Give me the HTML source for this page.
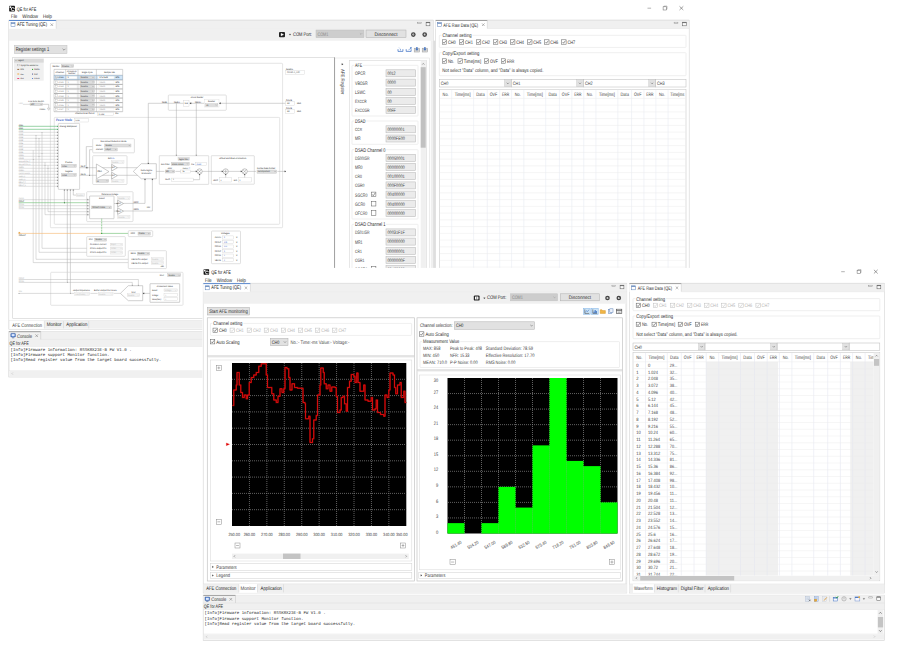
<!DOCTYPE html>
<html lang="en"><head><meta charset="utf-8"><title>QE for AFE</title>
<style>
html,body{margin:0;padding:0;background:#fff;}
body{width:900px;height:648px;overflow:hidden;font-family:"Liberation Sans",sans-serif;}
svg{display:block;}
text{white-space:pre;text-rendering:geometricPrecision;}
</style></head><body>
<svg width="900" height="648" viewBox="0 0 900 648">
<rect x="9.2" y="5.7" width="5.7" height="5.7" fill="#111" rx="0.6"/>
<circle cx="12.73" cy="9.12" r="1.54" fill="none" stroke="#fff" stroke-width="0.9"/>
<rect x="12.73" y="8.84" width="2.17" height="1.14" fill="#111"/>
<rect x="9.66" y="6.27" width="1.54" height="1.71" fill="#fff"/>
<text x="16.8" y="11" font-size="5.08" fill="#1c1c1c" font-family="&quot;Liberation Sans&quot;,sans-serif" textLength="19.5" lengthAdjust="spacingAndGlyphs">QE for AFE</text>
<text x="11" y="18" font-size="5.18" fill="#1c1c1c" font-family="&quot;Liberation Sans&quot;,sans-serif" textLength="6.3" lengthAdjust="spacingAndGlyphs">File</text>
<text x="22.3" y="18" font-size="5.18" fill="#1c1c1c" font-family="&quot;Liberation Sans&quot;,sans-serif" textLength="15.7" lengthAdjust="spacingAndGlyphs">Window</text>
<text x="43" y="18" font-size="5.18" fill="#1c1c1c" font-family="&quot;Liberation Sans&quot;,sans-serif" textLength="9" lengthAdjust="spacingAndGlyphs">Help</text>
<line x1="647.5" y1="8.2" x2="651.1" y2="8.2" stroke="#666" stroke-width="0.5"/>
<rect x="663.1" y="6.8" width="3.2" height="3.2" fill="none" stroke="#666" stroke-width="0.5"/>
<path d="M663.9 6.8 L663.9 6.1 L667 6.1 L667 9.2 L666.3 9.2" fill="none" stroke="#777" stroke-width="0.45"/>
<line x1="679.5" y1="6.3" x2="683.3" y2="10" stroke="#444" stroke-width="0.5"/>
<line x1="679.5" y1="10" x2="683.3" y2="6.3" stroke="#444" stroke-width="0.5"/>
<rect x="8.8" y="20.2" width="424.6" height="309" fill="#fff" stroke="#d4d4d4" stroke-width="0.6"/>
<rect x="9" y="20.3" width="424.2" height="8.1" fill="#f0f0f0"/>
<line x1="9" y1="20.2" x2="433.2" y2="20.2" stroke="#d9d9d9" stroke-width="0.6"/>
<rect x="9" y="28.7" width="424.2" height="12" fill="#f0f0f0"/>
<line x1="9" y1="28.5" x2="433.2" y2="28.5" stroke="#e6e6e6" stroke-width="0.5"/>
<rect x="9" y="20.4" width="47.2" height="8.4" fill="#fff"/>
<line x1="9" y1="20.5" x2="56.2" y2="20.5" stroke="#4a7dc8" stroke-width="0.9"/>
<line x1="56.2" y1="20.4" x2="56.2" y2="28.5" stroke="#c8c8c8" stroke-width="0.5"/>
<rect x="11" y="22.7" width="4" height="4" fill="#fff" stroke="#5a7fb5" stroke-width="0.5"/>
<line x1="11" y1="23.3" x2="15" y2="23.3" stroke="#5a7fb5" stroke-width="0.9"/>
<text x="17" y="26" font-size="5.29" fill="#1c1c1c" font-family="&quot;Liberation Sans&quot;,sans-serif" textLength="30" lengthAdjust="spacingAndGlyphs">AFE Tuning (QE)</text>
<line x1="50.5" y1="23.4" x2="53.1" y2="26" stroke="#777" stroke-width="0.5"/>
<line x1="50.5" y1="26" x2="53.1" y2="23.4" stroke="#777" stroke-width="0.5"/>
<rect x="417.7" y="22.2" width="3.8" height="1.2" fill="#fafafa" stroke="#8a8a8a" stroke-width="0.45"/>
<rect x="426.1" y="22.2" width="3.8" height="3.6" fill="#fafafa" stroke="#5a5a5a" stroke-width="0.5"/>
<line x1="426.1" y1="22.6" x2="429.9" y2="22.6" stroke="#5a5a5a" stroke-width="0.8"/>
<rect x="279" y="32" width="6" height="5.2" fill="#222" rx="1"/>
<path d="M281 33.3 L283.6 34.6 L281 35.9 Z" fill="#fff" stroke="#fff" stroke-width="0.3"/>
<path d="M289.2 34.2 L290.8 34.2 L290 35.2 Z" fill="#333" stroke="#333" stroke-width="0.3"/>
<text x="293" y="36" font-size="5.18" fill="#1c1c1c" font-family="&quot;Liberation Sans&quot;,sans-serif" textLength="19" lengthAdjust="spacingAndGlyphs">COM Port:</text>
<rect x="316" y="30" width="48" height="7.7" fill="#cdcdcd" stroke="#c0c0c0" stroke-width="0.5"/>
<text x="317.4" y="36" font-size="4.97" fill="#8a8a8a" font-family="&quot;Liberation Sans&quot;,sans-serif" textLength="11" lengthAdjust="spacingAndGlyphs">COM1</text>
<path d="M359.9 33.3 L361 34.4 L362.1 33.3" fill="none" stroke="#999" stroke-width="0.5"/>
<rect x="366" y="30" width="40" height="7.7" fill="#e1e1e1" stroke="#adadad" stroke-width="0.5"/>
<text x="386" y="36" font-size="4.97" fill="#303030" font-family="&quot;Liberation Sans&quot;,sans-serif" text-anchor="middle" textLength="23" lengthAdjust="spacingAndGlyphs">Disconnect</text>
<circle cx="413.3" cy="34.6" r="2.3" fill="#444"/>
<circle cx="413.3" cy="34.6" r="1" fill="#ddd"/>
<line x1="413.3" y1="34.6" x2="414.9" y2="33.6" stroke="#444" stroke-width="0.5"/>
<circle cx="424.7" cy="34.6" r="2.3" fill="#444"/>
<circle cx="424.7" cy="34.6" r="1" fill="#ddd"/>
<line x1="424.7" y1="34.6" x2="426.3" y2="33.6" stroke="#444" stroke-width="0.5"/>
<rect x="14.3" y="45.3" width="52.7" height="8.4" fill="#e1e1e1" stroke="#c2c2c2" stroke-width="0.5"/>
<text x="15.7" y="51" font-size="5.4" fill="#303030" font-family="&quot;Liberation Sans&quot;,sans-serif" textLength="33.5" lengthAdjust="spacingAndGlyphs">Register settings 1</text>
<path d="M62.6 48.8 L64 50.2 L65.4 48.8" fill="none" stroke="#555" stroke-width="0.5"/>
<path d="M398 49.2 L398 51.4 L402.9 51.4 L402.9 49.2" fill="none" stroke="#3f72c4" stroke-width="0.75"/>
<line x1="400.45" y1="49" x2="400.45" y2="50.5" stroke="#3f72c4" stroke-width="0.6"/>
<line x1="398.9" y1="47.4" x2="400.2" y2="48.8" stroke="#7fa3dc" stroke-width="0.45"/>
<path d="M406.2 49.2 L406.2 51.4 L411.1 51.4 L411.1 49.2" fill="none" stroke="#3f72c4" stroke-width="0.75"/>
<path d="M408.4 50.3 L410 48.6 L411.2 47.6" fill="none" stroke="#3f72c4" stroke-width="0.6"/>
<rect x="410.3" y="47.2" width="1.3" height="1.4" fill="#3f72c4"/>
<rect x="414.2" y="48.2" width="5.4" height="3.8" fill="#f2f2f2" stroke="#8e8e8e" stroke-width="0.5"/>
<line x1="414.2" y1="50.1" x2="419.6" y2="50.1" stroke="#8e8e8e" stroke-width="0.4"/>
<line x1="416" y1="48.2" x2="416" y2="52" stroke="#8e8e8e" stroke-width="0.35"/>
<line x1="417.8" y1="48.2" x2="417.8" y2="52" stroke="#8e8e8e" stroke-width="0.35"/>
<path d="M416.9 46.9 L416.9 50" fill="none" stroke="#3f72c4" stroke-width="1.3"/>
<path d="M415.7 49.2 L416.9 50.6 L418.1 49.2 Z" fill="#3f72c4" stroke="#3f72c4" stroke-width="0.2"/>
<rect x="422.2" y="48.2" width="5.4" height="3.8" fill="#f2f2f2" stroke="#8e8e8e" stroke-width="0.5"/>
<line x1="422.2" y1="50.1" x2="427.6" y2="50.1" stroke="#8e8e8e" stroke-width="0.4"/>
<line x1="424" y1="48.2" x2="424" y2="52" stroke="#8e8e8e" stroke-width="0.35"/>
<line x1="425.8" y1="48.2" x2="425.8" y2="52" stroke="#8e8e8e" stroke-width="0.35"/>
<path d="M424.9 46.9 L424.9 50" fill="none" stroke="#3f72c4" stroke-width="1.3"/>
<path d="M423.7 49.2 L424.9 50.6 L426.1 49.2 Z" fill="#3f72c4" stroke="#3f72c4" stroke-width="0.2"/>
<rect x="433.2" y="40.7" width="2.5" height="288.3" fill="#dedede"/>
<rect x="431.2" y="40.7" width="1.9" height="288.3" fill="#f0f0f0"/>
<line x1="431.2" y1="40.7" x2="431.2" y2="320.5" stroke="#e2e2e2" stroke-width="0.4"/>
<rect x="9" y="320.7" width="424" height="7.9" fill="#f0f0f0"/>
<line x1="9" y1="320.5" x2="433" y2="320.5" stroke="#dcdcdc" stroke-width="0.5"/>
<rect x="9.6" y="320.7" width="34.7" height="8.1" fill="#fff"/>
<line x1="44.3" y1="321" x2="44.3" y2="328.4" stroke="#d0d0d0" stroke-width="0.5"/>
<line x1="63.5" y1="321" x2="63.5" y2="328.4" stroke="#d0d0d0" stroke-width="0.5"/>
<line x1="88.7" y1="321" x2="88.7" y2="328.4" stroke="#d0d0d0" stroke-width="0.5"/>
<text x="12.3" y="327" font-size="5.18" fill="#404040" font-family="&quot;Liberation Sans&quot;,sans-serif" textLength="29.7" lengthAdjust="spacingAndGlyphs">AFE Connection</text>
<text x="46.7" y="326" font-size="5.18" fill="#1c1c1c" font-family="&quot;Liberation Sans&quot;,sans-serif" textLength="14.9" lengthAdjust="spacingAndGlyphs">Monitor</text>
<text x="66.3" y="326" font-size="5.18" fill="#1c1c1c" font-family="&quot;Liberation Sans&quot;,sans-serif" textLength="21" lengthAdjust="spacingAndGlyphs">Application</text>
<rect x="8.8" y="331.4" width="424.6" height="45.6" fill="#fff" stroke="#cfcfcf" stroke-width="0.6"/>
<rect x="9" y="331.6" width="424" height="7.8" fill="#f0f0f0"/>
<rect x="9" y="339.4" width="424" height="7.2" fill="#f0f0f0"/>
<line x1="9" y1="339.4" x2="433" y2="339.4" stroke="#dcdcdc" stroke-width="0.5"/>
<rect x="9" y="331.6" width="31.7" height="8" fill="#f0f0f0"/>
<line x1="9" y1="331.7" x2="40.7" y2="331.7" stroke="#8a8a8a" stroke-width="0.8"/>
<line x1="40.7" y1="331.6" x2="40.7" y2="339.4" stroke="#c4c4c4" stroke-width="0.5"/>
<rect x="10.8" y="333.4" width="4.6" height="3.6" fill="#3b6fc4" stroke="#2b4f94" stroke-width="0.4" rx="0.5"/>
<rect x="11.6" y="334.1" width="3" height="2.2" fill="#dfeaff"/>
<line x1="12" y1="337.8" x2="14.2" y2="337.8" stroke="#2b4f94" stroke-width="0.6"/>
<text x="17" y="338" font-size="5.18" fill="#303030" font-family="&quot;Liberation Sans&quot;,sans-serif" textLength="15" lengthAdjust="spacingAndGlyphs">Console</text>
<line x1="35.4" y1="334.4" x2="38" y2="337" stroke="#777" stroke-width="0.5"/>
<line x1="35.4" y1="337" x2="38" y2="334.4" stroke="#777" stroke-width="0.5"/>
<text x="9.6" y="345" font-size="4.97" fill="#1c1c1c" font-family="&quot;Liberation Sans&quot;,sans-serif" textLength="19.1" lengthAdjust="spacingAndGlyphs">QE for AFE</text>
<rect x="9.3" y="346.6" width="423.7" height="24.2" fill="#fff" stroke="#e0e0e0" stroke-width="0.4"/>
<text x="10.6" y="351" font-size="4.12" fill="#1c1c1c" font-family="&quot;Liberation Mono&quot;,monospace" textLength="121.03" lengthAdjust="spacingAndGlyphs">[Info]Firmware information: RSSKRX23E-B FW V1.0 .</text>
<text x="10.6" y="356" font-size="4.12" fill="#1c1c1c" font-family="&quot;Liberation Mono&quot;,monospace" textLength="98.8" lengthAdjust="spacingAndGlyphs">[Info]Firmware support Monitor function.</text>
<text x="10.6" y="361" font-size="4.12" fill="#1c1c1c" font-family="&quot;Liberation Mono&quot;,monospace" textLength="150.67" lengthAdjust="spacingAndGlyphs">[Info]Read register value from the target board successfully.</text>
<rect x="9.3" y="371" width="423.7" height="5.2" fill="#f0f0f0"/>
<path d="M12.9 372.6 L11.9 373.6 L12.9 374.6" fill="none" stroke="#aaa" stroke-width="0.45"/>
<rect x="12.7" y="57.5" width="321.7" height="260.8" fill="#fff" stroke="#cfcfcf" stroke-width="0.6"/>
<line x1="334.5" y1="57.6" x2="334.5" y2="268.5" stroke="#6e6e6e" stroke-width="0.9"/>
<rect x="14" y="58.7" width="29.7" height="22" fill="#f0f0f0"/>
<rect x="14" y="58.7" width="29.7" height="3.9" fill="#dadada"/>
<path d="M15.45 60.43 L16 60.98 L16.55 60.43" fill="none" stroke="#555" stroke-width="0.35"/>
<text x="18" y="61" font-size="2.25" fill="#111" font-family="&quot;Liberation Sans&quot;,sans-serif" textLength="5.6" lengthAdjust="spacingAndGlyphs">Legend</text>
<rect x="17.6" y="64.2" width="1.6" height="1.7" fill="#fff" stroke="#999" stroke-width="0.3"/>
<text x="20.4" y="66" font-size="2.16" fill="#111" font-family="&quot;Liberation Sans&quot;,sans-serif" textLength="17.6" lengthAdjust="spacingAndGlyphs">Highlight the selected line</text>
<line x1="17.3" y1="69.4" x2="19.2" y2="69.4" stroke="#8a5a2a" stroke-width="0.9"/>
<text x="20.2" y="70" font-size="2.25" fill="#141414" font-family="&quot;Liberation Sans&quot;,sans-serif" textLength="3.6" lengthAdjust="spacingAndGlyphs">AIN</text>
<circle cx="32.6" cy="69.4" r="0.55" fill="#17a317"/>
<text x="34.3" y="70" font-size="2.23" fill="#141414" font-family="&quot;Liberation Sans&quot;,sans-serif" textLength="5.3" lengthAdjust="spacingAndGlyphs">DSAD0</text>
<line x1="17.3" y1="74" x2="19.2" y2="74" stroke="#f0a030" stroke-width="0.9"/>
<text x="20.2" y="75" font-size="1.89" fill="#141414" font-family="&quot;Liberation Sans&quot;,sans-serif" textLength="3.6" lengthAdjust="spacingAndGlyphs">VREF</text>
<circle cx="32.6" cy="74" r="0.55" fill="#1a237e"/>
<text x="34.3" y="75" font-size="2.19" fill="#141414" font-family="&quot;Liberation Sans&quot;,sans-serif" textLength="3.3" lengthAdjust="spacingAndGlyphs">DAC</text>
<line x1="17.3" y1="78.5" x2="19.2" y2="78.5" stroke="#e8306a" stroke-width="0.9"/>
<text x="20.2" y="79" font-size="1.71" fill="#141414" font-family="&quot;Liberation Sans&quot;,sans-serif" textLength="3.6" lengthAdjust="spacingAndGlyphs">VBIAS</text>
<circle cx="32.6" cy="78.5" r="0.55" fill="#2a62d0"/>
<text x="34.3" y="79" font-size="1.94" fill="#141414" font-family="&quot;Liberation Sans&quot;,sans-serif" textLength="5.3" lengthAdjust="spacingAndGlyphs">D-DSAD</text>
<line x1="33.2" y1="150" x2="33.2" y2="262.6" stroke="#b4b4b4" stroke-width="0.45"/>
<line x1="36" y1="135.4" x2="36" y2="259.3" stroke="#b4b4b4" stroke-width="0.45"/>
<line x1="39" y1="138.3" x2="39" y2="252.3" stroke="#b4b4b4" stroke-width="0.45"/>
<line x1="42" y1="132.3" x2="42" y2="248.3" stroke="#b4b4b4" stroke-width="0.45"/>
<line x1="45" y1="162" x2="45" y2="214.7" stroke="#b4b4b4" stroke-width="0.45"/>
<line x1="48" y1="165" x2="48" y2="211.7" stroke="#b4b4b4" stroke-width="0.45"/>
<rect x="50.4" y="63.3" width="232.2" height="164.4" fill="#fff" stroke="#d0d0d0" stroke-width="0.55" rx="0.8"/>
<text x="52.4" y="67" font-size="2.25" fill="#141414" font-family="&quot;Liberation Sans&quot;,sans-serif" textLength="7.2" lengthAdjust="spacingAndGlyphs">DSAD0:</text>
<rect x="61.3" y="64.6" width="12.4" height="2.8" fill="#dedede" stroke="#c4c4c4" stroke-width="0.4"/>
<text x="62" y="67" font-size="2.25" fill="#303030" font-family="&quot;Liberation Sans&quot;,sans-serif">Enable</text>
<path d="M71.5 65.7 L72.1 66.3 L72.7 65.7" fill="none" stroke="#666" stroke-width="0.35"/>
<rect x="54" y="69.4" width="68.7" height="42.3" fill="#fff"/>
<rect x="54" y="75.3" width="68.7" height="4.55" fill="#cfe4f7"/>
<rect x="55.6" y="76.48" width="2" height="2.2" fill="#fff" stroke="#aaa" stroke-width="0.3"/>
<path d="M56 77.58 L56.5 78.17 L57.3 76.98" fill="none" stroke="#333" stroke-width="0.35"/>
<text x="58.6" y="78" font-size="2.25" fill="#1c1c1c" font-family="&quot;Liberation Sans&quot;,sans-serif" textLength="5" lengthAdjust="spacingAndGlyphs">CH0</text>
<rect x="66.6" y="76.28" width="10.4" height="2.6" fill="#fff" stroke="#e0e0e0" stroke-width="0.3"/>
<text x="67.6" y="78" font-size="2.25" fill="#1c1c1c" font-family="&quot;Liberation Sans&quot;,sans-serif">1</text>
<rect x="80" y="76.28" width="14.6" height="2.6" fill="#dedede" stroke="#c4c4c4" stroke-width="0.4"/>
<text x="80.7" y="78" font-size="2.25" fill="#303030" font-family="&quot;Liberation Sans&quot;,sans-serif" textLength="7.2" lengthAdjust="spacingAndGlyphs">Disable</text>
<path d="M92.4 77.28 L93 77.88 L93.6 77.28" fill="none" stroke="#666" stroke-width="0.35"/>
<rect x="98" y="76.28" width="16" height="2.6" fill="#fff" stroke="#e4e4e4" stroke-width="0.3"/>
<text x="99.6" y="78" font-size="2.25" fill="#1c1c1c" font-family="&quot;Liberation Sans&quot;,sans-serif" textLength="8.4" lengthAdjust="spacingAndGlyphs">976.5625</text>
<text x="115.6" y="78" font-size="2.25" fill="#111" font-family="&quot;Liberation Sans&quot;,sans-serif" textLength="3.8" lengthAdjust="spacingAndGlyphs">SPS</text>
<rect x="55.6" y="81.03" width="2" height="2.2" fill="#fff" stroke="#aaa" stroke-width="0.3"/>
<text x="58.6" y="83" font-size="2.25" fill="#888" font-family="&quot;Liberation Sans&quot;,sans-serif" textLength="5" lengthAdjust="spacingAndGlyphs">CH1</text>
<rect x="66.6" y="80.83" width="10.4" height="2.6" fill="#fff" stroke="#e0e0e0" stroke-width="0.3"/>
<text x="67.6" y="83" font-size="2.25" fill="#888" font-family="&quot;Liberation Sans&quot;,sans-serif">1</text>
<rect x="80" y="80.83" width="14.6" height="2.6" fill="#dedede" stroke="#c4c4c4" stroke-width="0.4"/>
<text x="80.7" y="83" font-size="2.25" fill="#303030" font-family="&quot;Liberation Sans&quot;,sans-serif" textLength="7.2" lengthAdjust="spacingAndGlyphs">Disable</text>
<path d="M92.4 81.83 L93 82.42 L93.6 81.83" fill="none" stroke="#666" stroke-width="0.35"/>
<rect x="98" y="80.83" width="16" height="2.6" fill="#fff" stroke="#e4e4e4" stroke-width="0.3"/>
<text x="99.6" y="83" font-size="2.25" fill="#999" font-family="&quot;Liberation Sans&quot;,sans-serif" textLength="5.4" lengthAdjust="spacingAndGlyphs">15625</text>
<text x="115.6" y="83" font-size="2.25" fill="#111" font-family="&quot;Liberation Sans&quot;,sans-serif" textLength="3.8" lengthAdjust="spacingAndGlyphs">SPS</text>
<rect x="55.6" y="85.58" width="2" height="2.2" fill="#fff" stroke="#aaa" stroke-width="0.3"/>
<text x="58.6" y="87" font-size="2.25" fill="#888" font-family="&quot;Liberation Sans&quot;,sans-serif" textLength="5" lengthAdjust="spacingAndGlyphs">CH2</text>
<rect x="66.6" y="85.38" width="10.4" height="2.6" fill="#fff" stroke="#e0e0e0" stroke-width="0.3"/>
<text x="67.6" y="87" font-size="2.25" fill="#888" font-family="&quot;Liberation Sans&quot;,sans-serif">1</text>
<rect x="80" y="85.38" width="14.6" height="2.6" fill="#dedede" stroke="#c4c4c4" stroke-width="0.4"/>
<text x="80.7" y="87" font-size="2.25" fill="#303030" font-family="&quot;Liberation Sans&quot;,sans-serif" textLength="7.2" lengthAdjust="spacingAndGlyphs">Disable</text>
<path d="M92.4 86.38 L93 86.98 L93.6 86.38" fill="none" stroke="#666" stroke-width="0.35"/>
<rect x="98" y="85.38" width="16" height="2.6" fill="#fff" stroke="#e4e4e4" stroke-width="0.3"/>
<text x="99.6" y="87" font-size="2.25" fill="#999" font-family="&quot;Liberation Sans&quot;,sans-serif" textLength="5.4" lengthAdjust="spacingAndGlyphs">15625</text>
<text x="115.6" y="87" font-size="2.25" fill="#111" font-family="&quot;Liberation Sans&quot;,sans-serif" textLength="3.8" lengthAdjust="spacingAndGlyphs">SPS</text>
<rect x="55.6" y="90.13" width="2" height="2.2" fill="#fff" stroke="#aaa" stroke-width="0.3"/>
<text x="58.6" y="92" font-size="2.25" fill="#888" font-family="&quot;Liberation Sans&quot;,sans-serif" textLength="5" lengthAdjust="spacingAndGlyphs">CH3</text>
<rect x="66.6" y="89.93" width="10.4" height="2.6" fill="#fff" stroke="#e0e0e0" stroke-width="0.3"/>
<text x="67.6" y="92" font-size="2.25" fill="#888" font-family="&quot;Liberation Sans&quot;,sans-serif">1</text>
<rect x="80" y="89.93" width="14.6" height="2.6" fill="#dedede" stroke="#c4c4c4" stroke-width="0.4"/>
<text x="80.7" y="92" font-size="2.25" fill="#303030" font-family="&quot;Liberation Sans&quot;,sans-serif" textLength="7.2" lengthAdjust="spacingAndGlyphs">Disable</text>
<path d="M92.4 90.93 L93 91.53 L93.6 90.93" fill="none" stroke="#666" stroke-width="0.35"/>
<rect x="98" y="89.93" width="16" height="2.6" fill="#fff" stroke="#e4e4e4" stroke-width="0.3"/>
<text x="99.6" y="92" font-size="2.25" fill="#999" font-family="&quot;Liberation Sans&quot;,sans-serif" textLength="5.4" lengthAdjust="spacingAndGlyphs">15625</text>
<text x="115.6" y="92" font-size="2.25" fill="#111" font-family="&quot;Liberation Sans&quot;,sans-serif" textLength="3.8" lengthAdjust="spacingAndGlyphs">SPS</text>
<rect x="55.6" y="94.68" width="2" height="2.2" fill="#fff" stroke="#aaa" stroke-width="0.3"/>
<text x="58.6" y="97" font-size="2.25" fill="#888" font-family="&quot;Liberation Sans&quot;,sans-serif" textLength="5" lengthAdjust="spacingAndGlyphs">CH4</text>
<rect x="66.6" y="94.48" width="10.4" height="2.6" fill="#fff" stroke="#e0e0e0" stroke-width="0.3"/>
<text x="67.6" y="97" font-size="2.25" fill="#888" font-family="&quot;Liberation Sans&quot;,sans-serif">1</text>
<rect x="80" y="94.48" width="14.6" height="2.6" fill="#dedede" stroke="#c4c4c4" stroke-width="0.4"/>
<text x="80.7" y="97" font-size="2.25" fill="#303030" font-family="&quot;Liberation Sans&quot;,sans-serif" textLength="7.2" lengthAdjust="spacingAndGlyphs">Disable</text>
<path d="M92.4 95.48 L93 96.08 L93.6 95.48" fill="none" stroke="#666" stroke-width="0.35"/>
<rect x="98" y="94.48" width="16" height="2.6" fill="#fff" stroke="#e4e4e4" stroke-width="0.3"/>
<text x="99.6" y="97" font-size="2.25" fill="#999" font-family="&quot;Liberation Sans&quot;,sans-serif" textLength="5.4" lengthAdjust="spacingAndGlyphs">15625</text>
<text x="115.6" y="97" font-size="2.25" fill="#111" font-family="&quot;Liberation Sans&quot;,sans-serif" textLength="3.8" lengthAdjust="spacingAndGlyphs">SPS</text>
<rect x="55.6" y="99.23" width="2" height="2.2" fill="#fff" stroke="#aaa" stroke-width="0.3"/>
<text x="58.6" y="101" font-size="2.25" fill="#888" font-family="&quot;Liberation Sans&quot;,sans-serif" textLength="5" lengthAdjust="spacingAndGlyphs">CH5</text>
<rect x="66.6" y="99.03" width="10.4" height="2.6" fill="#fff" stroke="#e0e0e0" stroke-width="0.3"/>
<text x="67.6" y="101" font-size="2.25" fill="#888" font-family="&quot;Liberation Sans&quot;,sans-serif">1</text>
<rect x="80" y="99.03" width="14.6" height="2.6" fill="#dedede" stroke="#c4c4c4" stroke-width="0.4"/>
<text x="80.7" y="101" font-size="2.25" fill="#303030" font-family="&quot;Liberation Sans&quot;,sans-serif" textLength="7.2" lengthAdjust="spacingAndGlyphs">Disable</text>
<path d="M92.4 100.03 L93 100.62 L93.6 100.03" fill="none" stroke="#666" stroke-width="0.35"/>
<rect x="98" y="99.03" width="16" height="2.6" fill="#fff" stroke="#e4e4e4" stroke-width="0.3"/>
<text x="99.6" y="101" font-size="2.25" fill="#999" font-family="&quot;Liberation Sans&quot;,sans-serif" textLength="5.4" lengthAdjust="spacingAndGlyphs">15625</text>
<text x="115.6" y="101" font-size="2.25" fill="#111" font-family="&quot;Liberation Sans&quot;,sans-serif" textLength="3.8" lengthAdjust="spacingAndGlyphs">SPS</text>
<rect x="55.6" y="103.78" width="2" height="2.2" fill="#fff" stroke="#aaa" stroke-width="0.3"/>
<text x="58.6" y="106" font-size="2.25" fill="#888" font-family="&quot;Liberation Sans&quot;,sans-serif" textLength="5" lengthAdjust="spacingAndGlyphs">CH6</text>
<rect x="66.6" y="103.58" width="10.4" height="2.6" fill="#fff" stroke="#e0e0e0" stroke-width="0.3"/>
<text x="67.6" y="106" font-size="2.25" fill="#888" font-family="&quot;Liberation Sans&quot;,sans-serif">1</text>
<rect x="80" y="103.58" width="14.6" height="2.6" fill="#dedede" stroke="#c4c4c4" stroke-width="0.4"/>
<text x="80.7" y="106" font-size="2.25" fill="#303030" font-family="&quot;Liberation Sans&quot;,sans-serif" textLength="7.2" lengthAdjust="spacingAndGlyphs">Disable</text>
<path d="M92.4 104.58 L93 105.17 L93.6 104.58" fill="none" stroke="#666" stroke-width="0.35"/>
<rect x="98" y="103.58" width="16" height="2.6" fill="#fff" stroke="#e4e4e4" stroke-width="0.3"/>
<text x="99.6" y="106" font-size="2.25" fill="#999" font-family="&quot;Liberation Sans&quot;,sans-serif" textLength="5.4" lengthAdjust="spacingAndGlyphs">15625</text>
<text x="115.6" y="106" font-size="2.25" fill="#111" font-family="&quot;Liberation Sans&quot;,sans-serif" textLength="3.8" lengthAdjust="spacingAndGlyphs">SPS</text>
<rect x="55.6" y="108.33" width="2" height="2.2" fill="#fff" stroke="#aaa" stroke-width="0.3"/>
<text x="58.6" y="110" font-size="2.25" fill="#888" font-family="&quot;Liberation Sans&quot;,sans-serif" textLength="5" lengthAdjust="spacingAndGlyphs">CH7</text>
<rect x="66.6" y="108.13" width="10.4" height="2.6" fill="#fff" stroke="#e0e0e0" stroke-width="0.3"/>
<text x="67.6" y="110" font-size="2.25" fill="#888" font-family="&quot;Liberation Sans&quot;,sans-serif">1</text>
<rect x="80" y="108.13" width="14.6" height="2.6" fill="#dedede" stroke="#c4c4c4" stroke-width="0.4"/>
<text x="80.7" y="110" font-size="2.25" fill="#303030" font-family="&quot;Liberation Sans&quot;,sans-serif" textLength="7.2" lengthAdjust="spacingAndGlyphs">Disable</text>
<path d="M92.4 109.13 L93 109.73 L93.6 109.13" fill="none" stroke="#666" stroke-width="0.35"/>
<rect x="98" y="108.13" width="16" height="2.6" fill="#fff" stroke="#e4e4e4" stroke-width="0.3"/>
<text x="99.6" y="110" font-size="2.25" fill="#999" font-family="&quot;Liberation Sans&quot;,sans-serif" textLength="5.4" lengthAdjust="spacingAndGlyphs">15625</text>
<text x="115.6" y="110" font-size="2.25" fill="#111" font-family="&quot;Liberation Sans&quot;,sans-serif" textLength="3.8" lengthAdjust="spacingAndGlyphs">SPS</text>
<line x1="54" y1="69.4" x2="122.7" y2="69.4" stroke="#a0a0a0" stroke-width="0.45"/>
<line x1="54" y1="75.3" x2="122.7" y2="75.3" stroke="#888" stroke-width="0.45"/>
<line x1="54" y1="79.85" x2="122.7" y2="79.85" stroke="#555" stroke-width="0.45"/>
<line x1="54" y1="84.4" x2="122.7" y2="84.4" stroke="#555" stroke-width="0.45"/>
<line x1="54" y1="88.95" x2="122.7" y2="88.95" stroke="#555" stroke-width="0.45"/>
<line x1="54" y1="93.5" x2="122.7" y2="93.5" stroke="#555" stroke-width="0.45"/>
<line x1="54" y1="98.05" x2="122.7" y2="98.05" stroke="#555" stroke-width="0.45"/>
<line x1="54" y1="102.6" x2="122.7" y2="102.6" stroke="#555" stroke-width="0.45"/>
<line x1="54" y1="107.15" x2="122.7" y2="107.15" stroke="#555" stroke-width="0.45"/>
<line x1="54" y1="111.7" x2="122.7" y2="111.7" stroke="#888" stroke-width="0.45"/>
<rect x="54" y="75.3" width="68.7" height="4.55" fill="none" stroke="#a8cdf0" stroke-width="0.35"/>
<line x1="54" y1="69.4" x2="54" y2="111.7" stroke="#a8a8a8" stroke-width="0.45"/>
<line x1="65.7" y1="69.4" x2="65.7" y2="111.7" stroke="#a8a8a8" stroke-width="0.45"/>
<line x1="78" y1="69.4" x2="78" y2="111.7" stroke="#a8a8a8" stroke-width="0.45"/>
<line x1="96.4" y1="69.4" x2="96.4" y2="111.7" stroke="#a8a8a8" stroke-width="0.45"/>
<line x1="122.7" y1="69.4" x2="122.7" y2="111.7" stroke="#a8a8a8" stroke-width="0.45"/>
<text x="59.8" y="73" font-size="2.25" fill="#141414" font-family="&quot;Liberation Sans&quot;,sans-serif" text-anchor="middle">Channel</text>
<text x="71.8" y="72" font-size="2.25" fill="#141414" font-family="&quot;Liberation Sans&quot;,sans-serif" text-anchor="middle" textLength="9.6" lengthAdjust="spacingAndGlyphs">Conversion</text>
<text x="71.8" y="74" font-size="2.25" fill="#141414" font-family="&quot;Liberation Sans&quot;,sans-serif" text-anchor="middle" textLength="7" lengthAdjust="spacingAndGlyphs">Number</text>
<text x="87.2" y="73" font-size="2.25" fill="#141414" font-family="&quot;Liberation Sans&quot;,sans-serif" text-anchor="middle" textLength="11" lengthAdjust="spacingAndGlyphs">Single Cycle</text>
<text x="109.5" y="73" font-size="2.25" fill="#141414" font-family="&quot;Liberation Sans&quot;,sans-serif" text-anchor="middle" textLength="11" lengthAdjust="spacingAndGlyphs">Sample rate</text>
<text x="75.3" y="114" font-size="2.25" fill="#141414" font-family="&quot;Liberation Sans&quot;,sans-serif" textLength="19" lengthAdjust="spacingAndGlyphs">Channel Scan Period</text>
<rect x="97.3" y="112.2" width="16.4" height="3.1" fill="#fff" stroke="#d2d2d2" stroke-width="0.4"/>
<text x="98.5" y="115" font-size="2.25" fill="#303030" font-family="&quot;Liberation Sans&quot;,sans-serif">1.024</text>
<text x="115.3" y="114" font-size="2.25" fill="#141414" font-family="&quot;Liberation Sans&quot;,sans-serif">ms</text>
<rect x="54.3" y="117.4" width="225.4" height="106.9" fill="#fff" stroke="#d0d0d0" stroke-width="0.55" rx="0.8"/>
<text x="56" y="121" font-size="3.56" fill="#3a62c8" font-family="&quot;Liberation Serif&quot;,serif" font-weight="bold" textLength="16" lengthAdjust="spacingAndGlyphs">Power Mode</text>
<rect x="74.3" y="118.6" width="14.1" height="3.4" fill="#fff" stroke="#d2d2d2" stroke-width="0.4"/>
<text x="75.5" y="121" font-size="2.25" fill="#303030" font-family="&quot;Liberation Sans&quot;,sans-serif" textLength="4" lengthAdjust="spacingAndGlyphs">Low</text>
<line x1="18.7" y1="126.3" x2="57.8" y2="126.3" stroke="#45b060" stroke-width="0.55"/>
<circle cx="57.6" cy="126.3" r="0.55" fill="#1e8e3e"/>
<text x="18.7" y="126" font-size="2.25" fill="#1c1c1c" font-family="&quot;Liberation Sans&quot;,sans-serif" textLength="4.5" lengthAdjust="spacingAndGlyphs">AIN0</text>
<line x1="18.7" y1="129.3" x2="57.8" y2="129.3" stroke="#45b060" stroke-width="0.55"/>
<circle cx="57.6" cy="129.3" r="0.55" fill="#1e8e3e"/>
<text x="18.7" y="129" font-size="2.25" fill="#1c1c1c" font-family="&quot;Liberation Sans&quot;,sans-serif" textLength="4.5" lengthAdjust="spacingAndGlyphs">AIN1</text>
<line x1="18.7" y1="132.3" x2="58.3" y2="132.3" stroke="#c0c0c0" stroke-width="0.45"/>
<path d="M57.32 131.75 L58.2 132.3 L57.32 132.85 Z" fill="#555" stroke="#555" stroke-width="0.2"/>
<text x="18.7" y="132" font-size="2.25" fill="#999" font-family="&quot;Liberation Sans&quot;,sans-serif" textLength="4.58" lengthAdjust="spacingAndGlyphs">AIN2</text>
<line x1="18.7" y1="135.3" x2="58.3" y2="135.3" stroke="#c0c0c0" stroke-width="0.45"/>
<path d="M57.32 134.75 L58.2 135.3 L57.32 135.85 Z" fill="#555" stroke="#555" stroke-width="0.2"/>
<text x="18.7" y="135" font-size="2.25" fill="#999" font-family="&quot;Liberation Sans&quot;,sans-serif" textLength="4.58" lengthAdjust="spacingAndGlyphs">AIN3</text>
<line x1="18.7" y1="138.3" x2="58.3" y2="138.3" stroke="#c0c0c0" stroke-width="0.45"/>
<path d="M57.32 137.75 L58.2 138.3 L57.32 138.85 Z" fill="#555" stroke="#555" stroke-width="0.2"/>
<text x="18.7" y="138" font-size="2.25" fill="#999" font-family="&quot;Liberation Sans&quot;,sans-serif" textLength="4.58" lengthAdjust="spacingAndGlyphs">AIN4</text>
<line x1="18.7" y1="141.3" x2="58.3" y2="141.3" stroke="#c0c0c0" stroke-width="0.45"/>
<path d="M57.32 140.75 L58.2 141.3 L57.32 141.85 Z" fill="#555" stroke="#555" stroke-width="0.2"/>
<text x="18.7" y="141" font-size="2.25" fill="#999" font-family="&quot;Liberation Sans&quot;,sans-serif" textLength="4.58" lengthAdjust="spacingAndGlyphs">AIN5</text>
<line x1="18.7" y1="144.3" x2="58.3" y2="144.3" stroke="#c0c0c0" stroke-width="0.45"/>
<path d="M57.32 143.75 L58.2 144.3 L57.32 144.85 Z" fill="#555" stroke="#555" stroke-width="0.2"/>
<text x="18.7" y="144" font-size="2.25" fill="#999" font-family="&quot;Liberation Sans&quot;,sans-serif" textLength="4.58" lengthAdjust="spacingAndGlyphs">AIN6</text>
<line x1="18.7" y1="147.3" x2="58.3" y2="147.3" stroke="#c0c0c0" stroke-width="0.45"/>
<path d="M57.32 146.75 L58.2 147.3 L57.32 147.85 Z" fill="#555" stroke="#555" stroke-width="0.2"/>
<text x="18.7" y="147" font-size="2.25" fill="#999" font-family="&quot;Liberation Sans&quot;,sans-serif" textLength="4.58" lengthAdjust="spacingAndGlyphs">AIN7</text>
<line x1="18.7" y1="150.3" x2="58.3" y2="150.3" stroke="#c0c0c0" stroke-width="0.45"/>
<path d="M57.32 149.75 L58.2 150.3 L57.32 150.85 Z" fill="#555" stroke="#555" stroke-width="0.2"/>
<text x="18.7" y="150" font-size="2.25" fill="#999" font-family="&quot;Liberation Sans&quot;,sans-serif" textLength="4.58" lengthAdjust="spacingAndGlyphs">AIN8</text>
<line x1="18.7" y1="153.3" x2="58.3" y2="153.3" stroke="#c0c0c0" stroke-width="0.45"/>
<path d="M57.32 152.75 L58.2 153.3 L57.32 153.85 Z" fill="#555" stroke="#555" stroke-width="0.2"/>
<text x="18.7" y="153" font-size="2.25" fill="#999" font-family="&quot;Liberation Sans&quot;,sans-serif" textLength="4.58" lengthAdjust="spacingAndGlyphs">AIN9</text>
<line x1="18.7" y1="156.3" x2="58.3" y2="156.3" stroke="#c0c0c0" stroke-width="0.45"/>
<path d="M57.32 155.75 L58.2 156.3 L57.32 156.85 Z" fill="#555" stroke="#555" stroke-width="0.2"/>
<text x="18.7" y="156" font-size="2.25" fill="#999" font-family="&quot;Liberation Sans&quot;,sans-serif" textLength="5.2" lengthAdjust="spacingAndGlyphs">AIN10</text>
<line x1="18.7" y1="159.3" x2="58.3" y2="159.3" stroke="#c0c0c0" stroke-width="0.45"/>
<path d="M57.32 158.75 L58.2 159.3 L57.32 159.85 Z" fill="#555" stroke="#555" stroke-width="0.2"/>
<text x="18.7" y="159" font-size="2.25" fill="#999" font-family="&quot;Liberation Sans&quot;,sans-serif" textLength="5.2" lengthAdjust="spacingAndGlyphs">AIN11</text>
<line x1="18.7" y1="162.3" x2="58.3" y2="162.3" stroke="#c0c0c0" stroke-width="0.45"/>
<path d="M57.32 161.75 L58.2 162.3 L57.32 162.85 Z" fill="#555" stroke="#555" stroke-width="0.2"/>
<text x="18.7" y="162" font-size="1.85" fill="#999" font-family="&quot;Liberation Sans&quot;,sans-serif" textLength="11.4" lengthAdjust="spacingAndGlyphs">AIN4_AIN5/PGA_P</text>
<line x1="18.7" y1="165.3" x2="58.3" y2="165.3" stroke="#c0c0c0" stroke-width="0.45"/>
<path d="M57.32 164.75 L58.2 165.3 L57.32 165.85 Z" fill="#555" stroke="#555" stroke-width="0.2"/>
<text x="18.7" y="165" font-size="1.84" fill="#999" font-family="&quot;Liberation Sans&quot;,sans-serif" textLength="11.4" lengthAdjust="spacingAndGlyphs">AIN6_AIN7/PGA_N</text>
<line x1="18.7" y1="168.3" x2="58.3" y2="168.3" stroke="#c0c0c0" stroke-width="0.45"/>
<path d="M57.32 167.75 L58.2 168.3 L57.32 168.85 Z" fill="#555" stroke="#555" stroke-width="0.2"/>
<text x="18.7" y="168" font-size="2.23" fill="#999" font-family="&quot;Liberation Sans&quot;,sans-serif" textLength="5.2" lengthAdjust="spacingAndGlyphs">AVCC0</text>
<line x1="18.7" y1="171.3" x2="58.3" y2="171.3" stroke="#c0c0c0" stroke-width="0.45"/>
<path d="M57.32 170.75 L58.2 171.3 L57.32 171.85 Z" fill="#555" stroke="#555" stroke-width="0.2"/>
<text x="18.7" y="171" font-size="2.25" fill="#999" font-family="&quot;Liberation Sans&quot;,sans-serif" textLength="5.2" lengthAdjust="spacingAndGlyphs">AVSS0</text>
<line x1="18.7" y1="174.3" x2="58.3" y2="174.3" stroke="#c0c0c0" stroke-width="0.45"/>
<path d="M57.32 173.75 L58.2 174.3 L57.32 174.85 Z" fill="#555" stroke="#555" stroke-width="0.2"/>
<text x="18.7" y="174" font-size="1.94" fill="#999" font-family="&quot;Liberation Sans&quot;,sans-serif" textLength="11.4" lengthAdjust="spacingAndGlyphs">(AVCC0-AVSS0)/2</text>
<line x1="18.7" y1="177.3" x2="58.3" y2="177.3" stroke="#c0c0c0" stroke-width="0.45"/>
<path d="M57.32 176.75 L58.2 177.3 L57.32 177.85 Z" fill="#555" stroke="#555" stroke-width="0.2"/>
<text x="18.7" y="177" font-size="1.93" fill="#999" font-family="&quot;Liberation Sans&quot;,sans-serif" textLength="6.44" lengthAdjust="spacingAndGlyphs">TEMPS_P</text>
<line x1="18.7" y1="180.3" x2="58.3" y2="180.3" stroke="#c0c0c0" stroke-width="0.45"/>
<path d="M57.32 179.75 L58.2 180.3 L57.32 180.85 Z" fill="#555" stroke="#555" stroke-width="0.2"/>
<text x="18.7" y="180" font-size="1.91" fill="#999" font-family="&quot;Liberation Sans&quot;,sans-serif" textLength="6.44" lengthAdjust="spacingAndGlyphs">TEMPS_N</text>
<line x1="18.7" y1="183.3" x2="58.3" y2="183.3" stroke="#c0c0c0" stroke-width="0.45"/>
<path d="M57.32 182.75 L58.2 183.3 L57.32 183.85 Z" fill="#555" stroke="#555" stroke-width="0.2"/>
<text x="18.7" y="183" font-size="1.85" fill="#999" font-family="&quot;Liberation Sans&quot;,sans-serif" textLength="7.06" lengthAdjust="spacingAndGlyphs">REFOUT_P</text>
<line x1="18.7" y1="186.3" x2="58.3" y2="186.3" stroke="#c0c0c0" stroke-width="0.45"/>
<path d="M57.32 185.75 L58.2 186.3 L57.32 186.85 Z" fill="#555" stroke="#555" stroke-width="0.2"/>
<text x="18.7" y="186" font-size="1.83" fill="#999" font-family="&quot;Liberation Sans&quot;,sans-serif" textLength="7.06" lengthAdjust="spacingAndGlyphs">REFOUT_N</text>
<circle cx="36" cy="135.3" r="0.4" fill="#888"/>
<circle cx="42" cy="132.3" r="0.4" fill="#888"/>
<circle cx="39" cy="138.3" r="0.4" fill="#888"/>
<circle cx="39" cy="156.3" r="0.4" fill="#888"/>
<circle cx="42" cy="153.3" r="0.4" fill="#888"/>
<circle cx="33.2" cy="159.3" r="0.4" fill="#888"/>
<circle cx="45" cy="165.3" r="0.4" fill="#888"/>
<circle cx="48" cy="168.3" r="0.4" fill="#888"/>
<circle cx="36" cy="138.3" r="0.4" fill="#888"/>
<rect x="58.3" y="123.4" width="21.3" height="66" fill="#fff" stroke="#bcbcbc" stroke-width="0.55" rx="0.4"/>
<text x="59.4" y="127" font-size="2.25" fill="#141414" font-family="&quot;Liberation Sans&quot;,sans-serif" textLength="17.6" lengthAdjust="spacingAndGlyphs">Analog Multiplexer</text>
<text x="65.3" y="163" font-size="2.25" fill="#141414" font-family="&quot;Liberation Sans&quot;,sans-serif" textLength="7.1" lengthAdjust="spacingAndGlyphs">Positive</text>
<rect x="61.3" y="164.3" width="15" height="3" fill="#dedede" stroke="#c4c4c4" stroke-width="0.4"/>
<text x="62" y="167" font-size="2.25" fill="#303030" font-family="&quot;Liberation Sans&quot;,sans-serif">AIN0</text>
<path d="M74.1 165.5 L74.7 166.1 L75.3 165.5" fill="none" stroke="#666" stroke-width="0.35"/>
<text x="65.3" y="172" font-size="2.25" fill="#141414" font-family="&quot;Liberation Sans&quot;,sans-serif" textLength="7.3" lengthAdjust="spacingAndGlyphs">Negative</text>
<rect x="61.3" y="173.4" width="15" height="2.9" fill="#dedede" stroke="#c4c4c4" stroke-width="0.4"/>
<text x="62" y="176" font-size="2.25" fill="#303030" font-family="&quot;Liberation Sans&quot;,sans-serif">AIN1</text>
<path d="M74.1 174.55 L74.7 175.15 L75.3 174.55" fill="none" stroke="#666" stroke-width="0.35"/>
<path d="M63.9 190.4 L64.4 189.6 L64.9 190.4 Z" fill="#555" stroke="#555" stroke-width="0.2"/>
<path d="M66.8 190.4 L67.3 189.6 L67.8 190.4 Z" fill="#555" stroke="#555" stroke-width="0.2"/>
<path d="M69.9 190.4 L70.4 189.6 L70.9 190.4 Z" fill="#555" stroke="#555" stroke-width="0.2"/>
<path d="M72.8 190.4 L73.3 189.6 L73.8 190.4 Z" fill="#555" stroke="#555" stroke-width="0.2"/>
<line x1="64.4" y1="189.4" x2="64.4" y2="202.7" stroke="#a0a0a0" stroke-width="0.45"/>
<circle cx="64.4" cy="202.7" r="0.45" fill="#666"/>
<line x1="67.3" y1="189.4" x2="67.3" y2="282.3" stroke="#a0a0a0" stroke-width="0.45"/>
<circle cx="67.5" cy="282.3" r="0.45" fill="#666"/>
<line x1="70.4" y1="189.4" x2="70.4" y2="293.4" stroke="#a0a0a0" stroke-width="0.45"/>
<circle cx="70.6" cy="293.4" r="0.45" fill="#666"/>
<path d="M73.3 189.4 L73.3 195.1 L76.4 195.1" fill="none" stroke="#a0a0a0" stroke-width="0.45"/>
<rect x="76.4" y="193.7" width="8.3" height="2.9" fill="#f4f4f4" stroke="#dcdcdc" stroke-width="0.4"/>
<text x="77.1" y="196" font-size="2.25" fill="#bbb" font-family="&quot;Liberation Sans&quot;,sans-serif" textLength="5.5" lengthAdjust="spacingAndGlyphs">Disable</text>
<path d="M82.5 194.85 L83.1 195.45 L83.7 194.85" fill="none" stroke="#c4c4c4" stroke-width="0.35"/>
<text x="80.7" y="167" font-size="2.25" fill="#111" font-family="&quot;Liberation Sans&quot;,sans-serif" textLength="4.6" lengthAdjust="spacingAndGlyphs">DS-IP</text>
<text x="80.7" y="175" font-size="2.25" fill="#111" font-family="&quot;Liberation Sans&quot;,sans-serif" textLength="4.9" lengthAdjust="spacingAndGlyphs">DS-IN</text>
<path d="M92.7 146.6 L86.3 146.6 L86.3 167.7" fill="none" stroke="#a0a0a0" stroke-width="0.45"/>
<path d="M87.36 167.1 L86.4 167.7 L87.36 168.3 Z" fill="#333" stroke="#333" stroke-width="0.2"/>
<circle cx="86.3" cy="167.7" r="0.5" fill="#444"/>
<path d="M92.7 149.7 L89.6 149.7 L89.6 175.3" fill="none" stroke="#a0a0a0" stroke-width="0.45"/>
<circle cx="89.6" cy="175.3" r="0.5" fill="#444"/>
<rect x="92.7" y="138.7" width="41.7" height="14.1" fill="#fff" stroke="#c8c8c8" stroke-width="0.55" rx="0.8"/>
<text x="113.5" y="142" font-size="2.25" fill="#141414" font-family="&quot;Liberation Sans&quot;,sans-serif" text-anchor="middle" textLength="26" lengthAdjust="spacingAndGlyphs">Disconnect Detection Mode</text>
<text x="96" y="146" font-size="2.25" fill="#141414" font-family="&quot;Liberation Sans&quot;,sans-serif" textLength="5.6" lengthAdjust="spacingAndGlyphs">Mode:</text>
<rect x="104.7" y="144" width="26.3" height="3" fill="#dedede" stroke="#c4c4c4" stroke-width="0.4"/>
<text x="105.4" y="146" font-size="2.25" fill="#303030" font-family="&quot;Liberation Sans&quot;,sans-serif" textLength="6.5" lengthAdjust="spacingAndGlyphs">Disable</text>
<path d="M128.8 145.2 L129.4 145.8 L130 145.2" fill="none" stroke="#666" stroke-width="0.35"/>
<text x="96" y="150" font-size="2.25" fill="#141414" font-family="&quot;Liberation Sans&quot;,sans-serif" textLength="7.4" lengthAdjust="spacingAndGlyphs">Current:</text>
<rect x="104.7" y="148" width="12.6" height="3" fill="#dedede" stroke="#c4c4c4" stroke-width="0.4"/>
<text x="105.4" y="150" font-size="2.25" fill="#303030" font-family="&quot;Liberation Sans&quot;,sans-serif" textLength="5.4" lengthAdjust="spacingAndGlyphs">0.5µA</text>
<path d="M115.1 149.2 L115.7 149.8 L116.3 149.2" fill="none" stroke="#666" stroke-width="0.35"/>
<rect x="92.7" y="155.7" width="34.3" height="28.8" fill="#fff" stroke="#c8c8c8" stroke-width="0.55" rx="0.8"/>
<line x1="79.6" y1="167.7" x2="141" y2="167.7" stroke="#a0a0a0" stroke-width="0.45"/>
<line x1="79.6" y1="175.3" x2="141" y2="175.3" stroke="#a0a0a0" stroke-width="0.45"/>
<text x="108" y="159" font-size="2.21" fill="#141414" font-family="&quot;Liberation Sans&quot;,sans-serif" textLength="3.6" lengthAdjust="spacingAndGlyphs">BUF/</text>
<text x="111.6" y="159" font-size="1.86" fill="#3a62c8" font-family="&quot;Liberation Sans&quot;,sans-serif" textLength="2.8" lengthAdjust="spacingAndGlyphs">PGA</text>
<path d="M96.4 164 L109 171.6 L96.4 178.8 Z" fill="#fff" stroke="#9a9a9a" stroke-width="0.5"/>
<text x="97.4" y="172" font-size="2.25" fill="#111" font-family="&quot;Liberation Sans&quot;,sans-serif" textLength="4.4" lengthAdjust="spacingAndGlyphs">PGA</text>
<rect x="96" y="179.4" width="12.7" height="2.9" fill="#dedede" stroke="#c4c4c4" stroke-width="0.4"/>
<text x="96.7" y="182" font-size="2.25" fill="#303030" font-family="&quot;Liberation Sans&quot;,sans-serif" textLength="2" lengthAdjust="spacingAndGlyphs">x1</text>
<path d="M106.5 180.55 L107.1 181.15 L107.7 180.55" fill="none" stroke="#666" stroke-width="0.35"/>
<rect x="111.3" y="160.7" width="12.7" height="2.7" fill="#f4f4f4" stroke="#dcdcdc" stroke-width="0.4"/>
<text x="112" y="163" font-size="2.25" fill="#bbb" font-family="&quot;Liberation Sans&quot;,sans-serif" textLength="6.4" lengthAdjust="spacingAndGlyphs">Disable</text>
<path d="M121.8 161.75 L122.4 162.35 L123 161.75" fill="none" stroke="#c4c4c4" stroke-width="0.35"/>
<rect x="111.3" y="179.4" width="12.7" height="2.8" fill="#f4f4f4" stroke="#dcdcdc" stroke-width="0.4"/>
<text x="112" y="182" font-size="2.25" fill="#bbb" font-family="&quot;Liberation Sans&quot;,sans-serif" textLength="6.4" lengthAdjust="spacingAndGlyphs">Disable</text>
<path d="M121.8 180.5 L122.4 181.1 L123 180.5" fill="none" stroke="#c4c4c4" stroke-width="0.35"/>
<path d="M111.6 164.3 L117.3 167.7 L111.6 171.1 Z" fill="#fff" stroke="#8a8a8a" stroke-width="0.5"/>
<text x="111.9" y="168" font-size="2.03" fill="#1c1c1c" font-family="&quot;Liberation Sans&quot;,sans-serif" textLength="2.9" lengthAdjust="spacingAndGlyphs">BUF</text>
<path d="M111.6 172.2 L117.3 175.6 L111.6 179 Z" fill="#fff" stroke="#8a8a8a" stroke-width="0.5"/>
<text x="111.9" y="176" font-size="2.03" fill="#1c1c1c" font-family="&quot;Liberation Sans&quot;,sans-serif" textLength="2.9" lengthAdjust="spacingAndGlyphs">BUF</text>
<path d="M133.3 171.4 L141.3 163.7 L156.3 163.7 L156.3 178.8 L141.3 178.8 Z" fill="#fff" stroke="#a8a8a8" stroke-width="0.55"/>
<text x="146.4" y="171" font-size="2.25" fill="#303030" font-family="&quot;Liberation Sans&quot;,sans-serif" text-anchor="middle" textLength="11.4" lengthAdjust="spacingAndGlyphs">Delta Sigma</text>
<text x="146.4" y="174" font-size="2.25" fill="#303030" font-family="&quot;Liberation Sans&quot;,sans-serif" text-anchor="middle" textLength="9.6" lengthAdjust="spacingAndGlyphs">Modulator</text>
<line x1="148.3" y1="103.3" x2="148.3" y2="163.7" stroke="#a0a0a0" stroke-width="0.45"/>
<path d="M147.7 162.94 L148.3 163.9 L148.9 162.94 Z" fill="#333" stroke="#333" stroke-width="0.2"/>
<rect x="168.3" y="95" width="58" height="15.3" fill="#fff" stroke="#c8c8c8" stroke-width="0.55" rx="0.8"/>
<line x1="148.3" y1="103.3" x2="285.7" y2="103.3" stroke="#a0a0a0" stroke-width="0.45"/>
<text x="197" y="98" font-size="2.25" fill="#141414" font-family="&quot;Liberation Sans&quot;,sans-serif" text-anchor="middle" textLength="12.5" lengthAdjust="spacingAndGlyphs">Clock Divider</text>
<text x="162" y="103" font-size="2.25" fill="#111" font-family="&quot;Liberation Sans&quot;,sans-serif" textLength="5" lengthAdjust="spacingAndGlyphs">fMOD</text>
<text x="174" y="103" font-size="2.25" fill="#111" font-family="&quot;Liberation Sans&quot;,sans-serif" textLength="6" lengthAdjust="spacingAndGlyphs">fMOD x</text>
<rect x="183.7" y="100.3" width="5.3" height="6" fill="#fff" stroke="#d0d0d0" stroke-width="0.4"/>
<text x="184.6" y="104" font-size="2.25" fill="#141414" font-family="&quot;Liberation Sans&quot;,sans-serif" textLength="3.4" lengthAdjust="spacingAndGlyphs">1/4</text>
<path d="M191.12 102.6 L190 103.3 L191.12 104 Z" fill="#222" stroke="#222" stroke-width="0.2"/>
<text x="195" y="103" font-size="2.19" fill="#111" font-family="&quot;Liberation Sans&quot;,sans-serif" textLength="6" lengthAdjust="spacingAndGlyphs">fDSAD x</text>
<rect x="204.3" y="99.7" width="14.7" height="7.3" fill="#fff" stroke="#dcdcdc" stroke-width="0.4"/>
<text x="211.6" y="102" font-size="2.25" fill="#141414" font-family="&quot;Liberation Sans&quot;,sans-serif" text-anchor="middle">Divider</text>
<rect x="205.6" y="103.6" width="12.2" height="2.7" fill="#dedede" stroke="#c4c4c4" stroke-width="0.4"/>
<text x="206.3" y="106" font-size="2.25" fill="#303030" font-family="&quot;Liberation Sans&quot;,sans-serif" textLength="2" lengthAdjust="spacingAndGlyphs">x5</text>
<path d="M215.6 104.65 L216.2 105.25 L216.8 104.65" fill="none" stroke="#666" stroke-width="0.35"/>
<path d="M220.52 102.6 L219.4 103.3 L220.52 104 Z" fill="#222" stroke="#222" stroke-width="0.2"/>
<line x1="176.4" y1="103.3" x2="176.4" y2="155.7" stroke="#a0a0a0" stroke-width="0.45"/>
<path d="M175.8 154.94 L176.4 155.9 L177 154.94 Z" fill="#333" stroke="#333" stroke-width="0.2"/>
<line x1="196.3" y1="103.3" x2="196.3" y2="155.7" stroke="#a0a0a0" stroke-width="0.45"/>
<path d="M195.7 154.94 L196.3 155.9 L196.9 154.94 Z" fill="#333" stroke="#333" stroke-width="0.2"/>
<text x="286" y="70" font-size="2.25" fill="#141414" font-family="&quot;Liberation Sans&quot;,sans-serif" textLength="7" lengthAdjust="spacingAndGlyphs">DataFile</text>
<rect x="285.7" y="70.7" width="18.9" height="4" fill="#fff" stroke="#d2d2d2" stroke-width="0.4"/>
<text x="286.9" y="73" font-size="2.25" fill="#4c4c4c" font-family="&quot;Liberation Sans&quot;,sans-serif" textLength="13" lengthAdjust="spacingAndGlyphs">RX23E-A_AFE</text>
<text x="286" y="101" font-size="2.25" fill="#141414" font-family="&quot;Liberation Sans&quot;,sans-serif" textLength="6" lengthAdjust="spacingAndGlyphs">PCLKB</text>
<rect x="285.7" y="101.7" width="8.6" height="4" fill="#fff" stroke="#d2d2d2" stroke-width="0.4"/>
<text x="286.9" y="104" font-size="2.25" fill="#303030" font-family="&quot;Liberation Sans&quot;,sans-serif" textLength="2.6" lengthAdjust="spacingAndGlyphs">32</text>
<text x="297" y="104" font-size="2.25" fill="#111" font-family="&quot;Liberation Sans&quot;,sans-serif" textLength="4" lengthAdjust="spacingAndGlyphs">MHz</text>
<text x="286" y="109" font-size="2.25" fill="#141414" font-family="&quot;Liberation Sans&quot;,sans-serif" textLength="6" lengthAdjust="spacingAndGlyphs">PCLKB</text>
<rect x="285.7" y="109.7" width="8.6" height="4" fill="#fff" stroke="#d2d2d2" stroke-width="0.4"/>
<text x="286.9" y="112" font-size="2.25" fill="#303030" font-family="&quot;Liberation Sans&quot;,sans-serif" textLength="2.6" lengthAdjust="spacingAndGlyphs">32</text>
<text x="297" y="112" font-size="2.25" fill="#111" font-family="&quot;Liberation Sans&quot;,sans-serif" textLength="4" lengthAdjust="spacingAndGlyphs">MHz</text>
<rect x="159.3" y="155.7" width="49.4" height="28.7" fill="#fff" stroke="#c8c8c8" stroke-width="0.55" rx="0.4"/>
<rect x="178" y="157.4" width="11.3" height="2.9" fill="#e4e4e4" stroke="#c4c4c4" stroke-width="0.35"/>
<text x="183.7" y="160" font-size="2.25" fill="#111" font-family="&quot;Liberation Sans&quot;,sans-serif" text-anchor="middle" textLength="9.6" lengthAdjust="spacingAndGlyphs">Digital Filter</text>
<rect x="211.3" y="155.7" width="43" height="28.5" fill="#fff" stroke="#c8c8c8" stroke-width="0.55" rx="0.4"/>
<line x1="156.3" y1="171.4" x2="285.7" y2="171.4" stroke="#a0a0a0" stroke-width="0.45"/>
<text x="161" y="165" font-size="2.25" fill="#111" font-family="&quot;Liberation Sans&quot;,sans-serif" textLength="8.6" lengthAdjust="spacingAndGlyphs">Sinc Filter</text>
<rect x="171.3" y="162.3" width="18" height="3" fill="#dedede" stroke="#c4c4c4" stroke-width="0.4"/>
<text x="172" y="165" font-size="2.25" fill="#303030" font-family="&quot;Liberation Sans&quot;,sans-serif" textLength="11.5" lengthAdjust="spacingAndGlyphs">SINC4+SINC4</text>
<path d="M187.1 163.5 L187.7 164.1 L188.3 163.5" fill="none" stroke="#666" stroke-width="0.35"/>
<text x="191.3" y="165" font-size="2" fill="#111" font-family="&quot;Liberation Sans&quot;,sans-serif" textLength="3.1" lengthAdjust="spacingAndGlyphs">OSR</text>
<rect x="195.3" y="162.2" width="11.4" height="3.2" fill="#fff" stroke="#d2d2d2" stroke-width="0.4"/>
<text x="196.5" y="165" font-size="2.25" fill="#3a62c8" font-family="&quot;Liberation Sans&quot;,sans-serif" textLength="4.6" lengthAdjust="spacingAndGlyphs">2048</text>
<text x="167.7" y="169" font-size="2.25" fill="#141414" font-family="&quot;Liberation Sans&quot;,sans-serif" textLength="4.3" lengthAdjust="spacingAndGlyphs">Order</text>
<rect x="164.4" y="170" width="11" height="3" fill="#fff"/>
<rect x="165.3" y="170" width="9.4" height="3" fill="#dedede" stroke="#c4c4c4" stroke-width="0.4"/>
<text x="166" y="172" font-size="2.25" fill="#303030" font-family="&quot;Liberation Sans&quot;,sans-serif" textLength="3" lengthAdjust="spacingAndGlyphs">8th</text>
<path d="M172.5 171.2 L173.1 171.8 L173.7 171.2" fill="none" stroke="#666" stroke-width="0.35"/>
<text x="182.7" y="169" font-size="1.93" fill="#141414" font-family="&quot;Liberation Sans&quot;,sans-serif" textLength="5.5" lengthAdjust="spacingAndGlyphs">OSR(LF)</text>
<text x="188.8" y="169" font-size="2.25" fill="#3a62c8" font-family="&quot;Liberation Sans&quot;,sans-serif">?</text>
<rect x="180.7" y="170" width="9.7" height="3" fill="#fff" stroke="#d2d2d2" stroke-width="0.4"/>
<text x="182.6" y="172" font-size="2.25" fill="#111" font-family="&quot;Liberation Sans&quot;,sans-serif" textLength="2" lengthAdjust="spacingAndGlyphs">16</text>
<path d="M195.88 170.7 L197 171.4 L195.88 172.1 Z" fill="#222" stroke="#222" stroke-width="0.2"/>
<circle cx="199.6" cy="171.4" r="2.6" fill="#fff" stroke="#8c8c8c" stroke-width="0.5"/>
<line x1="197.8" y1="169.6" x2="201.4" y2="173.2" stroke="#8c8c8c" stroke-width="0.45"/>
<line x1="197.8" y1="173.2" x2="201.4" y2="169.6" stroke="#8c8c8c" stroke-width="0.45"/>
<text x="165.3" y="180" font-size="2.25" fill="#111" font-family="&quot;Liberation Sans&quot;,sans-serif" textLength="4.7" lengthAdjust="spacingAndGlyphs">NLCR</text>
<rect x="171.7" y="178.1" width="21.6" height="3.2" fill="#fff" stroke="#d2d2d2" stroke-width="0.4"/>
<text x="172.9" y="180" font-size="2.25" fill="#303030" font-family="&quot;Liberation Sans&quot;,sans-serif" textLength="0.9" lengthAdjust="spacingAndGlyphs">1</text>
<path d="M193.3 179.7 L199.6 179.7 L199.6 174" fill="none" stroke="#a0a0a0" stroke-width="0.45"/>
<path d="M199 174.96 L199.6 174 L200.2 174.96 Z" fill="#333" stroke="#333" stroke-width="0.2"/>
<text x="232.8" y="159" font-size="2.25" fill="#111" font-family="&quot;Liberation Sans&quot;,sans-serif" text-anchor="middle" textLength="27" lengthAdjust="spacingAndGlyphs">Offset and Gain Correction</text>
<path d="M221.88 170.7 L223 171.4 L221.88 172.1 Z" fill="#222" stroke="#222" stroke-width="0.2"/>
<circle cx="225.7" cy="171.4" r="2.6" fill="#fff" stroke="#8c8c8c" stroke-width="0.5"/>
<line x1="223.9" y1="171.4" x2="227.5" y2="171.4" stroke="#8c8c8c" stroke-width="0.45"/>
<line x1="225.7" y1="169.6" x2="225.7" y2="173.2" stroke="#8c8c8c" stroke-width="0.45"/>
<path d="M240.88 170.7 L242 171.4 L240.88 172.1 Z" fill="#222" stroke="#222" stroke-width="0.2"/>
<circle cx="244.7" cy="171.4" r="2.6" fill="#fff" stroke="#8c8c8c" stroke-width="0.5"/>
<line x1="242.9" y1="169.6" x2="246.5" y2="173.2" stroke="#8c8c8c" stroke-width="0.45"/>
<line x1="242.9" y1="173.2" x2="246.5" y2="169.6" stroke="#8c8c8c" stroke-width="0.45"/>
<text x="213.3" y="181" font-size="2.25" fill="#111" font-family="&quot;Liberation Sans&quot;,sans-serif" textLength="4.7" lengthAdjust="spacingAndGlyphs">OFCR</text>
<rect x="219.3" y="177.6" width="12" height="4.4" fill="#fff" stroke="#d2d2d2" stroke-width="0.4"/>
<text x="220.5" y="181" font-size="2.25" fill="#303030" font-family="&quot;Liberation Sans&quot;,sans-serif" textLength="1" lengthAdjust="spacingAndGlyphs">0</text>
<line x1="225.7" y1="177.6" x2="225.7" y2="174" stroke="#a0a0a0" stroke-width="0.45"/>
<path d="M225.1 174.96 L225.7 174 L226.3 174.96 Z" fill="#333" stroke="#333" stroke-width="0.2"/>
<text x="233.7" y="181" font-size="2.08" fill="#111" font-family="&quot;Liberation Sans&quot;,sans-serif" textLength="3.3" lengthAdjust="spacingAndGlyphs">GCR</text>
<rect x="238.3" y="177.6" width="13.1" height="4.4" fill="#fff" stroke="#d2d2d2" stroke-width="0.4"/>
<text x="239.5" y="181" font-size="2.25" fill="#303030" font-family="&quot;Liberation Sans&quot;,sans-serif" textLength="0.9" lengthAdjust="spacingAndGlyphs">1</text>
<line x1="244.7" y1="177.6" x2="244.7" y2="174" stroke="#a0a0a0" stroke-width="0.45"/>
<path d="M244.1 174.96 L244.7 174 L245.3 174.96 Z" fill="#333" stroke="#333" stroke-width="0.2"/>
<text x="257" y="169" font-size="2.25" fill="#111" font-family="&quot;Liberation Sans&quot;,sans-serif" textLength="18" lengthAdjust="spacingAndGlyphs">Normal Data Format</text>
<rect x="256" y="169.6" width="21.4" height="4" fill="#fff"/>
<rect x="257" y="170" width="19.7" height="3.3" fill="#dedede" stroke="#c4c4c4" stroke-width="0.4"/>
<text x="257.7" y="172" font-size="2.25" fill="#303030" font-family="&quot;Liberation Sans&quot;,sans-serif" textLength="12" lengthAdjust="spacingAndGlyphs">2sComplement</text>
<path d="M274.5 171.35 L275.1 171.95 L275.7 171.35" fill="none" stroke="#666" stroke-width="0.35"/>
<path d="M284.78 170.7 L285.9 171.4 L284.78 172.1 Z" fill="#222" stroke="#222" stroke-width="0.2"/>
<path d="M285.9 103.3 L285.9 103.3 L285.9 103.3 Z" fill="#222" stroke="#222" stroke-width="0.2"/>
<rect x="86.7" y="191.7" width="46.3" height="29.9" fill="#fff" stroke="#c8c8c8" stroke-width="0.55" rx="0.8"/>
<text x="109.8" y="195" font-size="2.25" fill="#111" font-family="&quot;Liberation Sans&quot;,sans-serif" text-anchor="middle" textLength="16.6" lengthAdjust="spacingAndGlyphs">Reference Voltage</text>
<line x1="18.7" y1="199.7" x2="89.6" y2="199.7" stroke="#b4b4b4" stroke-width="0.45"/>
<rect x="87.4" y="199" width="1.4" height="1.4" fill="#ddd" stroke="#999" stroke-width="0.25"/>
<text x="18.7" y="199" font-size="2.25" fill="#aaa" font-family="&quot;Liberation Sans&quot;,sans-serif" textLength="5.3" lengthAdjust="spacingAndGlyphs">AVCC0</text>
<line x1="18.7" y1="202.7" x2="89.6" y2="202.7" stroke="#6fbf73" stroke-width="0.6"/>
<circle cx="64.4" cy="202.7" r="0.5" fill="#2e7d32"/>
<rect x="87.4" y="202" width="1.4" height="1.4" fill="#ddd" stroke="#999" stroke-width="0.25"/>
<text x="18.7" y="202" font-size="2.25" fill="#1c1c1c" font-family="&quot;Liberation Sans&quot;,sans-serif" textLength="5.3" lengthAdjust="spacingAndGlyphs">REF0P</text>
<line x1="18.7" y1="205.7" x2="89.6" y2="205.7" stroke="#b4b4b4" stroke-width="0.45"/>
<rect x="87.4" y="205" width="1.4" height="1.4" fill="#ddd" stroke="#999" stroke-width="0.25"/>
<text x="18.7" y="205" font-size="2.25" fill="#aaa" font-family="&quot;Liberation Sans&quot;,sans-serif" textLength="5.3" lengthAdjust="spacingAndGlyphs">REF0N</text>
<line x1="18.7" y1="208.7" x2="89.6" y2="208.7" stroke="#b4b4b4" stroke-width="0.45"/>
<rect x="87.4" y="208" width="1.4" height="1.4" fill="#ddd" stroke="#999" stroke-width="0.25"/>
<text x="18.7" y="208" font-size="2.25" fill="#aaa" font-family="&quot;Liberation Sans&quot;,sans-serif" textLength="5.3" lengthAdjust="spacingAndGlyphs">REF1N</text>
<line x1="48" y1="211.7" x2="89.6" y2="211.7" stroke="#b4b4b4" stroke-width="0.45"/>
<rect x="87.4" y="211" width="1.4" height="1.4" fill="#ddd" stroke="#999" stroke-width="0.25"/>
<line x1="45" y1="214.7" x2="89.6" y2="214.7" stroke="#b4b4b4" stroke-width="0.45"/>
<rect x="87.4" y="214" width="1.4" height="1.4" fill="#ddd" stroke="#999" stroke-width="0.25"/>
<rect x="89.6" y="196" width="24.4" height="22.7" fill="#fff" stroke="#b0b0b0" stroke-width="0.55" rx="0.3"/>
<text x="101.8" y="199" font-size="2.25" fill="#141414" font-family="&quot;Liberation Sans&quot;,sans-serif" text-anchor="middle" textLength="5.4" lengthAdjust="spacingAndGlyphs">Select</text>
<rect x="91.6" y="206" width="19.7" height="2.8" fill="#dedede" stroke="#c4c4c4" stroke-width="0.4"/>
<text x="92.3" y="208" font-size="2.25" fill="#303030" font-family="&quot;Liberation Sans&quot;,sans-serif" textLength="13" lengthAdjust="spacingAndGlyphs">REFOUT-AVSS0</text>
<path d="M109.1 207.1 L109.7 207.7 L110.3 207.1" fill="none" stroke="#666" stroke-width="0.35"/>
<rect x="117.6" y="196.6" width="12.4" height="3" fill="#f4f4f4" stroke="#dcdcdc" stroke-width="0.4"/>
<text x="118.3" y="199" font-size="2.25" fill="#bbb" font-family="&quot;Liberation Sans&quot;,sans-serif" textLength="6.4" lengthAdjust="spacingAndGlyphs">Disable</text>
<path d="M127.8 197.8 L128.4 198.4 L129 197.8" fill="none" stroke="#c4c4c4" stroke-width="0.35"/>
<rect x="117.6" y="215.4" width="12.4" height="2.9" fill="#f4f4f4" stroke="#dcdcdc" stroke-width="0.4"/>
<text x="118.3" y="218" font-size="2.25" fill="#bbb" font-family="&quot;Liberation Sans&quot;,sans-serif" textLength="6.4" lengthAdjust="spacingAndGlyphs">Disable</text>
<path d="M127.8 216.55 L128.4 217.15 L129 216.55" fill="none" stroke="#c4c4c4" stroke-width="0.35"/>
<path d="M117.6 200.2 L123.6 203.5 L117.6 206.8 Z" fill="#fff" stroke="#8a8a8a" stroke-width="0.5"/>
<text x="117.9" y="204" font-size="2.03" fill="#1c1c1c" font-family="&quot;Liberation Sans&quot;,sans-serif" textLength="2.9" lengthAdjust="spacingAndGlyphs">BUF</text>
<line x1="114" y1="203.5" x2="117.6" y2="203.5" stroke="#a0a0a0" stroke-width="0.45"/>
<path d="M116.8 203 L117.6 203.5 L116.8 204 Z" fill="#333" stroke="#333" stroke-width="0.2"/>
<path d="M117.6 207.8 L123.6 211.1 L117.6 214.4 Z" fill="#fff" stroke="#8a8a8a" stroke-width="0.5"/>
<text x="117.9" y="212" font-size="2.03" fill="#1c1c1c" font-family="&quot;Liberation Sans&quot;,sans-serif" textLength="2.9" lengthAdjust="spacingAndGlyphs">BUF</text>
<line x1="114" y1="211.1" x2="117.6" y2="211.1" stroke="#a0a0a0" stroke-width="0.45"/>
<path d="M116.8 210.6 L117.6 211.1 L116.8 211.6 Z" fill="#333" stroke="#333" stroke-width="0.2"/>
<path d="M123.6 203.4 L145 203.4 L145 178.8" fill="none" stroke="#a0a0a0" stroke-width="0.45"/>
<path d="M144.4 179.76 L145 178.8 L145.6 179.76 Z" fill="#333" stroke="#333" stroke-width="0.2"/>
<path d="M123.6 211 L152.4 211 L152.4 178.8" fill="none" stroke="#a0a0a0" stroke-width="0.45"/>
<path d="M151.8 179.76 L152.4 178.8 L153 179.76 Z" fill="#333" stroke="#333" stroke-width="0.2"/>
<text x="133.4" y="203" font-size="2.1" fill="#111" font-family="&quot;Liberation Sans&quot;,sans-serif" textLength="5" lengthAdjust="spacingAndGlyphs">VREFP</text>
<text x="133.4" y="210" font-size="2.15" fill="#111" font-family="&quot;Liberation Sans&quot;,sans-serif" textLength="5.2" lengthAdjust="spacingAndGlyphs">VREFN</text>
<text x="146.7" y="208" font-size="2.25" fill="#111" font-family="&quot;Liberation Sans&quot;,sans-serif" textLength="3.5" lengthAdjust="spacingAndGlyphs">2.5V</text>
<line x1="18.7" y1="233.4" x2="101.7" y2="233.4" stroke="#f5b56b" stroke-width="0.6"/>
<line x1="101.7" y1="233.4" x2="128.3" y2="233.4" stroke="#5cb860" stroke-width="0.55"/>
<line x1="101.7" y1="218.7" x2="101.7" y2="233.4" stroke="#5cb860" stroke-width="0.7" stroke-dasharray="1 0.6"/>
<circle cx="101.7" cy="233.4" r="0.6" fill="#2e9d41"/>
<path d="M18.4 233.2 L19.3 231.9 L20.2 233.2 Z" fill="#e8a030" stroke="#d98a20" stroke-width="0.3"/>
<text x="18.7" y="236" font-size="2.25" fill="#111" font-family="&quot;Liberation Sans&quot;,sans-serif" textLength="7" lengthAdjust="spacingAndGlyphs">REFOUT</text>
<rect x="128.3" y="230.7" width="24.4" height="5.9" fill="#fff" stroke="#c8c8c8" stroke-width="0.55" rx="0.8"/>
<text x="130.4" y="234" font-size="2.25" fill="#141414" font-family="&quot;Liberation Sans&quot;,sans-serif" textLength="4.6" lengthAdjust="spacingAndGlyphs">VREF</text>
<rect x="138" y="232.1" width="12.4" height="3" fill="#dedede" stroke="#c4c4c4" stroke-width="0.4"/>
<text x="138.7" y="234" font-size="2.25" fill="#303030" font-family="&quot;Liberation Sans&quot;,sans-serif" textLength="6" lengthAdjust="spacingAndGlyphs">Enable</text>
<path d="M148.2 233.3 L148.8 233.9 L149.4 233.3" fill="none" stroke="#666" stroke-width="0.35"/>
<rect x="86.7" y="236.6" width="38.6" height="19.7" fill="#fff" stroke="#c8c8c8" stroke-width="0.55" rx="0.8"/>
<text x="88.7" y="240" font-size="2.25" fill="#141414" font-family="&quot;Liberation Sans&quot;,sans-serif" textLength="3.9" lengthAdjust="spacingAndGlyphs">IEXC</text>
<rect x="94.7" y="238.3" width="12" height="2.8" fill="#dedede" stroke="#c4c4c4" stroke-width="0.4"/>
<text x="95.4" y="240" font-size="2.25" fill="#303030" font-family="&quot;Liberation Sans&quot;,sans-serif" textLength="6.4" lengthAdjust="spacingAndGlyphs">Disable</text>
<path d="M104.5 239.4 L105.1 240 L105.7 239.4" fill="none" stroke="#666" stroke-width="0.35"/>
<text x="90" y="245" font-size="2.25" fill="#303030" font-family="&quot;Liberation Sans&quot;,sans-serif" textLength="16.3" lengthAdjust="spacingAndGlyphs">Excitation Current</text>
<rect x="110.3" y="243.2" width="12.4" height="2.8" fill="#f4f4f4" stroke="#dcdcdc" stroke-width="0.4"/>
<text x="111" y="245" font-size="2.25" fill="#bbb" font-family="&quot;Liberation Sans&quot;,sans-serif" textLength="5" lengthAdjust="spacingAndGlyphs">50µA</text>
<path d="M120.5 244.3 L121.1 244.9 L121.7 244.3" fill="none" stroke="#c4c4c4" stroke-width="0.35"/>
<text x="90" y="249" font-size="2.25" fill="#303030" font-family="&quot;Liberation Sans&quot;,sans-serif" textLength="16.3" lengthAdjust="spacingAndGlyphs">IEXC0 Output Pin</text>
<rect x="110.3" y="247.3" width="12.4" height="2.8" fill="#f4f4f4" stroke="#dcdcdc" stroke-width="0.4"/>
<text x="111" y="249" font-size="2.25" fill="#bbb" font-family="&quot;Liberation Sans&quot;,sans-serif">AIN0</text>
<path d="M120.5 248.4 L121.1 249 L121.7 248.4" fill="none" stroke="#c4c4c4" stroke-width="0.35"/>
<text x="90" y="253" font-size="2.25" fill="#303030" font-family="&quot;Liberation Sans&quot;,sans-serif" textLength="16.3" lengthAdjust="spacingAndGlyphs">IEXC1 Output Pin</text>
<rect x="110.3" y="251.3" width="12.4" height="2.8" fill="#f4f4f4" stroke="#dcdcdc" stroke-width="0.4"/>
<text x="111" y="253" font-size="2.25" fill="#bbb" font-family="&quot;Liberation Sans&quot;,sans-serif">AIN0</text>
<path d="M120.5 252.4 L121.1 253 L121.7 252.4" fill="none" stroke="#c4c4c4" stroke-width="0.35"/>
<path d="M42 248.3 L86.7 248.3" fill="none" stroke="#b0b0b0" stroke-width="0.45"/>
<path d="M39 252.3 L86.7 252.3" fill="none" stroke="#b0b0b0" stroke-width="0.45"/>
<path d="M36 259.3 L128.3 259.3" fill="none" stroke="#b0b0b0" stroke-width="0.45"/>
<path d="M33.2 262.6 L128.3 262.6" fill="none" stroke="#b0b0b0" stroke-width="0.45"/>
<rect x="128.3" y="250.7" width="38.1" height="17.9" fill="#fff" stroke="#c8c8c8" stroke-width="0.55" rx="0.8"/>
<text x="130.4" y="254" font-size="2.25" fill="#141414" font-family="&quot;Liberation Sans&quot;,sans-serif" textLength="5.2" lengthAdjust="spacingAndGlyphs">VBIAS</text>
<rect x="137.3" y="252.3" width="12.3" height="2.8" fill="#dedede" stroke="#c4c4c4" stroke-width="0.4"/>
<text x="138" y="254" font-size="2.25" fill="#303030" font-family="&quot;Liberation Sans&quot;,sans-serif" textLength="6.4" lengthAdjust="spacingAndGlyphs">Disable</text>
<path d="M147.4 253.4 L148 254 L148.6 253.4" fill="none" stroke="#666" stroke-width="0.35"/>
<text x="131.3" y="260" font-size="2.25" fill="#303030" font-family="&quot;Liberation Sans&quot;,sans-serif" textLength="16" lengthAdjust="spacingAndGlyphs">VBIAS Pin Output</text>
<rect x="151.3" y="257.6" width="12.2" height="2.8" fill="#f4f4f4" stroke="#dcdcdc" stroke-width="0.4"/>
<text x="152" y="260" font-size="2.25" fill="#bbb" font-family="&quot;Liberation Sans&quot;,sans-serif" textLength="6.4" lengthAdjust="spacingAndGlyphs">Disable</text>
<path d="M161.3 258.7 L161.9 259.3 L162.5 258.7" fill="none" stroke="#c4c4c4" stroke-width="0.35"/>
<text x="131.3" y="264" font-size="2.25" fill="#303030" font-family="&quot;Liberation Sans&quot;,sans-serif" textLength="16.7" lengthAdjust="spacingAndGlyphs">VBIAS Pin Output</text>
<rect x="151.3" y="261.4" width="12.2" height="2.8" fill="#f4f4f4" stroke="#dcdcdc" stroke-width="0.4"/>
<text x="152" y="264" font-size="2.25" fill="#bbb" font-family="&quot;Liberation Sans&quot;,sans-serif" textLength="6.4" lengthAdjust="spacingAndGlyphs">Disable</text>
<path d="M161.3 262.5 L161.9 263.1 L162.5 262.5" fill="none" stroke="#c4c4c4" stroke-width="0.35"/>
<text x="160.7" y="267" font-size="2.25" fill="#111" font-family="&quot;Liberation Sans&quot;,sans-serif" textLength="3.3" lengthAdjust="spacingAndGlyphs">On</text>
<rect x="211.5" y="231" width="29" height="32.7" fill="#fff" stroke="#c8c8c8" stroke-width="0.55" rx="0.8"/>
<text x="225.3" y="234" font-size="2.25" fill="#111" font-family="&quot;Liberation Sans&quot;,sans-serif" text-anchor="middle">Voltages</text>
<text x="214.7" y="238" font-size="2.25" fill="#303030" font-family="&quot;Liberation Sans&quot;,sans-serif" textLength="6.3" lengthAdjust="spacingAndGlyphs">AVCC0</text>
<rect x="222.7" y="235.9" width="10.6" height="3.2" fill="#fff" stroke="#d2d2d2" stroke-width="0.4"/>
<text x="223.9" y="238" font-size="2.25" fill="#3a62c8" font-family="&quot;Liberation Sans&quot;,sans-serif" textLength="0.9" lengthAdjust="spacingAndGlyphs">5</text>
<text x="236" y="238" font-size="2.25" fill="#111" font-family="&quot;Liberation Sans&quot;,sans-serif">V</text>
<text x="214.7" y="243" font-size="2.25" fill="#303030" font-family="&quot;Liberation Sans&quot;,sans-serif" textLength="6.3" lengthAdjust="spacingAndGlyphs">REF0P</text>
<rect x="222.7" y="240.43" width="10.6" height="3.2" fill="#fff" stroke="#d2d2d2" stroke-width="0.4"/>
<text x="223.9" y="243" font-size="2.25" fill="#3a62c8" font-family="&quot;Liberation Sans&quot;,sans-serif" textLength="3.3" lengthAdjust="spacingAndGlyphs">2.5</text>
<text x="236" y="243" font-size="2.25" fill="#111" font-family="&quot;Liberation Sans&quot;,sans-serif">V</text>
<text x="214.7" y="247" font-size="2.25" fill="#303030" font-family="&quot;Liberation Sans&quot;,sans-serif" textLength="6.3" lengthAdjust="spacingAndGlyphs">REF0N</text>
<rect x="222.7" y="244.96" width="10.6" height="3.2" fill="#fff" stroke="#d2d2d2" stroke-width="0.4"/>
<text x="223.9" y="247" font-size="2.25" fill="#3a62c8" font-family="&quot;Liberation Sans&quot;,sans-serif" textLength="3.3" lengthAdjust="spacingAndGlyphs">0.0</text>
<text x="236" y="247" font-size="2.25" fill="#111" font-family="&quot;Liberation Sans&quot;,sans-serif">V</text>
<text x="214.7" y="252" font-size="2.25" fill="#303030" font-family="&quot;Liberation Sans&quot;,sans-serif" textLength="6.3" lengthAdjust="spacingAndGlyphs">REF1P</text>
<rect x="222.7" y="249.49" width="10.6" height="3.2" fill="#fff" stroke="#d2d2d2" stroke-width="0.4"/>
<text x="223.9" y="252" font-size="2.25" fill="#3a62c8" font-family="&quot;Liberation Sans&quot;,sans-serif" textLength="0.9" lengthAdjust="spacingAndGlyphs">5</text>
<text x="236" y="252" font-size="2.25" fill="#111" font-family="&quot;Liberation Sans&quot;,sans-serif">V</text>
<text x="214.7" y="256" font-size="2.25" fill="#303030" font-family="&quot;Liberation Sans&quot;,sans-serif" textLength="6.3" lengthAdjust="spacingAndGlyphs">REF1N</text>
<rect x="222.7" y="254.02" width="10.6" height="3.2" fill="#fff" stroke="#d2d2d2" stroke-width="0.4"/>
<text x="223.9" y="256" font-size="2.25" fill="#3a62c8" font-family="&quot;Liberation Sans&quot;,sans-serif" textLength="0.9" lengthAdjust="spacingAndGlyphs">0</text>
<text x="236" y="256" font-size="2.25" fill="#111" font-family="&quot;Liberation Sans&quot;,sans-serif">V</text>
<text x="214.7" y="261" font-size="2.25" fill="#303030" font-family="&quot;Liberation Sans&quot;,sans-serif" textLength="6.3" lengthAdjust="spacingAndGlyphs">VBIAS</text>
<rect x="222.7" y="258.55" width="10.6" height="3.2" fill="#fff" stroke="#d2d2d2" stroke-width="0.4"/>
<text x="223.9" y="261" font-size="2.25" fill="#3a62c8" font-family="&quot;Liberation Sans&quot;,sans-serif" textLength="0.9" lengthAdjust="spacingAndGlyphs">2</text>
<text x="236" y="261" font-size="2.25" fill="#111" font-family="&quot;Liberation Sans&quot;,sans-serif">V</text>
<text x="28.3" y="102" font-size="2.25" fill="#303030" font-family="&quot;Liberation Sans&quot;,sans-serif" textLength="15.7" lengthAdjust="spacingAndGlyphs">Low Side Switch</text>
<text x="18.7" y="104" font-size="2.25" fill="#bbb" font-family="&quot;Liberation Sans&quot;,sans-serif" textLength="4" lengthAdjust="spacingAndGlyphs">LSW</text>
<line x1="22.9" y1="104.3" x2="30" y2="104.3" stroke="#b4b4b4" stroke-width="0.45"/>
<rect x="30" y="103" width="12.7" height="2.7" fill="#dedede" stroke="#c4c4c4" stroke-width="0.4"/>
<text x="30.7" y="105" font-size="2.25" fill="#303030" font-family="&quot;Liberation Sans&quot;,sans-serif" textLength="3.6" lengthAdjust="spacingAndGlyphs">OFF</text>
<path d="M40.5 104.05 L41.1 104.65 L41.7 104.05" fill="none" stroke="#666" stroke-width="0.35"/>
<path d="M42.7 104.3 L48.7 104.3 L48.7 108" fill="none" stroke="#a0a0a0" stroke-width="0.45"/>
<text x="39.6" y="110" font-size="2.25" fill="#303030" font-family="&quot;Liberation Sans&quot;,sans-serif" textLength="5.7" lengthAdjust="spacingAndGlyphs">AVSS0</text>
<path d="M47.4 108.2 L50 108.2 L48.7 110.3 Z" fill="#fff" stroke="#999" stroke-width="0.4"/>
<rect x="50.7" y="272.3" width="132.3" height="33" fill="none" stroke="#d0d0d0" stroke-width="0.55" rx="0.8"/>
<text x="159.7" y="276" font-size="2.25" fill="#303030" font-family="&quot;Liberation Sans&quot;,sans-serif" textLength="4.7" lengthAdjust="spacingAndGlyphs">DAC:</text>
<rect x="167.7" y="273.7" width="13" height="2.9" fill="#dedede" stroke="#c4c4c4" stroke-width="0.4"/>
<text x="168.4" y="276" font-size="2.25" fill="#303030" font-family="&quot;Liberation Sans&quot;,sans-serif" textLength="6.4" lengthAdjust="spacingAndGlyphs">Disable</text>
<path d="M178.5 274.85 L179.1 275.45 L179.7 274.85" fill="none" stroke="#666" stroke-width="0.35"/>
<text x="18.7" y="279" font-size="2.25" fill="#aaa" font-family="&quot;Liberation Sans&quot;,sans-serif" textLength="5.3" lengthAdjust="spacingAndGlyphs">REF1P</text>
<text x="18.7" y="282" font-size="2.25" fill="#aaa" font-family="&quot;Liberation Sans&quot;,sans-serif" textLength="5.3" lengthAdjust="spacingAndGlyphs">REF1N</text>
<path d="M18.7 279.5 L138.4 279.5 L138.4 285.7" fill="none" stroke="#b0b0b0" stroke-width="0.45"/>
<path d="M137.9 285.1 L138.4 285.9 L138.9 285.1 Z" fill="#555" stroke="#555" stroke-width="0.2"/>
<path d="M18.7 282.4 L132.3 282.4 L132.3 285.7" fill="none" stroke="#b0b0b0" stroke-width="0.45"/>
<path d="M131.8 285.1 L132.3 285.9 L132.8 285.1 Z" fill="#555" stroke="#555" stroke-width="0.2"/>
<text x="18.7" y="292" font-size="2.25" fill="#aaa" font-family="&quot;Liberation Sans&quot;,sans-serif" textLength="3.3" lengthAdjust="spacingAndGlyphs">DA0</text>
<line x1="18.7" y1="293.4" x2="120.4" y2="293.4" stroke="#b0b0b0" stroke-width="0.45"/>
<circle cx="19" cy="293.4" r="0.45" fill="#555"/>
<text x="73" y="291" font-size="2.25" fill="#303030" font-family="&quot;Liberation Sans&quot;,sans-serif" textLength="17" lengthAdjust="spacingAndGlyphs">Output Impedance</text>
<rect x="74" y="292.4" width="16.4" height="3.1" fill="#fff"/>
<rect x="74.7" y="292.6" width="15" height="2.7" fill="#f4f4f4" stroke="#dcdcdc" stroke-width="0.4"/>
<text x="75.4" y="295" font-size="2.25" fill="#bbb" font-family="&quot;Liberation Sans&quot;,sans-serif" textLength="10" lengthAdjust="spacingAndGlyphs">Low(Enable)</text>
<path d="M87.5 293.65 L88.1 294.25 L88.7 293.65" fill="none" stroke="#c4c4c4" stroke-width="0.35"/>
<text x="94" y="291" font-size="2.25" fill="#303030" font-family="&quot;Liberation Sans&quot;,sans-serif" textLength="22.7" lengthAdjust="spacingAndGlyphs">Buffer Output Full Scale</text>
<rect x="97.6" y="292.4" width="16" height="3.1" fill="#fff"/>
<rect x="98.3" y="292.6" width="14.7" height="2.7" fill="#f4f4f4" stroke="#dcdcdc" stroke-width="0.4"/>
<text x="99" y="295" font-size="2.25" fill="#bbb" font-family="&quot;Liberation Sans&quot;,sans-serif" textLength="6.4" lengthAdjust="spacingAndGlyphs">Disable</text>
<path d="M110.8 293.65 L111.4 294.25 L112 293.65" fill="none" stroke="#c4c4c4" stroke-width="0.35"/>
<path d="M120.4 293.4 L128.3 285.7 L142.7 285.7 L142.7 300.7 L128.3 300.7 Z" fill="#fff" stroke="#a8a8a8" stroke-width="0.55"/>
<text x="133.6" y="293" font-size="2.25" fill="#303030" font-family="&quot;Liberation Sans&quot;,sans-serif" text-anchor="middle" textLength="4" lengthAdjust="spacingAndGlyphs">DAC</text>
<rect x="127.3" y="293.7" width="12.4" height="2.9" fill="#f4f4f4" stroke="#dcdcdc" stroke-width="0.4"/>
<text x="128" y="296" font-size="2.25" fill="#bbb" font-family="&quot;Liberation Sans&quot;,sans-serif" textLength="6.4" lengthAdjust="spacingAndGlyphs">Disable</text>
<path d="M137.5 294.85 L138.1 295.45 L138.7 294.85" fill="none" stroke="#c4c4c4" stroke-width="0.35"/>
<line x1="142.7" y1="293.4" x2="150" y2="293.4" stroke="#a0a0a0" stroke-width="0.45"/>
<path d="M144.12 292.7 L143 293.4 L144.12 294.1 Z" fill="#222" stroke="#222" stroke-width="0.2"/>
<rect x="150" y="283.7" width="29.7" height="18.6" fill="#fff" stroke="#a8a8a8" stroke-width="0.55" rx="0.3"/>
<text x="164.8" y="287" font-size="2.25" fill="#111" font-family="&quot;Liberation Sans&quot;,sans-serif" text-anchor="middle" textLength="16" lengthAdjust="spacingAndGlyphs">Conversion Value</text>
<text x="152" y="291" font-size="2.25" fill="#111" font-family="&quot;Liberation Sans&quot;,sans-serif" textLength="5.6" lengthAdjust="spacingAndGlyphs">Select:</text>
<rect x="164" y="288.9" width="13.3" height="2.8" fill="#f4f4f4" stroke="#dcdcdc" stroke-width="0.4"/>
<text x="164.7" y="291" font-size="2.25" fill="#bbb" font-family="&quot;Liberation Sans&quot;,sans-serif" textLength="6.6" lengthAdjust="spacingAndGlyphs">Voltage</text>
<path d="M175.1 290 L175.7 290.6 L176.3 290" fill="none" stroke="#c4c4c4" stroke-width="0.35"/>
<text x="152" y="296" font-size="2.25" fill="#111" font-family="&quot;Liberation Sans&quot;,sans-serif" textLength="6.6" lengthAdjust="spacingAndGlyphs">Voltage:</text>
<rect x="164" y="293.5" width="13.3" height="3" fill="#fff" stroke="#d2d2d2" stroke-width="0.4"/>
<text x="165.2" y="296" font-size="2.25" fill="#aaa" font-family="&quot;Liberation Sans&quot;,sans-serif" textLength="0.9" lengthAdjust="spacingAndGlyphs">0</text>
<text x="152" y="300" font-size="2.25" fill="#111" font-family="&quot;Liberation Sans&quot;,sans-serif" textLength="9.6" lengthAdjust="spacingAndGlyphs">Value(Dec):</text>
<rect x="164" y="297.8" width="13.3" height="3" fill="#fff" stroke="#d2d2d2" stroke-width="0.4"/>
<text x="165.2" y="300" font-size="2.25" fill="#aaa" font-family="&quot;Liberation Sans&quot;,sans-serif" textLength="0.9" lengthAdjust="spacingAndGlyphs">0</text>
<rect x="334.9" y="58" width="94.7" height="210.5" fill="#fff" stroke="#d9d9d9" stroke-width="0.5"/>
<text x="342.7" y="0" font-size="1" fill="#141414" font-family="&quot;Liberation Sans&quot;,sans-serif"></text>
<path d="M341.8 63.4 L343.2 64.2 L341.8 65 Z" fill="#222" stroke="#222" stroke-width="0.2"/>
<text x="0" y="0" font-size="5" fill="#444" font-family="&quot;Liberation Sans&quot;,sans-serif" textLength="25.4" lengthAdjust="spacingAndGlyphs" transform="translate(340.9 69) rotate(90)">AFE Register</text>
<rect x="349.3" y="60.3" width="77.4" height="208.2" fill="#fff" stroke="#cfcfcf" stroke-width="0.5"/>
<rect x="420.7" y="60.6" width="5.2" height="207.9" fill="#f0f0f0"/>
<rect x="420.7" y="67.2" width="5" height="80.5" fill="#c1c1c1"/>
<path d="M422.2 64.6 L423.3 63.4 L424.4 64.6" fill="none" stroke="#555" stroke-width="0.5"/>
<rect x="352" y="65.3" width="66" height="50.7" fill="none" stroke="#dedede" stroke-width="0.5" rx="0.6"/>
<rect x="354.2" y="64.3" width="8.8" height="2" fill="#fff"/>
<text x="355" y="67" font-size="5.18" fill="#303030" font-family="&quot;Liberation Sans&quot;,sans-serif" textLength="7.2" lengthAdjust="spacingAndGlyphs">AFE</text>
<text x="355" y="75" font-size="5.04" fill="#404040" font-family="&quot;Liberation Sans&quot;,sans-serif" textLength="10.4" lengthAdjust="spacingAndGlyphs">OPCR</text>
<rect x="386" y="69.8" width="29.6" height="7" fill="#ebebeb" stroke="#b9b9b9" stroke-width="0.55"/>
<text x="387.4" y="75" font-size="4.86" fill="#404040" font-family="&quot;Liberation Sans&quot;,sans-serif" textLength="8.2" lengthAdjust="spacingAndGlyphs">0012</text>
<text x="355" y="85" font-size="5.04" fill="#404040" font-family="&quot;Liberation Sans&quot;,sans-serif" textLength="12.6" lengthAdjust="spacingAndGlyphs">VBOSR</text>
<rect x="386" y="79.1" width="29.6" height="7" fill="#ebebeb" stroke="#b9b9b9" stroke-width="0.55"/>
<text x="387.4" y="84" font-size="4.86" fill="#404040" font-family="&quot;Liberation Sans&quot;,sans-serif" textLength="8.4" lengthAdjust="spacingAndGlyphs">0000</text>
<text x="355" y="94" font-size="5.04" fill="#404040" font-family="&quot;Liberation Sans&quot;,sans-serif" textLength="10.4" lengthAdjust="spacingAndGlyphs">LSWC</text>
<rect x="386" y="88.4" width="29.6" height="7" fill="#ebebeb" stroke="#b9b9b9" stroke-width="0.55"/>
<text x="387.4" y="94" font-size="4.86" fill="#404040" font-family="&quot;Liberation Sans&quot;,sans-serif" textLength="4.2" lengthAdjust="spacingAndGlyphs">00</text>
<text x="355" y="103" font-size="4.64" fill="#404040" font-family="&quot;Liberation Sans&quot;,sans-serif" textLength="11.6" lengthAdjust="spacingAndGlyphs">EXCCR</text>
<rect x="386" y="97.4" width="29.6" height="7" fill="#ebebeb" stroke="#b9b9b9" stroke-width="0.55"/>
<text x="387.4" y="103" font-size="4.86" fill="#404040" font-family="&quot;Liberation Sans&quot;,sans-serif" textLength="4.2" lengthAdjust="spacingAndGlyphs">00</text>
<text x="355" y="112" font-size="4.84" fill="#404040" font-family="&quot;Liberation Sans&quot;,sans-serif" textLength="14.6" lengthAdjust="spacingAndGlyphs">EXCOSR</text>
<rect x="386" y="106.4" width="29.6" height="7" fill="#ebebeb" stroke="#b9b9b9" stroke-width="0.55"/>
<text x="387.4" y="112" font-size="4.86" fill="#404040" font-family="&quot;Liberation Sans&quot;,sans-serif" textLength="8.4" lengthAdjust="spacingAndGlyphs">00FF</text>
<rect x="352" y="121" width="66" height="23.3" fill="none" stroke="#dedede" stroke-width="0.5" rx="0.6"/>
<rect x="354.2" y="120" width="12" height="2" fill="#fff"/>
<text x="355" y="123" font-size="5.24" fill="#303030" font-family="&quot;Liberation Sans&quot;,sans-serif" textLength="10.4" lengthAdjust="spacingAndGlyphs">DSAD</text>
<text x="355" y="131" font-size="4.52" fill="#404040" font-family="&quot;Liberation Sans&quot;,sans-serif" textLength="7" lengthAdjust="spacingAndGlyphs">CCR</text>
<rect x="386" y="125.8" width="29.6" height="7" fill="#ebebeb" stroke="#b9b9b9" stroke-width="0.55"/>
<text x="387.4" y="131" font-size="4.86" fill="#404040" font-family="&quot;Liberation Sans&quot;,sans-serif" textLength="17.2" lengthAdjust="spacingAndGlyphs">00000001</text>
<text x="355" y="140" font-size="5.04" fill="#404040" font-family="&quot;Liberation Sans&quot;,sans-serif" textLength="5.6" lengthAdjust="spacingAndGlyphs">MR</text>
<rect x="386" y="135" width="29.6" height="7" fill="#ebebeb" stroke="#b9b9b9" stroke-width="0.55"/>
<text x="387.4" y="140" font-size="4.86" fill="#404040" font-family="&quot;Liberation Sans&quot;,sans-serif" textLength="17.6" lengthAdjust="spacingAndGlyphs">0000FE00</text>
<rect x="352" y="149.7" width="66" height="69.3" fill="none" stroke="#dedede" stroke-width="0.5" rx="0.6"/>
<rect x="354.2" y="148.7" width="32" height="2" fill="#fff"/>
<text x="355" y="152" font-size="5.4" fill="#303030" font-family="&quot;Liberation Sans&quot;,sans-serif" textLength="30.4" lengthAdjust="spacingAndGlyphs">DSAD Channel 0</text>
<text x="355" y="160" font-size="4.9" fill="#404040" font-family="&quot;Liberation Sans&quot;,sans-serif" textLength="14.6" lengthAdjust="spacingAndGlyphs">DS00ISR</text>
<rect x="386" y="154.4" width="29.6" height="7" fill="#ebebeb" stroke="#b9b9b9" stroke-width="0.55"/>
<text x="387.4" y="160" font-size="4.86" fill="#404040" font-family="&quot;Liberation Sans&quot;,sans-serif" textLength="17.4" lengthAdjust="spacingAndGlyphs">00050001</text>
<text x="355" y="169" font-size="5.04" fill="#404040" font-family="&quot;Liberation Sans&quot;,sans-serif" textLength="7.6" lengthAdjust="spacingAndGlyphs">MR0</text>
<rect x="386" y="163.4" width="29.6" height="7" fill="#ebebeb" stroke="#b9b9b9" stroke-width="0.55"/>
<text x="387.4" y="169" font-size="4.86" fill="#404040" font-family="&quot;Liberation Sans&quot;,sans-serif" textLength="17.4" lengthAdjust="spacingAndGlyphs">00000000</text>
<text x="355" y="178" font-size="4.76" fill="#404040" font-family="&quot;Liberation Sans&quot;,sans-serif" textLength="6.8" lengthAdjust="spacingAndGlyphs">CR0</text>
<rect x="386" y="172.7" width="29.6" height="7" fill="#ebebeb" stroke="#b9b9b9" stroke-width="0.55"/>
<text x="387.4" y="178" font-size="4.86" fill="#404040" font-family="&quot;Liberation Sans&quot;,sans-serif" textLength="17.4" lengthAdjust="spacingAndGlyphs">00100001</text>
<text x="355" y="187" font-size="4.83" fill="#404040" font-family="&quot;Liberation Sans&quot;,sans-serif" textLength="9.4" lengthAdjust="spacingAndGlyphs">OSR0</text>
<rect x="386" y="181.9" width="29.6" height="7" fill="#ebebeb" stroke="#b9b9b9" stroke-width="0.55"/>
<text x="387.4" y="187" font-size="4.86" fill="#404040" font-family="&quot;Liberation Sans&quot;,sans-serif" textLength="17.4" lengthAdjust="spacingAndGlyphs">000F000F</text>
<text x="355" y="197" font-size="5.04" fill="#404040" font-family="&quot;Liberation Sans&quot;,sans-serif" textLength="12.4" lengthAdjust="spacingAndGlyphs">SGCR0</text>
<rect x="386" y="191.1" width="29.6" height="7" fill="#ebebeb" stroke="#b9b9b9" stroke-width="0.55"/>
<text x="387.4" y="196" font-size="4.86" fill="#404040" font-family="&quot;Liberation Sans&quot;,sans-serif" textLength="17.4" lengthAdjust="spacingAndGlyphs">00400000</text>
<rect x="371.3" y="192.1" width="4.6" height="4.6" fill="#fff" stroke="#5a5a5a" stroke-width="0.5"/>
<path d="M372.2 194.4 L373.23 195.69 L375.2 193.02" fill="none" stroke="#3a3a3a" stroke-width="0.55"/>
<text x="355" y="206" font-size="5.04" fill="#404040" font-family="&quot;Liberation Sans&quot;,sans-serif" textLength="10" lengthAdjust="spacingAndGlyphs">GCR0</text>
<rect x="386" y="200.4" width="29.6" height="7" fill="#ebebeb" stroke="#b9b9b9" stroke-width="0.55"/>
<text x="387.4" y="206" font-size="4.86" fill="#404040" font-family="&quot;Liberation Sans&quot;,sans-serif" textLength="17.4" lengthAdjust="spacingAndGlyphs">00400000</text>
<rect x="371.3" y="201.4" width="4.6" height="4.6" fill="#fff" stroke="#5a5a5a" stroke-width="0.5"/>
<text x="355" y="215" font-size="5.12" fill="#404040" font-family="&quot;Liberation Sans&quot;,sans-serif" textLength="12.4" lengthAdjust="spacingAndGlyphs">OFCR0</text>
<rect x="386" y="209.7" width="29.6" height="7" fill="#ebebeb" stroke="#b9b9b9" stroke-width="0.55"/>
<text x="387.4" y="215" font-size="4.86" fill="#404040" font-family="&quot;Liberation Sans&quot;,sans-serif" textLength="17.4" lengthAdjust="spacingAndGlyphs">00000000</text>
<rect x="371.3" y="210.7" width="4.6" height="4.6" fill="#fff" stroke="#5a5a5a" stroke-width="0.5"/>
<rect x="352" y="224.3" width="66" height="65.7" fill="none" stroke="#dedede" stroke-width="0.5" rx="0.6"/>
<rect x="354.2" y="223.3" width="32" height="2" fill="#fff"/>
<text x="355" y="226" font-size="5.4" fill="#303030" font-family="&quot;Liberation Sans&quot;,sans-serif" textLength="30.4" lengthAdjust="spacingAndGlyphs">DSAD Channel 1</text>
<text x="355" y="234" font-size="4.9" fill="#404040" font-family="&quot;Liberation Sans&quot;,sans-serif" textLength="14.6" lengthAdjust="spacingAndGlyphs">DS01ISR</text>
<rect x="386" y="228.9" width="29.6" height="7" fill="#ebebeb" stroke="#b9b9b9" stroke-width="0.55"/>
<text x="387.4" y="234" font-size="4.86" fill="#404040" font-family="&quot;Liberation Sans&quot;,sans-serif" textLength="17.4" lengthAdjust="spacingAndGlyphs">00031F1F</text>
<text x="355" y="244" font-size="5.04" fill="#404040" font-family="&quot;Liberation Sans&quot;,sans-serif" textLength="7.6" lengthAdjust="spacingAndGlyphs">MR1</text>
<rect x="386" y="238.1" width="29.6" height="7" fill="#ebebeb" stroke="#b9b9b9" stroke-width="0.55"/>
<text x="387.4" y="243" font-size="4.86" fill="#404040" font-family="&quot;Liberation Sans&quot;,sans-serif" textLength="17.4" lengthAdjust="spacingAndGlyphs">00000000</text>
<text x="355" y="253" font-size="4.76" fill="#404040" font-family="&quot;Liberation Sans&quot;,sans-serif" textLength="6.8" lengthAdjust="spacingAndGlyphs">CR1</text>
<rect x="386" y="247.4" width="29.6" height="7" fill="#ebebeb" stroke="#b9b9b9" stroke-width="0.55"/>
<text x="387.4" y="253" font-size="4.86" fill="#404040" font-family="&quot;Liberation Sans&quot;,sans-serif" textLength="17.4" lengthAdjust="spacingAndGlyphs">00000001</text>
<text x="355" y="262" font-size="4.83" fill="#404040" font-family="&quot;Liberation Sans&quot;,sans-serif" textLength="9.4" lengthAdjust="spacingAndGlyphs">OSR1</text>
<rect x="386" y="256.4" width="29.6" height="7" fill="#ebebeb" stroke="#b9b9b9" stroke-width="0.55"/>
<text x="387.4" y="262" font-size="4.86" fill="#404040" font-family="&quot;Liberation Sans&quot;,sans-serif" textLength="17.4" lengthAdjust="spacingAndGlyphs">0000000F</text>
<text x="355" y="271" font-size="5.04" fill="#404040" font-family="&quot;Liberation Sans&quot;,sans-serif" textLength="12.4" lengthAdjust="spacingAndGlyphs">SGCR1</text>
<rect x="386" y="265.6" width="29.6" height="7" fill="#ebebeb" stroke="#b9b9b9" stroke-width="0.55"/>
<text x="387.4" y="271" font-size="4.86" fill="#404040" font-family="&quot;Liberation Sans&quot;,sans-serif" textLength="17.4" lengthAdjust="spacingAndGlyphs">00400000</text>
<rect x="371.3" y="266.6" width="4.6" height="4.6" fill="#fff" stroke="#5a5a5a" stroke-width="0.5"/>
<rect x="435.5" y="20.2" width="253.7" height="254.8" fill="#fff" stroke="#d4d4d4" stroke-width="0.6"/>
<rect x="435.8" y="20.3" width="253.2" height="8.1" fill="#f0f0f0"/>
<line x1="435.8" y1="20.2" x2="689" y2="20.2" stroke="#d9d9d9" stroke-width="0.6"/>
<rect x="435.8" y="20.4" width="51.5" height="8.4" fill="#fff"/>
<line x1="435.8" y1="20.5" x2="487.3" y2="20.5" stroke="#8a8a8a" stroke-width="0.8"/>
<line x1="487.3" y1="20.4" x2="487.3" y2="28.5" stroke="#c8c8c8" stroke-width="0.5"/>
<line x1="487.3" y1="28.5" x2="689" y2="28.5" stroke="#e0e0e0" stroke-width="0.5"/>
<rect x="437.4" y="22.7" width="4" height="4" fill="#fff" stroke="#5a7fb5" stroke-width="0.5"/>
<line x1="437.4" y1="23.3" x2="441.4" y2="23.3" stroke="#5a7fb5" stroke-width="0.9"/>
<text x="443.3" y="27" font-size="5.18" fill="#303030" font-family="&quot;Liberation Sans&quot;,sans-serif" textLength="34.7" lengthAdjust="spacingAndGlyphs">AFE Raw Data (QE)</text>
<line x1="482" y1="23.4" x2="484.6" y2="26" stroke="#777" stroke-width="0.5"/>
<line x1="482" y1="26" x2="484.6" y2="23.4" stroke="#777" stroke-width="0.5"/>
<rect x="674.1" y="22.2" width="3.8" height="1.2" fill="#fafafa" stroke="#8a8a8a" stroke-width="0.45"/>
<rect x="682.6" y="22.2" width="3.8" height="3.6" fill="#fafafa" stroke="#5a5a5a" stroke-width="0.5"/>
<line x1="682.6" y1="22.6" x2="686.4" y2="22.6" stroke="#5a5a5a" stroke-width="0.8"/>
<rect x="439.3" y="35.3" width="246.7" height="12.1" fill="none" stroke="#dedede" stroke-width="0.5" rx="0.6"/>
<rect x="441.6" y="34.3" width="30.8" height="2" fill="#fff"/>
<text x="442.4" y="37" font-size="5.29" fill="#303030" font-family="&quot;Liberation Sans&quot;,sans-serif" textLength="29.2" lengthAdjust="spacingAndGlyphs">Channel setting</text>
<rect x="442.3" y="39.8" width="4.4" height="4.4" fill="#fff" stroke="#5a5a5a" stroke-width="0.5"/>
<path d="M443.2 42 L444.15 43.23 L446 40.68" fill="none" stroke="#3a3a3a" stroke-width="0.55"/>
<text x="448" y="44" font-size="4.97" fill="#303030" font-family="&quot;Liberation Sans&quot;,sans-serif" textLength="7.8" lengthAdjust="spacingAndGlyphs">CH0</text>
<rect x="459.36" y="39.8" width="4.4" height="4.4" fill="#fff" stroke="#5a5a5a" stroke-width="0.5"/>
<path d="M460.26 42 L461.21 43.23 L463.06 40.68" fill="none" stroke="#3a3a3a" stroke-width="0.55"/>
<text x="465.06" y="44" font-size="4.97" fill="#303030" font-family="&quot;Liberation Sans&quot;,sans-serif" textLength="7.8" lengthAdjust="spacingAndGlyphs">CH1</text>
<rect x="476.42" y="39.8" width="4.4" height="4.4" fill="#fff" stroke="#5a5a5a" stroke-width="0.5"/>
<path d="M477.32 42 L478.27 43.23 L480.12 40.68" fill="none" stroke="#3a3a3a" stroke-width="0.55"/>
<text x="482.12" y="44" font-size="4.97" fill="#303030" font-family="&quot;Liberation Sans&quot;,sans-serif" textLength="7.8" lengthAdjust="spacingAndGlyphs">CH2</text>
<rect x="493.48" y="39.8" width="4.4" height="4.4" fill="#fff" stroke="#5a5a5a" stroke-width="0.5"/>
<path d="M494.38 42 L495.33 43.23 L497.18 40.68" fill="none" stroke="#3a3a3a" stroke-width="0.55"/>
<text x="499.18" y="44" font-size="4.97" fill="#303030" font-family="&quot;Liberation Sans&quot;,sans-serif" textLength="7.8" lengthAdjust="spacingAndGlyphs">CH3</text>
<rect x="510.54" y="39.8" width="4.4" height="4.4" fill="#fff" stroke="#5a5a5a" stroke-width="0.5"/>
<path d="M511.44 42 L512.39 43.23 L514.24 40.68" fill="none" stroke="#3a3a3a" stroke-width="0.55"/>
<text x="516.24" y="44" font-size="4.97" fill="#303030" font-family="&quot;Liberation Sans&quot;,sans-serif" textLength="7.8" lengthAdjust="spacingAndGlyphs">CH4</text>
<rect x="527.6" y="39.8" width="4.4" height="4.4" fill="#fff" stroke="#5a5a5a" stroke-width="0.5"/>
<path d="M528.5 42 L529.45 43.23 L531.3 40.68" fill="none" stroke="#3a3a3a" stroke-width="0.55"/>
<text x="533.3" y="44" font-size="4.97" fill="#303030" font-family="&quot;Liberation Sans&quot;,sans-serif" textLength="7.8" lengthAdjust="spacingAndGlyphs">CH5</text>
<rect x="544.66" y="39.8" width="4.4" height="4.4" fill="#fff" stroke="#5a5a5a" stroke-width="0.5"/>
<path d="M545.56 42 L546.51 43.23 L548.36 40.68" fill="none" stroke="#3a3a3a" stroke-width="0.55"/>
<text x="550.36" y="44" font-size="4.97" fill="#303030" font-family="&quot;Liberation Sans&quot;,sans-serif" textLength="7.8" lengthAdjust="spacingAndGlyphs">CH6</text>
<rect x="561.72" y="39.8" width="4.4" height="4.4" fill="#fff" stroke="#5a5a5a" stroke-width="0.5"/>
<path d="M562.62 42 L563.57 43.23 L565.42 40.68" fill="none" stroke="#3a3a3a" stroke-width="0.55"/>
<text x="567.42" y="44" font-size="4.97" fill="#303030" font-family="&quot;Liberation Sans&quot;,sans-serif" textLength="7.8" lengthAdjust="spacingAndGlyphs">CH7</text>
<rect x="439.3" y="52.7" width="246.7" height="23" fill="none" stroke="#dedede" stroke-width="0.5" rx="0.6"/>
<rect x="441.6" y="51.7" width="38.6" height="2" fill="#fff"/>
<text x="442.4" y="55" font-size="5.29" fill="#303030" font-family="&quot;Liberation Sans&quot;,sans-serif" textLength="37" lengthAdjust="spacingAndGlyphs">Copy/Export setting</text>
<rect x="442.3" y="58.8" width="4.4" height="4.4" fill="#fff" stroke="#5a5a5a" stroke-width="0.5"/>
<path d="M443.2 61 L444.15 62.23 L446 59.68" fill="none" stroke="#3a3a3a" stroke-width="0.55"/>
<text x="448" y="63" font-size="4.97" fill="#303030" font-family="&quot;Liberation Sans&quot;,sans-serif" textLength="6.2" lengthAdjust="spacingAndGlyphs">No.</text>
<rect x="458" y="58.8" width="4.4" height="4.4" fill="#fff" stroke="#5a5a5a" stroke-width="0.5"/>
<path d="M458.9 61 L459.85 62.23 L461.7 59.68" fill="none" stroke="#3a3a3a" stroke-width="0.55"/>
<text x="463.7" y="63" font-size="4.97" fill="#303030" font-family="&quot;Liberation Sans&quot;,sans-serif" textLength="17.4" lengthAdjust="spacingAndGlyphs">Time[ms]</text>
<rect x="484.3" y="58.8" width="4.4" height="4.4" fill="#fff" stroke="#5a5a5a" stroke-width="0.5"/>
<path d="M485.2 61 L486.15 62.23 L488 59.68" fill="none" stroke="#3a3a3a" stroke-width="0.55"/>
<text x="490" y="63" font-size="4.97" fill="#303030" font-family="&quot;Liberation Sans&quot;,sans-serif" textLength="7.8" lengthAdjust="spacingAndGlyphs">OVF</text>
<rect x="501.3" y="58.8" width="4.4" height="4.4" fill="#fff" stroke="#5a5a5a" stroke-width="0.5"/>
<path d="M502.2 61 L503.15 62.23 L505 59.68" fill="none" stroke="#3a3a3a" stroke-width="0.55"/>
<text x="507" y="63" font-size="4.91" fill="#303030" font-family="&quot;Liberation Sans&quot;,sans-serif" textLength="7.4" lengthAdjust="spacingAndGlyphs">ERR</text>
<text x="442.3" y="72" font-size="5.08" fill="#303030" font-family="&quot;Liberation Sans&quot;,sans-serif" textLength="101" lengthAdjust="spacingAndGlyphs">Not select &quot;Data&quot; column, and &quot;Data&quot; is always copied.</text>
<rect x="439.3" y="79.4" width="72.13" height="7.6" fill="#fff" stroke="#b9b9b9" stroke-width="0.5"/>
<text x="440.7" y="85" font-size="4.86" fill="#404040" font-family="&quot;Liberation Sans&quot;,sans-serif" textLength="7.6" lengthAdjust="spacingAndGlyphs">CH0</text>
<rect x="504.53" y="79.7" width="6.6" height="7" fill="#e1e1e1" stroke="#c0c0c0" stroke-width="0.4"/>
<path d="M506.73 82.75 L507.83 83.85 L508.93 82.75" fill="none" stroke="#555" stroke-width="0.5"/>
<rect x="511.43" y="79.4" width="72.13" height="7.6" fill="#fff" stroke="#b9b9b9" stroke-width="0.5"/>
<text x="512.83" y="85" font-size="4.86" fill="#404040" font-family="&quot;Liberation Sans&quot;,sans-serif" textLength="7.6" lengthAdjust="spacingAndGlyphs">CH1</text>
<rect x="576.66" y="79.7" width="6.6" height="7" fill="#e1e1e1" stroke="#c0c0c0" stroke-width="0.4"/>
<path d="M578.86 82.75 L579.96 83.85 L581.06 82.75" fill="none" stroke="#555" stroke-width="0.5"/>
<rect x="583.56" y="79.4" width="72.13" height="7.6" fill="#fff" stroke="#b9b9b9" stroke-width="0.5"/>
<text x="584.96" y="85" font-size="4.86" fill="#404040" font-family="&quot;Liberation Sans&quot;,sans-serif" textLength="7.6" lengthAdjust="spacingAndGlyphs">CH2</text>
<rect x="648.79" y="79.7" width="6.6" height="7" fill="#e1e1e1" stroke="#c0c0c0" stroke-width="0.4"/>
<path d="M650.99 82.75 L652.09 83.85 L653.19 82.75" fill="none" stroke="#555" stroke-width="0.5"/>
<rect x="655.69" y="79.4" width="30.31" height="7.6" fill="#fff" stroke="#b9b9b9" stroke-width="0.5"/>
<text x="657.09" y="85" font-size="4.86" fill="#404040" font-family="&quot;Liberation Sans&quot;,sans-serif" textLength="7.6" lengthAdjust="spacingAndGlyphs">CH3</text>
<rect x="439.5" y="89.4" width="246.5" height="185.6" fill="#fff" stroke="#c6c6c6" stroke-width="0.55"/>
<text x="445.6" y="96" font-size="4.86" fill="#404040" font-family="&quot;Liberation Sans&quot;,sans-serif" text-anchor="middle" textLength="6" lengthAdjust="spacingAndGlyphs">No.</text>
<line x1="451.7" y1="89.6" x2="451.7" y2="275" stroke="#e6e9f2" stroke-width="0.55"/>
<text x="462.65" y="96" font-size="4.86" fill="#404040" font-family="&quot;Liberation Sans&quot;,sans-serif" text-anchor="middle" textLength="16" lengthAdjust="spacingAndGlyphs">Time[ms]</text>
<line x1="473.6" y1="89.6" x2="473.6" y2="275" stroke="#e6e9f2" stroke-width="0.55"/>
<text x="480.45" y="96" font-size="4.86" fill="#404040" font-family="&quot;Liberation Sans&quot;,sans-serif" text-anchor="middle" textLength="8.4" lengthAdjust="spacingAndGlyphs">Data</text>
<line x1="487.3" y1="89.6" x2="487.3" y2="275" stroke="#e6e9f2" stroke-width="0.55"/>
<text x="493.5" y="96" font-size="4.86" fill="#404040" font-family="&quot;Liberation Sans&quot;,sans-serif" text-anchor="middle" textLength="7.6" lengthAdjust="spacingAndGlyphs">OVF</text>
<line x1="499.7" y1="89.6" x2="499.7" y2="275" stroke="#e6e9f2" stroke-width="0.55"/>
<text x="505.66" y="96" font-size="4.77" fill="#404040" font-family="&quot;Liberation Sans&quot;,sans-serif" text-anchor="middle" textLength="7.2" lengthAdjust="spacingAndGlyphs">ERR</text>
<line x1="511.63" y1="89.6" x2="511.63" y2="275" stroke="#e6e9f2" stroke-width="0.55"/>
<text x="517.73" y="96" font-size="4.86" fill="#404040" font-family="&quot;Liberation Sans&quot;,sans-serif" text-anchor="middle" textLength="6" lengthAdjust="spacingAndGlyphs">No.</text>
<line x1="523.83" y1="89.6" x2="523.83" y2="275" stroke="#e6e9f2" stroke-width="0.55"/>
<text x="534.78" y="96" font-size="4.86" fill="#404040" font-family="&quot;Liberation Sans&quot;,sans-serif" text-anchor="middle" textLength="16" lengthAdjust="spacingAndGlyphs">Time[ms]</text>
<line x1="545.73" y1="89.6" x2="545.73" y2="275" stroke="#e6e9f2" stroke-width="0.55"/>
<text x="552.58" y="96" font-size="4.86" fill="#404040" font-family="&quot;Liberation Sans&quot;,sans-serif" text-anchor="middle" textLength="8.4" lengthAdjust="spacingAndGlyphs">Data</text>
<line x1="559.43" y1="89.6" x2="559.43" y2="275" stroke="#e6e9f2" stroke-width="0.55"/>
<text x="565.63" y="96" font-size="4.86" fill="#404040" font-family="&quot;Liberation Sans&quot;,sans-serif" text-anchor="middle" textLength="7.6" lengthAdjust="spacingAndGlyphs">OVF</text>
<line x1="571.83" y1="89.6" x2="571.83" y2="275" stroke="#e6e9f2" stroke-width="0.55"/>
<text x="577.79" y="96" font-size="4.77" fill="#404040" font-family="&quot;Liberation Sans&quot;,sans-serif" text-anchor="middle" textLength="7.2" lengthAdjust="spacingAndGlyphs">ERR</text>
<line x1="583.76" y1="89.6" x2="583.76" y2="275" stroke="#e6e9f2" stroke-width="0.55"/>
<text x="589.86" y="96" font-size="4.86" fill="#404040" font-family="&quot;Liberation Sans&quot;,sans-serif" text-anchor="middle" textLength="6" lengthAdjust="spacingAndGlyphs">No.</text>
<line x1="595.96" y1="89.6" x2="595.96" y2="275" stroke="#e6e9f2" stroke-width="0.55"/>
<text x="606.91" y="96" font-size="4.86" fill="#404040" font-family="&quot;Liberation Sans&quot;,sans-serif" text-anchor="middle" textLength="16" lengthAdjust="spacingAndGlyphs">Time[ms]</text>
<line x1="617.86" y1="89.6" x2="617.86" y2="275" stroke="#e6e9f2" stroke-width="0.55"/>
<text x="624.71" y="96" font-size="4.86" fill="#404040" font-family="&quot;Liberation Sans&quot;,sans-serif" text-anchor="middle" textLength="8.4" lengthAdjust="spacingAndGlyphs">Data</text>
<line x1="631.56" y1="89.6" x2="631.56" y2="275" stroke="#e6e9f2" stroke-width="0.55"/>
<text x="637.76" y="96" font-size="4.86" fill="#404040" font-family="&quot;Liberation Sans&quot;,sans-serif" text-anchor="middle" textLength="7.6" lengthAdjust="spacingAndGlyphs">OVF</text>
<line x1="643.96" y1="89.6" x2="643.96" y2="275" stroke="#e6e9f2" stroke-width="0.55"/>
<text x="649.92" y="96" font-size="4.77" fill="#404040" font-family="&quot;Liberation Sans&quot;,sans-serif" text-anchor="middle" textLength="7.2" lengthAdjust="spacingAndGlyphs">ERR</text>
<line x1="655.89" y1="89.6" x2="655.89" y2="275" stroke="#e6e9f2" stroke-width="0.55"/>
<text x="661.99" y="96" font-size="4.86" fill="#404040" font-family="&quot;Liberation Sans&quot;,sans-serif" text-anchor="middle" textLength="6" lengthAdjust="spacingAndGlyphs">No.</text>
<line x1="668.09" y1="89.6" x2="668.09" y2="275" stroke="#e6e9f2" stroke-width="0.55"/>
<text x="670.29" y="96" font-size="4.86" fill="#404040" font-family="&quot;Liberation Sans&quot;,sans-serif" textLength="14" lengthAdjust="spacingAndGlyphs">Time[ms</text>
<line x1="439.8" y1="98.4" x2="685.8" y2="98.4" stroke="#ededed" stroke-width="0.55"/>
<line x1="439.8" y1="105.15" x2="685.8" y2="105.15" stroke="#ededed" stroke-width="0.55"/>
<line x1="439.8" y1="111.89" x2="685.8" y2="111.89" stroke="#ededed" stroke-width="0.55"/>
<line x1="439.8" y1="118.64" x2="685.8" y2="118.64" stroke="#ededed" stroke-width="0.55"/>
<line x1="439.8" y1="125.39" x2="685.8" y2="125.39" stroke="#ededed" stroke-width="0.55"/>
<line x1="439.8" y1="132.13" x2="685.8" y2="132.13" stroke="#ededed" stroke-width="0.55"/>
<line x1="439.8" y1="138.88" x2="685.8" y2="138.88" stroke="#ededed" stroke-width="0.55"/>
<line x1="439.8" y1="145.63" x2="685.8" y2="145.63" stroke="#ededed" stroke-width="0.55"/>
<line x1="439.8" y1="152.38" x2="685.8" y2="152.38" stroke="#ededed" stroke-width="0.55"/>
<line x1="439.8" y1="159.12" x2="685.8" y2="159.12" stroke="#ededed" stroke-width="0.55"/>
<line x1="439.8" y1="165.87" x2="685.8" y2="165.87" stroke="#ededed" stroke-width="0.55"/>
<line x1="439.8" y1="172.62" x2="685.8" y2="172.62" stroke="#ededed" stroke-width="0.55"/>
<line x1="439.8" y1="179.36" x2="685.8" y2="179.36" stroke="#ededed" stroke-width="0.55"/>
<line x1="439.8" y1="186.11" x2="685.8" y2="186.11" stroke="#ededed" stroke-width="0.55"/>
<line x1="439.8" y1="192.86" x2="685.8" y2="192.86" stroke="#ededed" stroke-width="0.55"/>
<line x1="439.8" y1="199.61" x2="685.8" y2="199.61" stroke="#ededed" stroke-width="0.55"/>
<line x1="439.8" y1="206.35" x2="685.8" y2="206.35" stroke="#ededed" stroke-width="0.55"/>
<line x1="439.8" y1="213.1" x2="685.8" y2="213.1" stroke="#ededed" stroke-width="0.55"/>
<line x1="439.8" y1="219.85" x2="685.8" y2="219.85" stroke="#ededed" stroke-width="0.55"/>
<line x1="439.8" y1="226.59" x2="685.8" y2="226.59" stroke="#ededed" stroke-width="0.55"/>
<line x1="439.8" y1="233.34" x2="685.8" y2="233.34" stroke="#ededed" stroke-width="0.55"/>
<line x1="439.8" y1="240.09" x2="685.8" y2="240.09" stroke="#ededed" stroke-width="0.55"/>
<line x1="439.8" y1="246.83" x2="685.8" y2="246.83" stroke="#ededed" stroke-width="0.55"/>
<line x1="439.8" y1="253.58" x2="685.8" y2="253.58" stroke="#ededed" stroke-width="0.55"/>
<line x1="439.8" y1="260.33" x2="685.8" y2="260.33" stroke="#ededed" stroke-width="0.55"/>
<line x1="439.8" y1="267.08" x2="685.8" y2="267.08" stroke="#ededed" stroke-width="0.55"/>
<rect x="202.3" y="267.9" width="697.7" height="380.1" fill="#fff"/>
<rect x="203.6" y="269.2" width="5.5" height="5.5" fill="#111" rx="0.6"/>
<circle cx="207.01" cy="272.5" r="1.49" fill="none" stroke="#fff" stroke-width="0.9"/>
<rect x="207.01" y="272.22" width="2.09" height="1.1" fill="#111"/>
<rect x="204.04" y="269.75" width="1.49" height="1.65" fill="#fff"/>
<text x="211.3" y="274" font-size="5.08" fill="#1c1c1c" font-family="&quot;Liberation Sans&quot;,sans-serif" textLength="19.4" lengthAdjust="spacingAndGlyphs">QE for AFE</text>
<text x="205" y="282" font-size="5.18" fill="#1c1c1c" font-family="&quot;Liberation Sans&quot;,sans-serif" textLength="6.6" lengthAdjust="spacingAndGlyphs">File</text>
<text x="216.7" y="282" font-size="5.18" fill="#1c1c1c" font-family="&quot;Liberation Sans&quot;,sans-serif" textLength="15.3" lengthAdjust="spacingAndGlyphs">Window</text>
<text x="237" y="282" font-size="5.18" fill="#1c1c1c" font-family="&quot;Liberation Sans&quot;,sans-serif" textLength="9" lengthAdjust="spacingAndGlyphs">Help</text>
<line x1="841.2" y1="271.7" x2="844.8" y2="271.7" stroke="#666" stroke-width="0.5"/>
<rect x="857.1" y="270.3" width="3.2" height="3.2" fill="none" stroke="#666" stroke-width="0.5"/>
<path d="M857.9 270.3 L857.9 269.6 L861 269.6 L861 272.7 L860.3 272.7" fill="none" stroke="#777" stroke-width="0.45"/>
<line x1="873.9" y1="269.8" x2="877.7" y2="273.5" stroke="#444" stroke-width="0.5"/>
<line x1="873.9" y1="273.5" x2="877.7" y2="269.8" stroke="#444" stroke-width="0.5"/>
<rect x="203.2" y="283.3" width="423.6" height="309.7" fill="#fff" stroke="#d4d4d4" stroke-width="0.6"/>
<rect x="203.4" y="283.4" width="423.2" height="8.1" fill="#f0f0f0"/>
<line x1="203.4" y1="283.3" x2="626.6" y2="283.3" stroke="#d9d9d9" stroke-width="0.6"/>
<rect x="203.4" y="291.7" width="423.2" height="12" fill="#f0f0f0"/>
<line x1="203.4" y1="291.6" x2="626.6" y2="291.6" stroke="#e6e6e6" stroke-width="0.5"/>
<rect x="203.4" y="283.5" width="47" height="8.4" fill="#fff"/>
<line x1="203.4" y1="283.6" x2="250.4" y2="283.6" stroke="#4a7dc8" stroke-width="0.9"/>
<line x1="250.4" y1="283.5" x2="250.4" y2="291.6" stroke="#c8c8c8" stroke-width="0.5"/>
<rect x="205.2" y="285.8" width="4" height="4" fill="#fff" stroke="#5a7fb5" stroke-width="0.5"/>
<line x1="205.2" y1="286.4" x2="209.2" y2="286.4" stroke="#5a7fb5" stroke-width="0.9"/>
<text x="211.3" y="289" font-size="5.29" fill="#1c1c1c" font-family="&quot;Liberation Sans&quot;,sans-serif" textLength="29.7" lengthAdjust="spacingAndGlyphs">AFE Tuning (QE)</text>
<line x1="244.7" y1="286.5" x2="247.3" y2="289.1" stroke="#777" stroke-width="0.5"/>
<line x1="244.7" y1="289.1" x2="247.3" y2="286.5" stroke="#777" stroke-width="0.5"/>
<rect x="611.9" y="285.2" width="3.8" height="1.2" fill="#fafafa" stroke="#8a8a8a" stroke-width="0.45"/>
<rect x="620.1" y="285.2" width="3.8" height="3.6" fill="#fafafa" stroke="#5a5a5a" stroke-width="0.5"/>
<line x1="620.1" y1="285.6" x2="623.9" y2="285.6" stroke="#5a5a5a" stroke-width="0.8"/>
<rect x="625.3" y="303.7" width="1.3" height="289.3" fill="#ececec"/>
<rect x="473.8" y="295.4" width="5.8" height="5.2" fill="#222" rx="1.2"/>
<rect x="475" y="296.6" width="3.4" height="2.8" fill="#fff" rx="0.4"/>
<line x1="476.7" y1="296.4" x2="476.7" y2="299.6" stroke="#222" stroke-width="0.5"/>
<path d="M483.6 297.8 L485.2 297.8 L484.4 298.8 Z" fill="#333" stroke="#333" stroke-width="0.3"/>
<text x="487" y="299" font-size="5.18" fill="#1c1c1c" font-family="&quot;Liberation Sans&quot;,sans-serif" textLength="19.3" lengthAdjust="spacingAndGlyphs">COM Port:</text>
<rect x="510.5" y="293.8" width="47" height="7" fill="#cdcdcd" stroke="#c0c0c0" stroke-width="0.5"/>
<text x="511.9" y="299" font-size="4.97" fill="#8a8a8a" font-family="&quot;Liberation Sans&quot;,sans-serif" textLength="11" lengthAdjust="spacingAndGlyphs">COM1</text>
<path d="M553.4 296.75 L554.5 297.85 L555.6 296.75" fill="none" stroke="#999" stroke-width="0.5"/>
<rect x="560.5" y="293.8" width="38.8" height="7" fill="#e1e1e1" stroke="#adadad" stroke-width="0.5"/>
<text x="579.9" y="299" font-size="4.97" fill="#303030" font-family="&quot;Liberation Sans&quot;,sans-serif" text-anchor="middle" textLength="22.5" lengthAdjust="spacingAndGlyphs">Disconnect</text>
<circle cx="607.5" cy="298" r="2.3" fill="#444"/>
<circle cx="607.5" cy="298" r="1" fill="#ddd"/>
<line x1="607.5" y1="298" x2="609.1" y2="297" stroke="#444" stroke-width="0.5"/>
<circle cx="618.8" cy="298" r="2.3" fill="#444"/>
<circle cx="618.8" cy="298" r="1" fill="#ddd"/>
<line x1="618.8" y1="298" x2="620.4" y2="297" stroke="#444" stroke-width="0.5"/>
<rect x="207.3" y="307.4" width="42.3" height="7.6" fill="#e1e1e1" stroke="#adadad" stroke-width="0.5"/>
<text x="228.45" y="313" font-size="5.18" fill="#303030" font-family="&quot;Liberation Sans&quot;,sans-serif" text-anchor="middle" textLength="38.6" lengthAdjust="spacingAndGlyphs">Start AFE monitoring</text>
<rect x="583.6" y="308.4" width="6.6" height="6" fill="#cce4f7" stroke="#7fb2e6" stroke-width="0.5"/>
<rect x="591.6" y="308.4" width="6.6" height="6" fill="#cce4f7" stroke="#7fb2e6" stroke-width="0.5"/>
<path d="M584.8 309.4 L584.8 313.4 L589.2 313.4" fill="none" stroke="#333" stroke-width="0.5"/>
<path d="M585.4 312.4 L586.6 310.6 L587.6 311.6 L589 309.6" fill="none" stroke="#2a62b8" stroke-width="0.5"/>
<path d="M592.8 309.4 L592.8 313.4 L597.2 313.4" fill="none" stroke="#333" stroke-width="0.5"/>
<rect x="593.6" y="311.6" width="0.9" height="1.6" fill="#2a62b8"/>
<rect x="594.7" y="310" width="0.9" height="3.2" fill="#2a62b8"/>
<rect x="595.8" y="311" width="0.9" height="2.2" fill="#2a62b8"/>
<path d="M600.2 309.8 L602 309.8 L602.6 310.6 L605.4 310.6 L605.4 313.4 L600.2 313.4 Z" fill="#f2b648" stroke="#c98a1a" stroke-width="0.4"/>
<rect x="608.6" y="309.6" width="3.2" height="4" fill="#eef3fb" stroke="#5a7fb5" stroke-width="0.5"/>
<rect x="609.8" y="308.8" width="3.2" height="3.8" fill="#eef3fb" stroke="#5a7fb5" stroke-width="0.5"/>
<rect x="616.4" y="309.2" width="5.4" height="4.4" fill="#fff" stroke="#444" stroke-width="0.6"/>
<line x1="616.4" y1="310.6" x2="621.8" y2="310.6" stroke="#444" stroke-width="0.7"/>
<line x1="617.6" y1="312.2" x2="620.6" y2="312.2" stroke="#444" stroke-width="0.5"/>
<rect x="207.3" y="317.8" width="207.2" height="263.2" fill="#fff" stroke="#c4c4c4" stroke-width="0.7"/>
<line x1="207.6" y1="356" x2="414.2" y2="356" stroke="#c4c4c4" stroke-width="0.9"/>
<line x1="207.6" y1="357.3" x2="414.2" y2="357.3" stroke="#e3e3e3" stroke-width="0.5"/>
<rect x="210.4" y="323.4" width="201.2" height="12" fill="none" stroke="#dedede" stroke-width="0.5" rx="0.6"/>
<rect x="212.4" y="322.4" width="31" height="2" fill="#fff"/>
<text x="213.3" y="325" font-size="5.29" fill="#303030" font-family="&quot;Liberation Sans&quot;,sans-serif" textLength="29.1" lengthAdjust="spacingAndGlyphs">Channel setting</text>
<rect x="213" y="328.1" width="4.4" height="4.4" fill="#fff" stroke="#5a5a5a" stroke-width="0.5"/>
<path d="M213.9 330.3 L214.85 331.53 L216.7 328.98" fill="none" stroke="#3a3a3a" stroke-width="0.55"/>
<text x="218.9" y="332" font-size="4.97" fill="#303030" font-family="&quot;Liberation Sans&quot;,sans-serif" textLength="7.8" lengthAdjust="spacingAndGlyphs">CH0</text>
<rect x="230.07" y="328.1" width="4.4" height="4.4" fill="#fff" stroke="#bcbcbc" stroke-width="0.5"/>
<path d="M230.97 330.3 L231.92 331.53 L233.77 328.98" fill="none" stroke="#c4c4c4" stroke-width="0.55"/>
<text x="235.97" y="332" font-size="4.97" fill="#b4b4b4" font-family="&quot;Liberation Sans&quot;,sans-serif" textLength="7.8" lengthAdjust="spacingAndGlyphs">CH1</text>
<rect x="247.14" y="328.1" width="4.4" height="4.4" fill="#fff" stroke="#bcbcbc" stroke-width="0.5"/>
<path d="M248.04 330.3 L248.99 331.53 L250.84 328.98" fill="none" stroke="#c4c4c4" stroke-width="0.55"/>
<text x="253.04" y="332" font-size="4.97" fill="#b4b4b4" font-family="&quot;Liberation Sans&quot;,sans-serif" textLength="7.8" lengthAdjust="spacingAndGlyphs">CH2</text>
<rect x="264.21" y="328.1" width="4.4" height="4.4" fill="#fff" stroke="#bcbcbc" stroke-width="0.5"/>
<path d="M265.11 330.3 L266.06 331.53 L267.91 328.98" fill="none" stroke="#c4c4c4" stroke-width="0.55"/>
<text x="270.11" y="332" font-size="4.97" fill="#b4b4b4" font-family="&quot;Liberation Sans&quot;,sans-serif" textLength="7.8" lengthAdjust="spacingAndGlyphs">CH3</text>
<rect x="281.28" y="328.1" width="4.4" height="4.4" fill="#fff" stroke="#bcbcbc" stroke-width="0.5"/>
<path d="M282.18 330.3 L283.13 331.53 L284.98 328.98" fill="none" stroke="#c4c4c4" stroke-width="0.55"/>
<text x="287.18" y="332" font-size="4.97" fill="#b4b4b4" font-family="&quot;Liberation Sans&quot;,sans-serif" textLength="7.8" lengthAdjust="spacingAndGlyphs">CH4</text>
<rect x="298.35" y="328.1" width="4.4" height="4.4" fill="#fff" stroke="#bcbcbc" stroke-width="0.5"/>
<path d="M299.25 330.3 L300.2 331.53 L302.05 328.98" fill="none" stroke="#c4c4c4" stroke-width="0.55"/>
<text x="304.25" y="332" font-size="4.97" fill="#b4b4b4" font-family="&quot;Liberation Sans&quot;,sans-serif" textLength="7.8" lengthAdjust="spacingAndGlyphs">CH5</text>
<rect x="315.42" y="328.1" width="4.4" height="4.4" fill="#fff" stroke="#bcbcbc" stroke-width="0.5"/>
<path d="M316.32 330.3 L317.27 331.53 L319.12 328.98" fill="none" stroke="#c4c4c4" stroke-width="0.55"/>
<text x="321.32" y="332" font-size="4.97" fill="#b4b4b4" font-family="&quot;Liberation Sans&quot;,sans-serif" textLength="7.8" lengthAdjust="spacingAndGlyphs">CH6</text>
<rect x="332.49" y="328.1" width="4.4" height="4.4" fill="#fff" stroke="#bcbcbc" stroke-width="0.5"/>
<path d="M333.39 330.3 L334.34 331.53 L336.19 328.98" fill="none" stroke="#c4c4c4" stroke-width="0.55"/>
<text x="338.39" y="332" font-size="4.97" fill="#b4b4b4" font-family="&quot;Liberation Sans&quot;,sans-serif" textLength="7.8" lengthAdjust="spacingAndGlyphs">CH7</text>
<rect x="210.4" y="339.5" width="4.4" height="4.4" fill="#fff" stroke="#5a5a5a" stroke-width="0.5"/>
<path d="M211.3 341.7 L212.25 342.93 L214.1 340.38" fill="none" stroke="#3a3a3a" stroke-width="0.55"/>
<text x="216.3" y="344" font-size="5.18" fill="#303030" font-family="&quot;Liberation Sans&quot;,sans-serif" textLength="23.4" lengthAdjust="spacingAndGlyphs">Auto Scaling</text>
<rect x="270.3" y="338.3" width="17.7" height="7.4" fill="#e1e1e1" stroke="#adadad" stroke-width="0.5"/>
<text x="271.7" y="344" font-size="4.97" fill="#303030" font-family="&quot;Liberation Sans&quot;,sans-serif" textLength="7.6" lengthAdjust="spacingAndGlyphs">CH0</text>
<path d="M283.9 341.45 L285 342.55 L286.1 341.45" fill="none" stroke="#555" stroke-width="0.5"/>
<text x="290.4" y="344" font-size="4.97" fill="#4c4c4c" font-family="&quot;Liberation Sans&quot;,sans-serif" textLength="58.9" lengthAdjust="spacingAndGlyphs">No.:- Time:-ms Value:- Voltage:-</text>
<rect x="210.4" y="360" width="201.4" height="201" fill="#fff" stroke="#d6d6d6" stroke-width="0.5"/>
<rect x="216.3" y="365.4" width="5" height="5" fill="#fff" stroke="#8a8a8a" stroke-width="0.5"/>
<line x1="217.4" y1="367.9" x2="220.2" y2="367.9" stroke="#777" stroke-width="0.5"/>
<line x1="218.8" y1="366.5" x2="218.8" y2="369.3" stroke="#777" stroke-width="0.5"/>
<rect x="216.3" y="519.3" width="5" height="5" fill="#fff" stroke="#8a8a8a" stroke-width="0.5"/>
<line x1="217.4" y1="521.8" x2="220.2" y2="521.8" stroke="#777" stroke-width="0.5"/>
<rect x="232" y="363" width="174.3" height="163" fill="#000"/>
<line x1="249.43" y1="363" x2="249.43" y2="526" stroke="#8a8a8a" stroke-width="0.7" stroke-dasharray="1 1"/>
<line x1="232" y1="379.3" x2="406.3" y2="379.3" stroke="#8a8a8a" stroke-width="0.7" stroke-dasharray="1 1"/>
<line x1="266.86" y1="363" x2="266.86" y2="526" stroke="#8a8a8a" stroke-width="0.7" stroke-dasharray="1 1"/>
<line x1="232" y1="395.6" x2="406.3" y2="395.6" stroke="#8a8a8a" stroke-width="0.7" stroke-dasharray="1 1"/>
<line x1="284.29" y1="363" x2="284.29" y2="526" stroke="#8a8a8a" stroke-width="0.7" stroke-dasharray="1 1"/>
<line x1="232" y1="411.9" x2="406.3" y2="411.9" stroke="#8a8a8a" stroke-width="0.7" stroke-dasharray="1 1"/>
<line x1="301.72" y1="363" x2="301.72" y2="526" stroke="#8a8a8a" stroke-width="0.7" stroke-dasharray="1 1"/>
<line x1="232" y1="428.2" x2="406.3" y2="428.2" stroke="#8a8a8a" stroke-width="0.7" stroke-dasharray="1 1"/>
<line x1="319.15" y1="363" x2="319.15" y2="526" stroke="#8a8a8a" stroke-width="0.7" stroke-dasharray="1 1"/>
<line x1="232" y1="444.5" x2="406.3" y2="444.5" stroke="#8a8a8a" stroke-width="0.7" stroke-dasharray="1 1"/>
<line x1="336.58" y1="363" x2="336.58" y2="526" stroke="#8a8a8a" stroke-width="0.7" stroke-dasharray="1 1"/>
<line x1="232" y1="460.8" x2="406.3" y2="460.8" stroke="#8a8a8a" stroke-width="0.7" stroke-dasharray="1 1"/>
<line x1="354.01" y1="363" x2="354.01" y2="526" stroke="#8a8a8a" stroke-width="0.7" stroke-dasharray="1 1"/>
<line x1="232" y1="477.1" x2="406.3" y2="477.1" stroke="#8a8a8a" stroke-width="0.7" stroke-dasharray="1 1"/>
<line x1="371.44" y1="363" x2="371.44" y2="526" stroke="#8a8a8a" stroke-width="0.7" stroke-dasharray="1 1"/>
<line x1="232" y1="493.4" x2="406.3" y2="493.4" stroke="#8a8a8a" stroke-width="0.7" stroke-dasharray="1 1"/>
<line x1="388.87" y1="363" x2="388.87" y2="526" stroke="#8a8a8a" stroke-width="0.7" stroke-dasharray="1 1"/>
<line x1="232" y1="509.7" x2="406.3" y2="509.7" stroke="#8a8a8a" stroke-width="0.7" stroke-dasharray="1 1"/>
<path d="M232.5 405.5 L233.75 405.5 L233.75 390 L236.25 390 L236.25 385 L237 385 L237 372.5 L238.75 372.5 L238.75 372.5 L239.25 372.5 L239.25 385 L240.75 385 L240.75 392.5 L242.5 392.5 L242.5 397.5 L244.25 397.5 L244.25 395 L246.25 395 L246.25 398.75 L247.5 398.75 L247.5 395 L249.25 395 L249.25 382.5 L251.25 382.5 L251.25 377.5 L253.75 377.5 L253.75 375 L256.25 375 L256.25 372.5 L258.75 372.5 L258.75 366.25 L261.25 366.25 L261.25 363.75 L265 363.75 L265 363.75 L266.25 363.75 L266.25 375 L267.5 375 L267.5 387.5 L270.75 387.5 L270.75 387.5 L271.75 387.5 L271.75 393.75 L273.75 393.75 L273.75 400 L276.25 400 L276.25 402.5 L278 402.5 L278 396.25 L280 396.25 L280 388.75 L282 388.75 L282 392.5 L283.75 392.5 L283.75 388.75 L285 388.75 L285 367.5 L287 367.5 L287 368.75 L288.75 368.75 L288.75 377.5 L290 377.5 L290 390 L292 390 L292 383.75 L294.5 383.75 L294.5 387.5 L297.5 387.5 L297.5 388.25 L302 388.25 L302 388.25 L303 388.25 L303 402.5 L305 402.5 L305 403.75 L305.5 403.75 L305.5 418.75 L308.75 418.75 L308.75 416.25 L310 416.25 L310 442.5 L312.5 442.5 L312.5 438.75 L313.75 438.75 L313.75 420 L316.25 420 L316.25 415.5 L317.5 415.5 L317.5 395 L320 395 L320 385 L320.75 385 L320.75 368 L323.25 368 L323.25 372.5 L324.25 372.5 L324.25 383.75 L326.25 383.75 L326.25 388.75 L328 388.75 L328 385 L330 385 L330 391.25 L331.75 391.25 L331.75 387 L335 387 L335 387.5 L336.25 387.5 L336.25 396.25 L337.5 396.25 L337.5 412.5 L340 412.5 L340 410 L341.25 410 L341.25 397.5 L343 397.5 L343 396.25 L344.5 396.25 L344.5 403.75 L346.25 403.75 L346.25 411.25 L347.5 411.25 L347.5 387.5 L349.5 387.5 L349.5 381.25 L351.25 381.25 L351.25 374.5 L353.75 374.5 L353.75 376.25 L355 376.25 L355 382.5 L356.75 382.5 L356.75 373 L358 373 L358 382.5 L360 382.5 L360 391.25 L362.5 391.25 L362.5 391.25 L363.75 391.25 L363.75 385 L365 385 L365 400 L368 400 L368 401.25 L371.25 401.25 L371.25 397.5 L372.5 397.5 L372.5 410 L375 410 L375 408.75 L376.25 408.75 L376.25 400 L377.5 400 L377.5 412.5 L380.5 412.5 L380.5 414.5 L383.75 414.5 L383.75 416.25 L385 416.25 L385 395 L387 395 L387 397.5 L388.75 397.5 L388.75 390 L390 390 L390 373 L393 373 L393 375 L394.5 375 L394.5 387.5 L395.75 387.5 L395.75 393.75 L397.5 393.75 L397.5 385 L400 385 L400 382.5 L401.25 382.5 L401.25 397.5 L403.75 397.5 L403.75 391.25 L405 391.25 L405 402.5 L406.25 402.5 L406.25 402.5" fill="none" stroke="#7a0000" stroke-width="1.5" stroke-linejoin="miter"/>
<path d="M232.5 405.5 L233.75 405.5 L233.75 390 L236.25 390 L236.25 385 L237 385 L237 372.5 L238.75 372.5 L238.75 372.5 L239.25 372.5 L239.25 385 L240.75 385 L240.75 392.5 L242.5 392.5 L242.5 397.5 L244.25 397.5 L244.25 395 L246.25 395 L246.25 398.75 L247.5 398.75 L247.5 395 L249.25 395 L249.25 382.5 L251.25 382.5 L251.25 377.5 L253.75 377.5 L253.75 375 L256.25 375 L256.25 372.5 L258.75 372.5 L258.75 366.25 L261.25 366.25 L261.25 363.75 L265 363.75 L265 363.75 L266.25 363.75 L266.25 375 L267.5 375 L267.5 387.5 L270.75 387.5 L270.75 387.5 L271.75 387.5 L271.75 393.75 L273.75 393.75 L273.75 400 L276.25 400 L276.25 402.5 L278 402.5 L278 396.25 L280 396.25 L280 388.75 L282 388.75 L282 392.5 L283.75 392.5 L283.75 388.75 L285 388.75 L285 367.5 L287 367.5 L287 368.75 L288.75 368.75 L288.75 377.5 L290 377.5 L290 390 L292 390 L292 383.75 L294.5 383.75 L294.5 387.5 L297.5 387.5 L297.5 388.25 L302 388.25 L302 388.25 L303 388.25 L303 402.5 L305 402.5 L305 403.75 L305.5 403.75 L305.5 418.75 L308.75 418.75 L308.75 416.25 L310 416.25 L310 442.5 L312.5 442.5 L312.5 438.75 L313.75 438.75 L313.75 420 L316.25 420 L316.25 415.5 L317.5 415.5 L317.5 395 L320 395 L320 385 L320.75 385 L320.75 368 L323.25 368 L323.25 372.5 L324.25 372.5 L324.25 383.75 L326.25 383.75 L326.25 388.75 L328 388.75 L328 385 L330 385 L330 391.25 L331.75 391.25 L331.75 387 L335 387 L335 387.5 L336.25 387.5 L336.25 396.25 L337.5 396.25 L337.5 412.5 L340 412.5 L340 410 L341.25 410 L341.25 397.5 L343 397.5 L343 396.25 L344.5 396.25 L344.5 403.75 L346.25 403.75 L346.25 411.25 L347.5 411.25 L347.5 387.5 L349.5 387.5 L349.5 381.25 L351.25 381.25 L351.25 374.5 L353.75 374.5 L353.75 376.25 L355 376.25 L355 382.5 L356.75 382.5 L356.75 373 L358 373 L358 382.5 L360 382.5 L360 391.25 L362.5 391.25 L362.5 391.25 L363.75 391.25 L363.75 385 L365 385 L365 400 L368 400 L368 401.25 L371.25 401.25 L371.25 397.5 L372.5 397.5 L372.5 410 L375 410 L375 408.75 L376.25 408.75 L376.25 400 L377.5 400 L377.5 412.5 L380.5 412.5 L380.5 414.5 L383.75 414.5 L383.75 416.25 L385 416.25 L385 395 L387 395 L387 397.5 L388.75 397.5 L388.75 390 L390 390 L390 373 L393 373 L393 375 L394.5 375 L394.5 387.5 L395.75 387.5 L395.75 393.75 L397.5 393.75 L397.5 385 L400 385 L400 382.5 L401.25 382.5 L401.25 397.5 L403.75 397.5 L403.75 391.25 L405 391.25 L405 402.5 L406.25 402.5 L406.25 402.5" fill="none" stroke="#e81010" stroke-width="0.8" stroke-linejoin="miter"/>
<path d="M226.3 442.9 L229.6 444.3 L226.3 445.7 Z" fill="#e00000" stroke="#e00000" stroke-width="0.2"/>
<text x="234.2" y="536" font-size="4.54" fill="#404040" font-family="&quot;Liberation Sans&quot;,sans-serif" text-anchor="middle" textLength="11.6" lengthAdjust="spacingAndGlyphs">250.00</text>
<text x="249.43" y="536" font-size="4.54" fill="#404040" font-family="&quot;Liberation Sans&quot;,sans-serif" text-anchor="middle" textLength="11.6" lengthAdjust="spacingAndGlyphs">260.00</text>
<text x="266.86" y="536" font-size="4.54" fill="#404040" font-family="&quot;Liberation Sans&quot;,sans-serif" text-anchor="middle" textLength="11.6" lengthAdjust="spacingAndGlyphs">270.00</text>
<text x="284.29" y="536" font-size="4.54" fill="#404040" font-family="&quot;Liberation Sans&quot;,sans-serif" text-anchor="middle" textLength="11.6" lengthAdjust="spacingAndGlyphs">280.00</text>
<text x="301.72" y="536" font-size="4.54" fill="#404040" font-family="&quot;Liberation Sans&quot;,sans-serif" text-anchor="middle" textLength="11.6" lengthAdjust="spacingAndGlyphs">290.00</text>
<text x="319.15" y="536" font-size="4.54" fill="#404040" font-family="&quot;Liberation Sans&quot;,sans-serif" text-anchor="middle" textLength="11.6" lengthAdjust="spacingAndGlyphs">300.00</text>
<text x="336.58" y="536" font-size="4.54" fill="#404040" font-family="&quot;Liberation Sans&quot;,sans-serif" text-anchor="middle" textLength="11.6" lengthAdjust="spacingAndGlyphs">310.00</text>
<text x="354.01" y="536" font-size="4.54" fill="#404040" font-family="&quot;Liberation Sans&quot;,sans-serif" text-anchor="middle" textLength="11.6" lengthAdjust="spacingAndGlyphs">320.00</text>
<text x="371.44" y="536" font-size="4.54" fill="#404040" font-family="&quot;Liberation Sans&quot;,sans-serif" text-anchor="middle" textLength="11.6" lengthAdjust="spacingAndGlyphs">330.00</text>
<text x="388.87" y="536" font-size="4.54" fill="#404040" font-family="&quot;Liberation Sans&quot;,sans-serif" text-anchor="middle" textLength="11.6" lengthAdjust="spacingAndGlyphs">340.00</text>
<text x="401.7" y="536" font-size="4.54" fill="#404040" font-family="&quot;Liberation Sans&quot;,sans-serif" text-anchor="middle" textLength="11.6" lengthAdjust="spacingAndGlyphs">350.00</text>
<rect x="235" y="543" width="5" height="5" fill="#fff" stroke="#8a8a8a" stroke-width="0.5"/>
<line x1="236.1" y1="545.5" x2="238.9" y2="545.5" stroke="#777" stroke-width="0.5"/>
<rect x="400.5" y="543" width="5" height="5" fill="#fff" stroke="#8a8a8a" stroke-width="0.5"/>
<line x1="401.6" y1="545.5" x2="404.4" y2="545.5" stroke="#777" stroke-width="0.5"/>
<line x1="403" y1="544.1" x2="403" y2="546.9" stroke="#777" stroke-width="0.5"/>
<rect x="232" y="553.6" width="176.8" height="5.4" fill="#f0f0f0"/>
<rect x="283" y="553.6" width="17.5" height="5.4" fill="#c4c4c4"/>
<path d="M235 555.3 L234 556.3 L235 557.3" fill="none" stroke="#555" stroke-width="0.5"/>
<path d="M405.6 555.3 L406.6 556.3 L405.6 557.3" fill="none" stroke="#555" stroke-width="0.5"/>
<rect x="210.5" y="563.5" width="201.3" height="6.8" fill="#fff" stroke="#d0d0d0" stroke-width="0.5"/>
<path d="M212.4 566.1 L213.5 566.9 L212.4 567.7 Z" fill="#222" stroke="#222" stroke-width="0.2"/>
<text x="216.3" y="569" font-size="4.97" fill="#404040" font-family="&quot;Liberation Sans&quot;,sans-serif" textLength="20.5" lengthAdjust="spacingAndGlyphs">Parameters</text>
<rect x="210.5" y="572.3" width="201.3" height="6.3" fill="#fff" stroke="#d0d0d0" stroke-width="0.5"/>
<path d="M212.4 574.65 L213.5 575.45 L212.4 576.25 Z" fill="#222" stroke="#222" stroke-width="0.2"/>
<text x="216.3" y="577" font-size="4.97" fill="#404040" font-family="&quot;Liberation Sans&quot;,sans-serif" textLength="13.7" lengthAdjust="spacingAndGlyphs">Legend</text>
<rect x="417" y="317.8" width="205.5" height="263.2" fill="#fff" stroke="#c4c4c4" stroke-width="0.7"/>
<line x1="417.3" y1="370" x2="622.2" y2="370" stroke="#c4c4c4" stroke-width="0.9"/>
<line x1="417.3" y1="371.3" x2="622.2" y2="371.3" stroke="#e3e3e3" stroke-width="0.5"/>
<text x="420" y="327" font-size="5.18" fill="#303030" font-family="&quot;Liberation Sans&quot;,sans-serif" textLength="32.5" lengthAdjust="spacingAndGlyphs">Channel selection:</text>
<rect x="454.5" y="321.8" width="80" height="7.5" fill="#e1e1e1" stroke="#adadad" stroke-width="0.5"/>
<text x="455.9" y="327" font-size="4.97" fill="#303030" font-family="&quot;Liberation Sans&quot;,sans-serif" textLength="7.6" lengthAdjust="spacingAndGlyphs">CH0</text>
<path d="M530.4 325 L531.5 326.1 L532.6 325" fill="none" stroke="#555" stroke-width="0.5"/>
<rect x="419.5" y="331.8" width="4.4" height="4.4" fill="#fff" stroke="#5a5a5a" stroke-width="0.5"/>
<path d="M420.4 334 L421.35 335.23 L423.2 332.68" fill="none" stroke="#3a3a3a" stroke-width="0.55"/>
<text x="425.5" y="336" font-size="5.18" fill="#303030" font-family="&quot;Liberation Sans&quot;,sans-serif" textLength="23.3" lengthAdjust="spacingAndGlyphs">Auto Scaling</text>
<rect x="420" y="341.6" width="199.5" height="25.9" fill="none" stroke="#dedede" stroke-width="0.5" rx="0.6"/>
<rect x="422" y="340.6" width="38.3" height="2" fill="#fff"/>
<text x="423" y="343" font-size="5.18" fill="#303030" font-family="&quot;Liberation Sans&quot;,sans-serif" textLength="36.3" lengthAdjust="spacingAndGlyphs">Measurement Value</text>
<text x="423" y="350" font-size="4.86" fill="#404040" font-family="&quot;Liberation Sans&quot;,sans-serif" textLength="17.5" lengthAdjust="spacingAndGlyphs">MAX: 858</text>
<text x="450" y="350" font-size="4.86" fill="#404040" font-family="&quot;Liberation Sans&quot;,sans-serif" textLength="32" lengthAdjust="spacingAndGlyphs">Peak to Peak: 408</text>
<text x="485.8" y="350" font-size="4.86" fill="#404040" font-family="&quot;Liberation Sans&quot;,sans-serif" textLength="47.2" lengthAdjust="spacingAndGlyphs">Standard Deviation: 78.59</text>
<text x="423" y="357" font-size="4.86" fill="#404040" font-family="&quot;Liberation Sans&quot;,sans-serif" textLength="16.3" lengthAdjust="spacingAndGlyphs">MIN: 450</text>
<text x="450" y="357" font-size="4.86" fill="#404040" font-family="&quot;Liberation Sans&quot;,sans-serif" textLength="19.5" lengthAdjust="spacingAndGlyphs">NFR: 15.33</text>
<text x="485.8" y="357" font-size="4.86" fill="#404040" font-family="&quot;Liberation Sans&quot;,sans-serif" textLength="48.7" lengthAdjust="spacingAndGlyphs">Effective Resolution: 17.70</text>
<text x="423" y="364" font-size="4.86" fill="#404040" font-family="&quot;Liberation Sans&quot;,sans-serif" textLength="24" lengthAdjust="spacingAndGlyphs">MEAN: 710.0</text>
<text x="450" y="364" font-size="4.86" fill="#404040" font-family="&quot;Liberation Sans&quot;,sans-serif" textLength="27.8" lengthAdjust="spacingAndGlyphs">P-P Noise: 0.00</text>
<text x="485.8" y="364" font-size="4.86" fill="#404040" font-family="&quot;Liberation Sans&quot;,sans-serif" textLength="29.7" lengthAdjust="spacingAndGlyphs">RMS Noise: 0.00</text>
<rect x="419.5" y="375" width="201" height="194.8" fill="#fff" stroke="#d6d6d6" stroke-width="0.5"/>
<rect x="447.5" y="378" width="170" height="155.5" fill="#000"/>
<line x1="464.5" y1="378" x2="464.5" y2="533.5" stroke="#8a8a8a" stroke-width="0.7" stroke-dasharray="1 1"/>
<line x1="448" y1="517.95" x2="617.5" y2="517.95" stroke="#8a8a8a" stroke-width="0.7" stroke-dasharray="1 1"/>
<line x1="481.5" y1="378" x2="481.5" y2="533.5" stroke="#8a8a8a" stroke-width="0.7" stroke-dasharray="1 1"/>
<line x1="448" y1="502.4" x2="617.5" y2="502.4" stroke="#8a8a8a" stroke-width="0.7" stroke-dasharray="1 1"/>
<line x1="498.5" y1="378" x2="498.5" y2="533.5" stroke="#8a8a8a" stroke-width="0.7" stroke-dasharray="1 1"/>
<line x1="448" y1="486.85" x2="617.5" y2="486.85" stroke="#8a8a8a" stroke-width="0.7" stroke-dasharray="1 1"/>
<line x1="515.5" y1="378" x2="515.5" y2="533.5" stroke="#8a8a8a" stroke-width="0.7" stroke-dasharray="1 1"/>
<line x1="448" y1="471.3" x2="617.5" y2="471.3" stroke="#8a8a8a" stroke-width="0.7" stroke-dasharray="1 1"/>
<line x1="532.5" y1="378" x2="532.5" y2="533.5" stroke="#8a8a8a" stroke-width="0.7" stroke-dasharray="1 1"/>
<line x1="448" y1="455.75" x2="617.5" y2="455.75" stroke="#8a8a8a" stroke-width="0.7" stroke-dasharray="1 1"/>
<line x1="549.5" y1="378" x2="549.5" y2="533.5" stroke="#8a8a8a" stroke-width="0.7" stroke-dasharray="1 1"/>
<line x1="448" y1="440.2" x2="617.5" y2="440.2" stroke="#8a8a8a" stroke-width="0.7" stroke-dasharray="1 1"/>
<line x1="566.5" y1="378" x2="566.5" y2="533.5" stroke="#8a8a8a" stroke-width="0.7" stroke-dasharray="1 1"/>
<line x1="448" y1="424.65" x2="617.5" y2="424.65" stroke="#8a8a8a" stroke-width="0.7" stroke-dasharray="1 1"/>
<line x1="583.5" y1="378" x2="583.5" y2="533.5" stroke="#8a8a8a" stroke-width="0.7" stroke-dasharray="1 1"/>
<line x1="448" y1="409.1" x2="617.5" y2="409.1" stroke="#8a8a8a" stroke-width="0.7" stroke-dasharray="1 1"/>
<line x1="600.5" y1="378" x2="600.5" y2="533.5" stroke="#8a8a8a" stroke-width="0.7" stroke-dasharray="1 1"/>
<line x1="448" y1="393.55" x2="617.5" y2="393.55" stroke="#8a8a8a" stroke-width="0.7" stroke-dasharray="1 1"/>
<rect x="447.5" y="523.13" width="17" height="10.37" fill="#00ff00"/>
<rect x="481.5" y="523.13" width="17.3" height="10.37" fill="#00ff00"/>
<rect x="498.5" y="486.85" width="17" height="46.65" fill="#00ff00"/>
<rect x="515.2" y="507.58" width="17.6" height="25.92" fill="#00ff00"/>
<rect x="532.5" y="445.38" width="17.3" height="88.12" fill="#00ff00"/>
<rect x="549.5" y="378" width="17" height="155.5" fill="#00ff00"/>
<rect x="566.2" y="460.93" width="17.3" height="72.57" fill="#00ff00"/>
<rect x="583.2" y="466.12" width="17.3" height="67.38" fill="#00ff00"/>
<rect x="600.2" y="502.4" width="17.3" height="31.1" fill="#00ff00"/>
<line x1="498.5" y1="523.43" x2="498.5" y2="533.5" stroke="#52e052" stroke-width="0.4"/>
<line x1="515.5" y1="507.88" x2="515.5" y2="533.5" stroke="#52e052" stroke-width="0.4"/>
<line x1="532.5" y1="507.88" x2="532.5" y2="533.5" stroke="#52e052" stroke-width="0.4"/>
<line x1="549.5" y1="445.68" x2="549.5" y2="533.5" stroke="#52e052" stroke-width="0.4"/>
<line x1="566.5" y1="461.23" x2="566.5" y2="533.5" stroke="#52e052" stroke-width="0.4"/>
<line x1="583.5" y1="466.42" x2="583.5" y2="533.5" stroke="#52e052" stroke-width="0.4"/>
<line x1="600.5" y1="502.7" x2="600.5" y2="533.5" stroke="#52e052" stroke-width="0.4"/>
<text x="438.2" y="534" font-size="4.97" fill="#404040" font-family="&quot;Liberation Sans&quot;,sans-serif" text-anchor="end" textLength="2.3" lengthAdjust="spacingAndGlyphs">0</text>
<text x="438.2" y="518" font-size="4.97" fill="#404040" font-family="&quot;Liberation Sans&quot;,sans-serif" text-anchor="end" textLength="2.3" lengthAdjust="spacingAndGlyphs">3</text>
<text x="438.2" y="503" font-size="4.97" fill="#404040" font-family="&quot;Liberation Sans&quot;,sans-serif" text-anchor="end" textLength="2.3" lengthAdjust="spacingAndGlyphs">6</text>
<text x="438.2" y="487" font-size="4.97" fill="#404040" font-family="&quot;Liberation Sans&quot;,sans-serif" text-anchor="end" textLength="2.3" lengthAdjust="spacingAndGlyphs">9</text>
<text x="438.2" y="471" font-size="4.97" fill="#404040" font-family="&quot;Liberation Sans&quot;,sans-serif" text-anchor="end" textLength="4.4" lengthAdjust="spacingAndGlyphs">12</text>
<text x="438.2" y="456" font-size="4.97" fill="#404040" font-family="&quot;Liberation Sans&quot;,sans-serif" text-anchor="end" textLength="4.4" lengthAdjust="spacingAndGlyphs">15</text>
<text x="438.2" y="440" font-size="4.97" fill="#404040" font-family="&quot;Liberation Sans&quot;,sans-serif" text-anchor="end" textLength="4.4" lengthAdjust="spacingAndGlyphs">18</text>
<text x="438.2" y="425" font-size="4.97" fill="#404040" font-family="&quot;Liberation Sans&quot;,sans-serif" text-anchor="end" textLength="4.4" lengthAdjust="spacingAndGlyphs">21</text>
<text x="438.2" y="409" font-size="4.97" fill="#404040" font-family="&quot;Liberation Sans&quot;,sans-serif" text-anchor="end" textLength="4.4" lengthAdjust="spacingAndGlyphs">24</text>
<text x="438.2" y="394" font-size="4.97" fill="#404040" font-family="&quot;Liberation Sans&quot;,sans-serif" text-anchor="end" textLength="4.4" lengthAdjust="spacingAndGlyphs">27</text>
<text x="438.2" y="382" font-size="4.97" fill="#404040" font-family="&quot;Liberation Sans&quot;,sans-serif" text-anchor="end" textLength="4.4" lengthAdjust="spacingAndGlyphs">30</text>
<text x="456" y="546.45" font-size="4.64" fill="#404040" font-family="&quot;Liberation Sans&quot;,sans-serif" text-anchor="middle" textLength="12" lengthAdjust="spacingAndGlyphs" transform="rotate(-30 456 544.8)">461.40</text>
<text x="473" y="546.45" font-size="4.64" fill="#404040" font-family="&quot;Liberation Sans&quot;,sans-serif" text-anchor="middle" textLength="12" lengthAdjust="spacingAndGlyphs" transform="rotate(-30 473 544.8)">504.20</text>
<text x="490" y="546.45" font-size="4.64" fill="#404040" font-family="&quot;Liberation Sans&quot;,sans-serif" text-anchor="middle" textLength="12" lengthAdjust="spacingAndGlyphs" transform="rotate(-30 490 544.8)">547.00</text>
<text x="507" y="546.45" font-size="4.64" fill="#404040" font-family="&quot;Liberation Sans&quot;,sans-serif" text-anchor="middle" textLength="12" lengthAdjust="spacingAndGlyphs" transform="rotate(-30 507 544.8)">589.80</text>
<text x="524" y="546.45" font-size="4.64" fill="#404040" font-family="&quot;Liberation Sans&quot;,sans-serif" text-anchor="middle" textLength="12" lengthAdjust="spacingAndGlyphs" transform="rotate(-30 524 544.8)">632.60</text>
<text x="541" y="546.45" font-size="4.64" fill="#404040" font-family="&quot;Liberation Sans&quot;,sans-serif" text-anchor="middle" textLength="12" lengthAdjust="spacingAndGlyphs" transform="rotate(-30 541 544.8)">675.40</text>
<text x="558" y="546.45" font-size="4.64" fill="#404040" font-family="&quot;Liberation Sans&quot;,sans-serif" text-anchor="middle" textLength="12" lengthAdjust="spacingAndGlyphs" transform="rotate(-30 558 544.8)">718.20</text>
<text x="575" y="546.45" font-size="4.64" fill="#404040" font-family="&quot;Liberation Sans&quot;,sans-serif" text-anchor="middle" textLength="12" lengthAdjust="spacingAndGlyphs" transform="rotate(-30 575 544.8)">761.00</text>
<text x="592" y="546.45" font-size="4.64" fill="#404040" font-family="&quot;Liberation Sans&quot;,sans-serif" text-anchor="middle" textLength="12" lengthAdjust="spacingAndGlyphs" transform="rotate(-30 592 544.8)">803.80</text>
<text x="609" y="546.45" font-size="4.64" fill="#404040" font-family="&quot;Liberation Sans&quot;,sans-serif" text-anchor="middle" textLength="12" lengthAdjust="spacingAndGlyphs" transform="rotate(-30 609 544.8)">846.60</text>
<rect x="450" y="559.4" width="5.3" height="5.3" fill="#fff" stroke="#8a8a8a" stroke-width="0.5"/>
<line x1="451.1" y1="562.05" x2="454.2" y2="562.05" stroke="#777" stroke-width="0.5"/>
<rect x="609.3" y="559.4" width="5.3" height="5.3" fill="#fff" stroke="#8a8a8a" stroke-width="0.5"/>
<line x1="610.4" y1="562.05" x2="613.5" y2="562.05" stroke="#777" stroke-width="0.5"/>
<line x1="611.95" y1="560.5" x2="611.95" y2="563.6" stroke="#777" stroke-width="0.5"/>
<rect x="418.8" y="572.3" width="201.7" height="6.3" fill="#fff" stroke="#d0d0d0" stroke-width="0.5"/>
<path d="M420.8 574.6 L421.9 575.4 L420.8 576.2 Z" fill="#222" stroke="#222" stroke-width="0.2"/>
<text x="424.8" y="577" font-size="4.97" fill="#404040" font-family="&quot;Liberation Sans&quot;,sans-serif" textLength="20.6" lengthAdjust="spacingAndGlyphs">Parameters</text>
<rect x="203.5" y="584" width="423.1" height="8.6" fill="#f0f0f0"/>
<line x1="203.5" y1="583.8" x2="626.6" y2="583.8" stroke="#dcdcdc" stroke-width="0.5"/>
<rect x="238.8" y="584" width="18.7" height="8.8" fill="#fff"/>
<line x1="238.8" y1="584.3" x2="238.8" y2="592.4" stroke="#d0d0d0" stroke-width="0.5"/>
<line x1="257.5" y1="584.3" x2="257.5" y2="592.4" stroke="#d0d0d0" stroke-width="0.5"/>
<line x1="283.5" y1="584.3" x2="283.5" y2="592.4" stroke="#d0d0d0" stroke-width="0.5"/>
<text x="206.3" y="590" font-size="5.18" fill="#1c1c1c" font-family="&quot;Liberation Sans&quot;,sans-serif" textLength="30" lengthAdjust="spacingAndGlyphs">AFE Connection</text>
<text x="240.5" y="590" font-size="5.18" fill="#404040" font-family="&quot;Liberation Sans&quot;,sans-serif" textLength="15" lengthAdjust="spacingAndGlyphs">Monitor</text>
<text x="260.5" y="590" font-size="5.18" fill="#1c1c1c" font-family="&quot;Liberation Sans&quot;,sans-serif" textLength="21.3" lengthAdjust="spacingAndGlyphs">Application</text>
<rect x="629.3" y="283.3" width="255.3" height="309.7" fill="#fff" stroke="#d4d4d4" stroke-width="0.6"/>
<rect x="629.5" y="283.4" width="254.9" height="8.2" fill="#f0f0f0"/>
<line x1="629.5" y1="283.3" x2="884.4" y2="283.3" stroke="#d9d9d9" stroke-width="0.6"/>
<rect x="629.5" y="283.5" width="51.8" height="8.5" fill="#fff"/>
<line x1="629.5" y1="283.6" x2="681.3" y2="283.6" stroke="#8a8a8a" stroke-width="0.8"/>
<line x1="681.3" y1="283.5" x2="681.3" y2="291.6" stroke="#c8c8c8" stroke-width="0.5"/>
<line x1="681.3" y1="291.7" x2="884.4" y2="291.7" stroke="#e0e0e0" stroke-width="0.5"/>
<rect x="631.4" y="285.8" width="4" height="4" fill="#fff" stroke="#5a7fb5" stroke-width="0.5"/>
<line x1="631.4" y1="286.4" x2="635.4" y2="286.4" stroke="#5a7fb5" stroke-width="0.9"/>
<text x="637.7" y="290" font-size="5.18" fill="#303030" font-family="&quot;Liberation Sans&quot;,sans-serif" textLength="34.3" lengthAdjust="spacingAndGlyphs">AFE Raw Data (QE)</text>
<line x1="675.7" y1="286.5" x2="678.3" y2="289.1" stroke="#777" stroke-width="0.5"/>
<line x1="675.7" y1="289.1" x2="678.3" y2="286.5" stroke="#777" stroke-width="0.5"/>
<rect x="868.6" y="285.2" width="3.8" height="1.2" fill="#fafafa" stroke="#8a8a8a" stroke-width="0.45"/>
<rect x="877" y="285.2" width="3.8" height="3.6" fill="#fafafa" stroke="#5a5a5a" stroke-width="0.5"/>
<line x1="877" y1="285.6" x2="880.8" y2="285.6" stroke="#5a5a5a" stroke-width="0.8"/>
<rect x="633" y="298.6" width="246.8" height="12.1" fill="none" stroke="#dedede" stroke-width="0.5" rx="0.6"/>
<rect x="635.4" y="297.6" width="30.6" height="2" fill="#fff"/>
<text x="636.2" y="301" font-size="5.29" fill="#303030" font-family="&quot;Liberation Sans&quot;,sans-serif" textLength="29" lengthAdjust="spacingAndGlyphs">Channel setting</text>
<rect x="636.2" y="303.2" width="4.4" height="4.4" fill="#fff" stroke="#5a5a5a" stroke-width="0.5"/>
<path d="M637.1 305.4 L638.05 306.63 L639.9 304.08" fill="none" stroke="#3a3a3a" stroke-width="0.55"/>
<text x="641.9" y="307" font-size="4.97" fill="#303030" font-family="&quot;Liberation Sans&quot;,sans-serif" textLength="7.8" lengthAdjust="spacingAndGlyphs">CH0</text>
<rect x="653.3" y="303.2" width="4.4" height="4.4" fill="#fff" stroke="#bcbcbc" stroke-width="0.5"/>
<path d="M654.2 305.4 L655.15 306.63 L657 304.08" fill="none" stroke="#c4c4c4" stroke-width="0.55"/>
<text x="659" y="307" font-size="4.97" fill="#b4b4b4" font-family="&quot;Liberation Sans&quot;,sans-serif" textLength="7.8" lengthAdjust="spacingAndGlyphs">CH1</text>
<rect x="670.4" y="303.2" width="4.4" height="4.4" fill="#fff" stroke="#bcbcbc" stroke-width="0.5"/>
<path d="M671.3 305.4 L672.25 306.63 L674.1 304.08" fill="none" stroke="#c4c4c4" stroke-width="0.55"/>
<text x="676.1" y="307" font-size="4.97" fill="#b4b4b4" font-family="&quot;Liberation Sans&quot;,sans-serif" textLength="7.8" lengthAdjust="spacingAndGlyphs">CH2</text>
<rect x="687.5" y="303.2" width="4.4" height="4.4" fill="#fff" stroke="#bcbcbc" stroke-width="0.5"/>
<path d="M688.4 305.4 L689.35 306.63 L691.2 304.08" fill="none" stroke="#c4c4c4" stroke-width="0.55"/>
<text x="693.2" y="307" font-size="4.97" fill="#b4b4b4" font-family="&quot;Liberation Sans&quot;,sans-serif" textLength="7.8" lengthAdjust="spacingAndGlyphs">CH3</text>
<rect x="704.6" y="303.2" width="4.4" height="4.4" fill="#fff" stroke="#bcbcbc" stroke-width="0.5"/>
<path d="M705.5 305.4 L706.45 306.63 L708.3 304.08" fill="none" stroke="#c4c4c4" stroke-width="0.55"/>
<text x="710.3" y="307" font-size="4.97" fill="#b4b4b4" font-family="&quot;Liberation Sans&quot;,sans-serif" textLength="7.8" lengthAdjust="spacingAndGlyphs">CH4</text>
<rect x="721.7" y="303.2" width="4.4" height="4.4" fill="#fff" stroke="#bcbcbc" stroke-width="0.5"/>
<path d="M722.6 305.4 L723.55 306.63 L725.4 304.08" fill="none" stroke="#c4c4c4" stroke-width="0.55"/>
<text x="727.4" y="307" font-size="4.97" fill="#b4b4b4" font-family="&quot;Liberation Sans&quot;,sans-serif" textLength="7.8" lengthAdjust="spacingAndGlyphs">CH5</text>
<rect x="738.8" y="303.2" width="4.4" height="4.4" fill="#fff" stroke="#bcbcbc" stroke-width="0.5"/>
<path d="M739.7 305.4 L740.65 306.63 L742.5 304.08" fill="none" stroke="#c4c4c4" stroke-width="0.55"/>
<text x="744.5" y="307" font-size="4.97" fill="#b4b4b4" font-family="&quot;Liberation Sans&quot;,sans-serif" textLength="7.8" lengthAdjust="spacingAndGlyphs">CH6</text>
<rect x="755.9" y="303.2" width="4.4" height="4.4" fill="#fff" stroke="#bcbcbc" stroke-width="0.5"/>
<path d="M756.8 305.4 L757.75 306.63 L759.6 304.08" fill="none" stroke="#c4c4c4" stroke-width="0.55"/>
<text x="761.6" y="307" font-size="4.97" fill="#b4b4b4" font-family="&quot;Liberation Sans&quot;,sans-serif" textLength="7.8" lengthAdjust="spacingAndGlyphs">CH7</text>
<rect x="633" y="316" width="246.8" height="22.7" fill="none" stroke="#dedede" stroke-width="0.5" rx="0.6"/>
<rect x="635.4" y="315" width="38.6" height="2" fill="#fff"/>
<text x="636.2" y="318" font-size="5.29" fill="#303030" font-family="&quot;Liberation Sans&quot;,sans-serif" textLength="37" lengthAdjust="spacingAndGlyphs">Copy/Export setting</text>
<rect x="636.2" y="322.2" width="4.4" height="4.4" fill="#fff" stroke="#5a5a5a" stroke-width="0.5"/>
<path d="M637.1 324.4 L638.05 325.63 L639.9 323.08" fill="none" stroke="#3a3a3a" stroke-width="0.55"/>
<text x="641.9" y="326" font-size="4.97" fill="#303030" font-family="&quot;Liberation Sans&quot;,sans-serif" textLength="6.2" lengthAdjust="spacingAndGlyphs">No.</text>
<rect x="652" y="322.2" width="4.4" height="4.4" fill="#fff" stroke="#5a5a5a" stroke-width="0.5"/>
<path d="M652.9 324.4 L653.85 325.63 L655.7 323.08" fill="none" stroke="#3a3a3a" stroke-width="0.55"/>
<text x="657.7" y="326" font-size="4.97" fill="#303030" font-family="&quot;Liberation Sans&quot;,sans-serif" textLength="17.4" lengthAdjust="spacingAndGlyphs">Time[ms]</text>
<rect x="678.2" y="322.2" width="4.4" height="4.4" fill="#fff" stroke="#5a5a5a" stroke-width="0.5"/>
<path d="M679.1 324.4 L680.05 325.63 L681.9 323.08" fill="none" stroke="#3a3a3a" stroke-width="0.55"/>
<text x="683.9" y="326" font-size="4.97" fill="#303030" font-family="&quot;Liberation Sans&quot;,sans-serif" textLength="7.8" lengthAdjust="spacingAndGlyphs">OVF</text>
<rect x="695.3" y="322.2" width="4.4" height="4.4" fill="#fff" stroke="#5a5a5a" stroke-width="0.5"/>
<path d="M696.2 324.4 L697.15 325.63 L699 323.08" fill="none" stroke="#3a3a3a" stroke-width="0.55"/>
<text x="701" y="326" font-size="4.91" fill="#303030" font-family="&quot;Liberation Sans&quot;,sans-serif" textLength="7.4" lengthAdjust="spacingAndGlyphs">ERR</text>
<text x="636.2" y="336" font-size="5.08" fill="#303030" font-family="&quot;Liberation Sans&quot;,sans-serif" textLength="101.3" lengthAdjust="spacingAndGlyphs">Not select &quot;Data&quot; column, and &quot;Data&quot; is always copied.</text>
<rect x="633" y="343" width="72.1" height="7.3" fill="#fff" stroke="#b9b9b9" stroke-width="0.5"/>
<text x="634.4" y="349" font-size="4.86" fill="#404040" font-family="&quot;Liberation Sans&quot;,sans-serif" textLength="7.6" lengthAdjust="spacingAndGlyphs">CH0</text>
<rect x="698.6" y="343.3" width="6.2" height="6.7" fill="#e1e1e1" stroke="#c0c0c0" stroke-width="0.4"/>
<path d="M700.6 346.15 L701.7 347.25 L702.8 346.15" fill="none" stroke="#555" stroke-width="0.5"/>
<rect x="705.1" y="343" width="72.1" height="7.3" fill="#fff" stroke="#b9b9b9" stroke-width="0.5"/>
<rect x="770.7" y="343.3" width="6.2" height="6.7" fill="#e1e1e1" stroke="#c0c0c0" stroke-width="0.4"/>
<path d="M772.7 346.15 L773.8 347.25 L774.9 346.15" fill="none" stroke="#555" stroke-width="0.5"/>
<rect x="777.2" y="343" width="72.1" height="7.3" fill="#fff" stroke="#b9b9b9" stroke-width="0.5"/>
<rect x="842.8" y="343.3" width="6.2" height="6.7" fill="#e1e1e1" stroke="#c0c0c0" stroke-width="0.4"/>
<path d="M844.8 346.15 L845.9 347.25 L847 346.15" fill="none" stroke="#555" stroke-width="0.5"/>
<rect x="849.3" y="343" width="30.5" height="7.3" fill="#fff" stroke="#b9b9b9" stroke-width="0.5"/>
<rect x="633" y="352.4" width="246.8" height="228.4" fill="#fff" stroke="#c6c6c6" stroke-width="0.55"/>
<clipPath id="tclip"><rect x="633" y="352.6" width="240.6" height="223"/></clipPath>
<g clip-path="url(#tclip)">
<rect x="706.2" y="361.8" width="71.8" height="214.2" fill="#f0f0f0"/>
<rect x="850.2" y="361.8" width="23.8" height="214.2" fill="#f0f0f0"/>
<text x="639.25" y="359" font-size="4.86" fill="#404040" font-family="&quot;Liberation Sans&quot;,sans-serif" text-anchor="middle" textLength="6" lengthAdjust="spacingAndGlyphs">No.</text>
<line x1="645.5" y1="352.6" x2="645.5" y2="576" stroke="#e3e6f0" stroke-width="0.55"/>
<text x="656.4" y="359" font-size="4.86" fill="#404040" font-family="&quot;Liberation Sans&quot;,sans-serif" text-anchor="middle" textLength="16" lengthAdjust="spacingAndGlyphs">Time[ms]</text>
<line x1="667.3" y1="352.6" x2="667.3" y2="576" stroke="#e3e6f0" stroke-width="0.55"/>
<text x="674.3" y="359" font-size="4.86" fill="#404040" font-family="&quot;Liberation Sans&quot;,sans-serif" text-anchor="middle" textLength="8.4" lengthAdjust="spacingAndGlyphs">Data</text>
<line x1="681.3" y1="352.6" x2="681.3" y2="576" stroke="#e3e6f0" stroke-width="0.55"/>
<text x="687.65" y="359" font-size="4.86" fill="#404040" font-family="&quot;Liberation Sans&quot;,sans-serif" text-anchor="middle" textLength="7.6" lengthAdjust="spacingAndGlyphs">OVF</text>
<line x1="694" y1="352.6" x2="694" y2="576" stroke="#e3e6f0" stroke-width="0.55"/>
<text x="700.1" y="359" font-size="4.77" fill="#404040" font-family="&quot;Liberation Sans&quot;,sans-serif" text-anchor="middle" textLength="7.2" lengthAdjust="spacingAndGlyphs">ERR</text>
<line x1="706.2" y1="352.6" x2="706.2" y2="576" stroke="#e3e6f0" stroke-width="0.55"/>
<text x="712.45" y="359" font-size="4.86" fill="#404040" font-family="&quot;Liberation Sans&quot;,sans-serif" text-anchor="middle" textLength="6" lengthAdjust="spacingAndGlyphs">No.</text>
<line x1="718.7" y1="352.6" x2="718.7" y2="576" stroke="#e3e6f0" stroke-width="0.55"/>
<text x="729.6" y="359" font-size="4.86" fill="#404040" font-family="&quot;Liberation Sans&quot;,sans-serif" text-anchor="middle" textLength="16" lengthAdjust="spacingAndGlyphs">Time[ms]</text>
<line x1="740.5" y1="352.6" x2="740.5" y2="576" stroke="#e3e6f0" stroke-width="0.55"/>
<text x="747.5" y="359" font-size="4.86" fill="#404040" font-family="&quot;Liberation Sans&quot;,sans-serif" text-anchor="middle" textLength="8.4" lengthAdjust="spacingAndGlyphs">Data</text>
<line x1="754.5" y1="352.6" x2="754.5" y2="576" stroke="#e3e6f0" stroke-width="0.55"/>
<text x="760.85" y="359" font-size="4.86" fill="#404040" font-family="&quot;Liberation Sans&quot;,sans-serif" text-anchor="middle" textLength="7.6" lengthAdjust="spacingAndGlyphs">OVF</text>
<line x1="767.2" y1="352.6" x2="767.2" y2="576" stroke="#e3e6f0" stroke-width="0.55"/>
<text x="773.3" y="359" font-size="4.77" fill="#404040" font-family="&quot;Liberation Sans&quot;,sans-serif" text-anchor="middle" textLength="7.2" lengthAdjust="spacingAndGlyphs">ERR</text>
<line x1="779.4" y1="352.6" x2="779.4" y2="576" stroke="#e3e6f0" stroke-width="0.55"/>
<text x="785.65" y="359" font-size="4.86" fill="#404040" font-family="&quot;Liberation Sans&quot;,sans-serif" text-anchor="middle" textLength="6" lengthAdjust="spacingAndGlyphs">No.</text>
<line x1="791.9" y1="352.6" x2="791.9" y2="576" stroke="#e3e6f0" stroke-width="0.55"/>
<text x="802.8" y="359" font-size="4.86" fill="#404040" font-family="&quot;Liberation Sans&quot;,sans-serif" text-anchor="middle" textLength="16" lengthAdjust="spacingAndGlyphs">Time[ms]</text>
<line x1="813.7" y1="352.6" x2="813.7" y2="576" stroke="#e3e6f0" stroke-width="0.55"/>
<text x="820.7" y="359" font-size="4.86" fill="#404040" font-family="&quot;Liberation Sans&quot;,sans-serif" text-anchor="middle" textLength="8.4" lengthAdjust="spacingAndGlyphs">Data</text>
<line x1="827.7" y1="352.6" x2="827.7" y2="576" stroke="#e3e6f0" stroke-width="0.55"/>
<text x="834.05" y="359" font-size="4.86" fill="#404040" font-family="&quot;Liberation Sans&quot;,sans-serif" text-anchor="middle" textLength="7.6" lengthAdjust="spacingAndGlyphs">OVF</text>
<line x1="840.4" y1="352.6" x2="840.4" y2="576" stroke="#e3e6f0" stroke-width="0.55"/>
<text x="846.5" y="359" font-size="4.77" fill="#404040" font-family="&quot;Liberation Sans&quot;,sans-serif" text-anchor="middle" textLength="7.2" lengthAdjust="spacingAndGlyphs">ERR</text>
<line x1="852.6" y1="352.6" x2="852.6" y2="576" stroke="#e3e6f0" stroke-width="0.55"/>
<text x="858.85" y="359" font-size="4.86" fill="#404040" font-family="&quot;Liberation Sans&quot;,sans-serif" text-anchor="middle" textLength="6" lengthAdjust="spacingAndGlyphs">No.</text>
<line x1="865.1" y1="352.6" x2="865.1" y2="576" stroke="#e3e6f0" stroke-width="0.55"/>
<text x="876" y="359" font-size="4.86" fill="#404040" font-family="&quot;Liberation Sans&quot;,sans-serif" text-anchor="middle" textLength="16" lengthAdjust="spacingAndGlyphs">Time[ms]</text>
<line x1="886.9" y1="352.6" x2="886.9" y2="576" stroke="#e3e6f0" stroke-width="0.55"/>
<text x="893.9" y="359" font-size="4.86" fill="#404040" font-family="&quot;Liberation Sans&quot;,sans-serif" text-anchor="middle" textLength="8.4" lengthAdjust="spacingAndGlyphs">Data</text>
<line x1="900.9" y1="352.6" x2="900.9" y2="576" stroke="#e3e6f0" stroke-width="0.55"/>
<text x="907.25" y="359" font-size="4.86" fill="#404040" font-family="&quot;Liberation Sans&quot;,sans-serif" text-anchor="middle" textLength="7.6" lengthAdjust="spacingAndGlyphs">OVF</text>
<line x1="913.6" y1="352.6" x2="913.6" y2="576" stroke="#e3e6f0" stroke-width="0.55"/>
<text x="919.7" y="359" font-size="4.77" fill="#404040" font-family="&quot;Liberation Sans&quot;,sans-serif" text-anchor="middle" textLength="7.2" lengthAdjust="spacingAndGlyphs">ERR</text>
<line x1="925.8" y1="352.6" x2="925.8" y2="576" stroke="#e3e6f0" stroke-width="0.55"/>
<line x1="633.3" y1="361.8" x2="873.6" y2="361.8" stroke="#ececec" stroke-width="0.5"/>
<line x1="633.3" y1="368.55" x2="873.6" y2="368.55" stroke="#ececec" stroke-width="0.5"/>
<line x1="633.3" y1="375.29" x2="873.6" y2="375.29" stroke="#ececec" stroke-width="0.5"/>
<line x1="633.3" y1="382.04" x2="873.6" y2="382.04" stroke="#ececec" stroke-width="0.5"/>
<line x1="633.3" y1="388.79" x2="873.6" y2="388.79" stroke="#ececec" stroke-width="0.5"/>
<line x1="633.3" y1="395.54" x2="873.6" y2="395.54" stroke="#ececec" stroke-width="0.5"/>
<line x1="633.3" y1="402.28" x2="873.6" y2="402.28" stroke="#ececec" stroke-width="0.5"/>
<line x1="633.3" y1="409.03" x2="873.6" y2="409.03" stroke="#ececec" stroke-width="0.5"/>
<line x1="633.3" y1="415.78" x2="873.6" y2="415.78" stroke="#ececec" stroke-width="0.5"/>
<line x1="633.3" y1="422.52" x2="873.6" y2="422.52" stroke="#ececec" stroke-width="0.5"/>
<line x1="633.3" y1="429.27" x2="873.6" y2="429.27" stroke="#ececec" stroke-width="0.5"/>
<line x1="633.3" y1="436.02" x2="873.6" y2="436.02" stroke="#ececec" stroke-width="0.5"/>
<line x1="633.3" y1="442.76" x2="873.6" y2="442.76" stroke="#ececec" stroke-width="0.5"/>
<line x1="633.3" y1="449.51" x2="873.6" y2="449.51" stroke="#ececec" stroke-width="0.5"/>
<line x1="633.3" y1="456.26" x2="873.6" y2="456.26" stroke="#ececec" stroke-width="0.5"/>
<line x1="633.3" y1="463.01" x2="873.6" y2="463.01" stroke="#ececec" stroke-width="0.5"/>
<line x1="633.3" y1="469.75" x2="873.6" y2="469.75" stroke="#ececec" stroke-width="0.5"/>
<line x1="633.3" y1="476.5" x2="873.6" y2="476.5" stroke="#ececec" stroke-width="0.5"/>
<line x1="633.3" y1="483.25" x2="873.6" y2="483.25" stroke="#ececec" stroke-width="0.5"/>
<line x1="633.3" y1="489.99" x2="873.6" y2="489.99" stroke="#ececec" stroke-width="0.5"/>
<line x1="633.3" y1="496.74" x2="873.6" y2="496.74" stroke="#ececec" stroke-width="0.5"/>
<line x1="633.3" y1="503.49" x2="873.6" y2="503.49" stroke="#ececec" stroke-width="0.5"/>
<line x1="633.3" y1="510.23" x2="873.6" y2="510.23" stroke="#ececec" stroke-width="0.5"/>
<line x1="633.3" y1="516.98" x2="873.6" y2="516.98" stroke="#ececec" stroke-width="0.5"/>
<line x1="633.3" y1="523.73" x2="873.6" y2="523.73" stroke="#ececec" stroke-width="0.5"/>
<line x1="633.3" y1="530.48" x2="873.6" y2="530.48" stroke="#ececec" stroke-width="0.5"/>
<line x1="633.3" y1="537.22" x2="873.6" y2="537.22" stroke="#ececec" stroke-width="0.5"/>
<line x1="633.3" y1="543.97" x2="873.6" y2="543.97" stroke="#ececec" stroke-width="0.5"/>
<line x1="633.3" y1="550.72" x2="873.6" y2="550.72" stroke="#ececec" stroke-width="0.5"/>
<line x1="633.3" y1="557.46" x2="873.6" y2="557.46" stroke="#ececec" stroke-width="0.5"/>
<line x1="633.3" y1="564.21" x2="873.6" y2="564.21" stroke="#ececec" stroke-width="0.5"/>
<line x1="633.3" y1="570.96" x2="873.6" y2="570.96" stroke="#ececec" stroke-width="0.5"/>
<text x="636.2" y="367" font-size="4.75" fill="#404040" font-family="&quot;Liberation Sans&quot;,sans-serif" textLength="2.3" lengthAdjust="spacingAndGlyphs">0</text>
<text x="648" y="367" font-size="4.75" fill="#404040" font-family="&quot;Liberation Sans&quot;,sans-serif" textLength="2.3" lengthAdjust="spacingAndGlyphs">0</text>
<text x="669.8" y="367" font-size="4.75" fill="#404040" font-family="&quot;Liberation Sans&quot;,sans-serif" textLength="7.4" lengthAdjust="spacingAndGlyphs">29...</text>
<text x="636.2" y="374" font-size="4.75" fill="#404040" font-family="&quot;Liberation Sans&quot;,sans-serif" textLength="2.3" lengthAdjust="spacingAndGlyphs">1</text>
<text x="648" y="374" font-size="4.75" fill="#404040" font-family="&quot;Liberation Sans&quot;,sans-serif" textLength="9.9" lengthAdjust="spacingAndGlyphs">1.024</text>
<text x="669.8" y="374" font-size="4.75" fill="#404040" font-family="&quot;Liberation Sans&quot;,sans-serif" textLength="7.4" lengthAdjust="spacingAndGlyphs">32...</text>
<text x="636.2" y="380" font-size="4.75" fill="#404040" font-family="&quot;Liberation Sans&quot;,sans-serif" textLength="2.3" lengthAdjust="spacingAndGlyphs">2</text>
<text x="648" y="380" font-size="4.75" fill="#404040" font-family="&quot;Liberation Sans&quot;,sans-serif" textLength="9.9" lengthAdjust="spacingAndGlyphs">2.048</text>
<text x="669.8" y="380" font-size="4.75" fill="#404040" font-family="&quot;Liberation Sans&quot;,sans-serif" textLength="7.4" lengthAdjust="spacingAndGlyphs">35...</text>
<text x="636.2" y="387" font-size="4.75" fill="#404040" font-family="&quot;Liberation Sans&quot;,sans-serif" textLength="2.3" lengthAdjust="spacingAndGlyphs">3</text>
<text x="648" y="387" font-size="4.75" fill="#404040" font-family="&quot;Liberation Sans&quot;,sans-serif" textLength="9.9" lengthAdjust="spacingAndGlyphs">3.072</text>
<text x="669.8" y="387" font-size="4.75" fill="#404040" font-family="&quot;Liberation Sans&quot;,sans-serif" textLength="7.4" lengthAdjust="spacingAndGlyphs">38...</text>
<text x="636.2" y="394" font-size="4.75" fill="#404040" font-family="&quot;Liberation Sans&quot;,sans-serif" textLength="2.3" lengthAdjust="spacingAndGlyphs">4</text>
<text x="648" y="394" font-size="4.75" fill="#404040" font-family="&quot;Liberation Sans&quot;,sans-serif" textLength="9.9" lengthAdjust="spacingAndGlyphs">4.096</text>
<text x="669.8" y="394" font-size="4.75" fill="#404040" font-family="&quot;Liberation Sans&quot;,sans-serif" textLength="7.4" lengthAdjust="spacingAndGlyphs">40...</text>
<text x="636.2" y="401" font-size="4.75" fill="#404040" font-family="&quot;Liberation Sans&quot;,sans-serif" textLength="2.3" lengthAdjust="spacingAndGlyphs">5</text>
<text x="648" y="401" font-size="4.75" fill="#404040" font-family="&quot;Liberation Sans&quot;,sans-serif" textLength="7.7" lengthAdjust="spacingAndGlyphs">5.12</text>
<text x="669.8" y="401" font-size="4.75" fill="#404040" font-family="&quot;Liberation Sans&quot;,sans-serif" textLength="7.4" lengthAdjust="spacingAndGlyphs">42...</text>
<text x="636.2" y="407" font-size="4.75" fill="#404040" font-family="&quot;Liberation Sans&quot;,sans-serif" textLength="2.3" lengthAdjust="spacingAndGlyphs">6</text>
<text x="648" y="407" font-size="4.75" fill="#404040" font-family="&quot;Liberation Sans&quot;,sans-serif" textLength="9.9" lengthAdjust="spacingAndGlyphs">6.144</text>
<text x="669.8" y="407" font-size="4.75" fill="#404040" font-family="&quot;Liberation Sans&quot;,sans-serif" textLength="7.4" lengthAdjust="spacingAndGlyphs">45...</text>
<text x="636.2" y="414" font-size="4.75" fill="#404040" font-family="&quot;Liberation Sans&quot;,sans-serif" textLength="2.3" lengthAdjust="spacingAndGlyphs">7</text>
<text x="648" y="414" font-size="4.75" fill="#404040" font-family="&quot;Liberation Sans&quot;,sans-serif" textLength="9.9" lengthAdjust="spacingAndGlyphs">7.168</text>
<text x="669.8" y="414" font-size="4.75" fill="#404040" font-family="&quot;Liberation Sans&quot;,sans-serif" textLength="7.4" lengthAdjust="spacingAndGlyphs">48...</text>
<text x="636.2" y="421" font-size="4.75" fill="#404040" font-family="&quot;Liberation Sans&quot;,sans-serif" textLength="2.3" lengthAdjust="spacingAndGlyphs">8</text>
<text x="648" y="421" font-size="4.75" fill="#404040" font-family="&quot;Liberation Sans&quot;,sans-serif" textLength="9.9" lengthAdjust="spacingAndGlyphs">8.192</text>
<text x="669.8" y="421" font-size="4.75" fill="#404040" font-family="&quot;Liberation Sans&quot;,sans-serif" textLength="7.4" lengthAdjust="spacingAndGlyphs">52...</text>
<text x="636.2" y="428" font-size="4.75" fill="#404040" font-family="&quot;Liberation Sans&quot;,sans-serif" textLength="2.3" lengthAdjust="spacingAndGlyphs">9</text>
<text x="648" y="428" font-size="4.75" fill="#404040" font-family="&quot;Liberation Sans&quot;,sans-serif" textLength="9.9" lengthAdjust="spacingAndGlyphs">9.216</text>
<text x="669.8" y="428" font-size="4.75" fill="#404040" font-family="&quot;Liberation Sans&quot;,sans-serif" textLength="7.4" lengthAdjust="spacingAndGlyphs">55...</text>
<text x="636.2" y="434" font-size="4.75" fill="#404040" font-family="&quot;Liberation Sans&quot;,sans-serif" textLength="4.4" lengthAdjust="spacingAndGlyphs">10</text>
<text x="648" y="434" font-size="4.75" fill="#404040" font-family="&quot;Liberation Sans&quot;,sans-serif" textLength="9.9" lengthAdjust="spacingAndGlyphs">10.24</text>
<text x="669.8" y="434" font-size="4.75" fill="#404040" font-family="&quot;Liberation Sans&quot;,sans-serif" textLength="7.4" lengthAdjust="spacingAndGlyphs">60...</text>
<text x="636.2" y="441" font-size="4.75" fill="#404040" font-family="&quot;Liberation Sans&quot;,sans-serif" textLength="4.4" lengthAdjust="spacingAndGlyphs">11</text>
<text x="648" y="441" font-size="4.75" fill="#404040" font-family="&quot;Liberation Sans&quot;,sans-serif" textLength="12.1" lengthAdjust="spacingAndGlyphs">11.264</text>
<text x="669.8" y="441" font-size="4.75" fill="#404040" font-family="&quot;Liberation Sans&quot;,sans-serif" textLength="7.4" lengthAdjust="spacingAndGlyphs">65...</text>
<text x="636.2" y="448" font-size="4.75" fill="#404040" font-family="&quot;Liberation Sans&quot;,sans-serif" textLength="4.4" lengthAdjust="spacingAndGlyphs">12</text>
<text x="648" y="448" font-size="4.75" fill="#404040" font-family="&quot;Liberation Sans&quot;,sans-serif" textLength="12.1" lengthAdjust="spacingAndGlyphs">12.288</text>
<text x="669.8" y="448" font-size="4.75" fill="#404040" font-family="&quot;Liberation Sans&quot;,sans-serif" textLength="7.4" lengthAdjust="spacingAndGlyphs">70...</text>
<text x="636.2" y="455" font-size="4.75" fill="#404040" font-family="&quot;Liberation Sans&quot;,sans-serif" textLength="4.4" lengthAdjust="spacingAndGlyphs">13</text>
<text x="648" y="455" font-size="4.75" fill="#404040" font-family="&quot;Liberation Sans&quot;,sans-serif" textLength="12.1" lengthAdjust="spacingAndGlyphs">13.312</text>
<text x="669.8" y="455" font-size="4.75" fill="#404040" font-family="&quot;Liberation Sans&quot;,sans-serif" textLength="7.4" lengthAdjust="spacingAndGlyphs">75...</text>
<text x="636.2" y="461" font-size="4.75" fill="#404040" font-family="&quot;Liberation Sans&quot;,sans-serif" textLength="4.4" lengthAdjust="spacingAndGlyphs">14</text>
<text x="648" y="461" font-size="4.75" fill="#404040" font-family="&quot;Liberation Sans&quot;,sans-serif" textLength="12.1" lengthAdjust="spacingAndGlyphs">14.336</text>
<text x="669.8" y="461" font-size="4.75" fill="#404040" font-family="&quot;Liberation Sans&quot;,sans-serif" textLength="7.4" lengthAdjust="spacingAndGlyphs">81...</text>
<text x="636.2" y="468" font-size="4.75" fill="#404040" font-family="&quot;Liberation Sans&quot;,sans-serif" textLength="4.4" lengthAdjust="spacingAndGlyphs">15</text>
<text x="648" y="468" font-size="4.75" fill="#404040" font-family="&quot;Liberation Sans&quot;,sans-serif" textLength="9.9" lengthAdjust="spacingAndGlyphs">15.36</text>
<text x="669.8" y="468" font-size="4.75" fill="#404040" font-family="&quot;Liberation Sans&quot;,sans-serif" textLength="7.4" lengthAdjust="spacingAndGlyphs">86...</text>
<text x="636.2" y="475" font-size="4.75" fill="#404040" font-family="&quot;Liberation Sans&quot;,sans-serif" textLength="4.4" lengthAdjust="spacingAndGlyphs">16</text>
<text x="648" y="475" font-size="4.75" fill="#404040" font-family="&quot;Liberation Sans&quot;,sans-serif" textLength="12.1" lengthAdjust="spacingAndGlyphs">16.384</text>
<text x="669.8" y="475" font-size="4.75" fill="#404040" font-family="&quot;Liberation Sans&quot;,sans-serif" textLength="7.4" lengthAdjust="spacingAndGlyphs">92...</text>
<text x="636.2" y="482" font-size="4.75" fill="#404040" font-family="&quot;Liberation Sans&quot;,sans-serif" textLength="4.4" lengthAdjust="spacingAndGlyphs">17</text>
<text x="648" y="482" font-size="4.75" fill="#404040" font-family="&quot;Liberation Sans&quot;,sans-serif" textLength="12.1" lengthAdjust="spacingAndGlyphs">17.408</text>
<text x="669.8" y="482" font-size="4.75" fill="#404040" font-family="&quot;Liberation Sans&quot;,sans-serif" textLength="7.4" lengthAdjust="spacingAndGlyphs">98...</text>
<text x="636.2" y="488" font-size="4.75" fill="#404040" font-family="&quot;Liberation Sans&quot;,sans-serif" textLength="4.4" lengthAdjust="spacingAndGlyphs">18</text>
<text x="648" y="488" font-size="4.75" fill="#404040" font-family="&quot;Liberation Sans&quot;,sans-serif" textLength="12.1" lengthAdjust="spacingAndGlyphs">18.432</text>
<text x="669.8" y="488" font-size="4.75" fill="#404040" font-family="&quot;Liberation Sans&quot;,sans-serif" textLength="7.4" lengthAdjust="spacingAndGlyphs">10...</text>
<text x="636.2" y="495" font-size="4.75" fill="#404040" font-family="&quot;Liberation Sans&quot;,sans-serif" textLength="4.4" lengthAdjust="spacingAndGlyphs">19</text>
<text x="648" y="495" font-size="4.75" fill="#404040" font-family="&quot;Liberation Sans&quot;,sans-serif" textLength="12.1" lengthAdjust="spacingAndGlyphs">19.456</text>
<text x="669.8" y="495" font-size="4.75" fill="#404040" font-family="&quot;Liberation Sans&quot;,sans-serif" textLength="7.4" lengthAdjust="spacingAndGlyphs">11...</text>
<text x="636.2" y="502" font-size="4.75" fill="#404040" font-family="&quot;Liberation Sans&quot;,sans-serif" textLength="4.4" lengthAdjust="spacingAndGlyphs">20</text>
<text x="648" y="502" font-size="4.75" fill="#404040" font-family="&quot;Liberation Sans&quot;,sans-serif" textLength="9.9" lengthAdjust="spacingAndGlyphs">20.48</text>
<text x="669.8" y="502" font-size="4.75" fill="#404040" font-family="&quot;Liberation Sans&quot;,sans-serif" textLength="7.4" lengthAdjust="spacingAndGlyphs">11...</text>
<text x="636.2" y="509" font-size="4.75" fill="#404040" font-family="&quot;Liberation Sans&quot;,sans-serif" textLength="4.4" lengthAdjust="spacingAndGlyphs">21</text>
<text x="648" y="509" font-size="4.75" fill="#404040" font-family="&quot;Liberation Sans&quot;,sans-serif" textLength="12.1" lengthAdjust="spacingAndGlyphs">21.504</text>
<text x="669.8" y="509" font-size="4.75" fill="#404040" font-family="&quot;Liberation Sans&quot;,sans-serif" textLength="7.4" lengthAdjust="spacingAndGlyphs">12...</text>
<text x="636.2" y="515" font-size="4.75" fill="#404040" font-family="&quot;Liberation Sans&quot;,sans-serif" textLength="4.4" lengthAdjust="spacingAndGlyphs">22</text>
<text x="648" y="515" font-size="4.75" fill="#404040" font-family="&quot;Liberation Sans&quot;,sans-serif" textLength="12.1" lengthAdjust="spacingAndGlyphs">22.528</text>
<text x="669.8" y="515" font-size="4.75" fill="#404040" font-family="&quot;Liberation Sans&quot;,sans-serif" textLength="7.4" lengthAdjust="spacingAndGlyphs">13...</text>
<text x="636.2" y="522" font-size="4.75" fill="#404040" font-family="&quot;Liberation Sans&quot;,sans-serif" textLength="4.4" lengthAdjust="spacingAndGlyphs">23</text>
<text x="648" y="522" font-size="4.75" fill="#404040" font-family="&quot;Liberation Sans&quot;,sans-serif" textLength="12.1" lengthAdjust="spacingAndGlyphs">23.552</text>
<text x="669.8" y="522" font-size="4.75" fill="#404040" font-family="&quot;Liberation Sans&quot;,sans-serif" textLength="7.4" lengthAdjust="spacingAndGlyphs">14...</text>
<text x="636.2" y="529" font-size="4.75" fill="#404040" font-family="&quot;Liberation Sans&quot;,sans-serif" textLength="4.4" lengthAdjust="spacingAndGlyphs">24</text>
<text x="648" y="529" font-size="4.75" fill="#404040" font-family="&quot;Liberation Sans&quot;,sans-serif" textLength="12.1" lengthAdjust="spacingAndGlyphs">24.576</text>
<text x="669.8" y="529" font-size="4.75" fill="#404040" font-family="&quot;Liberation Sans&quot;,sans-serif" textLength="7.4" lengthAdjust="spacingAndGlyphs">15...</text>
<text x="636.2" y="536" font-size="4.75" fill="#404040" font-family="&quot;Liberation Sans&quot;,sans-serif" textLength="4.4" lengthAdjust="spacingAndGlyphs">25</text>
<text x="648" y="536" font-size="4.75" fill="#404040" font-family="&quot;Liberation Sans&quot;,sans-serif" textLength="7.7" lengthAdjust="spacingAndGlyphs">25.6</text>
<text x="669.8" y="536" font-size="4.75" fill="#404040" font-family="&quot;Liberation Sans&quot;,sans-serif" textLength="7.4" lengthAdjust="spacingAndGlyphs">16...</text>
<text x="636.2" y="542" font-size="4.75" fill="#404040" font-family="&quot;Liberation Sans&quot;,sans-serif" textLength="4.4" lengthAdjust="spacingAndGlyphs">26</text>
<text x="648" y="542" font-size="4.75" fill="#404040" font-family="&quot;Liberation Sans&quot;,sans-serif" textLength="12.1" lengthAdjust="spacingAndGlyphs">26.624</text>
<text x="669.8" y="542" font-size="4.75" fill="#404040" font-family="&quot;Liberation Sans&quot;,sans-serif" textLength="7.4" lengthAdjust="spacingAndGlyphs">17...</text>
<text x="636.2" y="549" font-size="4.75" fill="#404040" font-family="&quot;Liberation Sans&quot;,sans-serif" textLength="4.4" lengthAdjust="spacingAndGlyphs">27</text>
<text x="648" y="549" font-size="4.75" fill="#404040" font-family="&quot;Liberation Sans&quot;,sans-serif" textLength="12.1" lengthAdjust="spacingAndGlyphs">27.648</text>
<text x="669.8" y="549" font-size="4.75" fill="#404040" font-family="&quot;Liberation Sans&quot;,sans-serif" textLength="7.4" lengthAdjust="spacingAndGlyphs">18...</text>
<text x="636.2" y="556" font-size="4.75" fill="#404040" font-family="&quot;Liberation Sans&quot;,sans-serif" textLength="4.4" lengthAdjust="spacingAndGlyphs">28</text>
<text x="648" y="556" font-size="4.75" fill="#404040" font-family="&quot;Liberation Sans&quot;,sans-serif" textLength="12.1" lengthAdjust="spacingAndGlyphs">28.672</text>
<text x="669.8" y="556" font-size="4.75" fill="#404040" font-family="&quot;Liberation Sans&quot;,sans-serif" textLength="7.4" lengthAdjust="spacingAndGlyphs">19...</text>
<text x="636.2" y="563" font-size="4.75" fill="#404040" font-family="&quot;Liberation Sans&quot;,sans-serif" textLength="4.4" lengthAdjust="spacingAndGlyphs">29</text>
<text x="648" y="563" font-size="4.75" fill="#404040" font-family="&quot;Liberation Sans&quot;,sans-serif" textLength="12.1" lengthAdjust="spacingAndGlyphs">29.696</text>
<text x="669.8" y="563" font-size="4.75" fill="#404040" font-family="&quot;Liberation Sans&quot;,sans-serif" textLength="7.4" lengthAdjust="spacingAndGlyphs">20...</text>
<text x="636.2" y="569" font-size="4.75" fill="#404040" font-family="&quot;Liberation Sans&quot;,sans-serif" textLength="4.4" lengthAdjust="spacingAndGlyphs">30</text>
<text x="648" y="569" font-size="4.75" fill="#404040" font-family="&quot;Liberation Sans&quot;,sans-serif" textLength="9.9" lengthAdjust="spacingAndGlyphs">30.72</text>
<text x="669.8" y="569" font-size="4.75" fill="#404040" font-family="&quot;Liberation Sans&quot;,sans-serif" textLength="7.4" lengthAdjust="spacingAndGlyphs">21...</text>
<text x="636.2" y="576" font-size="4.75" fill="#404040" font-family="&quot;Liberation Sans&quot;,sans-serif" textLength="4.4" lengthAdjust="spacingAndGlyphs">31</text>
<text x="648" y="576" font-size="4.75" fill="#404040" font-family="&quot;Liberation Sans&quot;,sans-serif" textLength="12.1" lengthAdjust="spacingAndGlyphs">31.744</text>
<text x="669.8" y="576" font-size="4.75" fill="#404040" font-family="&quot;Liberation Sans&quot;,sans-serif" textLength="7.4" lengthAdjust="spacingAndGlyphs">22...</text>
</g>
<rect x="873.6" y="352.7" width="5.9" height="223" fill="#f0f0f0"/>
<rect x="874" y="359" width="5.2" height="6.8" fill="#c4c4c4"/>
<path d="M875.5 356.4 L876.6 355.3 L877.7 356.4" fill="none" stroke="#444" stroke-width="0.5"/>
<path d="M875.5 571.4 L876.6 572.5 L877.7 571.4" fill="none" stroke="#444" stroke-width="0.5"/>
<rect x="633.3" y="575.8" width="246.2" height="4.8" fill="#f0f0f0"/>
<rect x="640.2" y="576" width="94" height="4.5" fill="#c4c4c4"/>
<path d="M637 577.2 L636 578.2 L637 579.2" fill="none" stroke="#444" stroke-width="0.5"/>
<path d="M870 577.2 L871 578.2 L870 579.2" fill="none" stroke="#444" stroke-width="0.5"/>
<rect x="629.5" y="584.2" width="254.9" height="8.4" fill="#f0f0f0"/>
<line x1="629.5" y1="584" x2="884.4" y2="584" stroke="#dcdcdc" stroke-width="0.5"/>
<rect x="633" y="584.2" width="21.4" height="8.6" fill="#fff"/>
<line x1="654.4" y1="584.5" x2="654.4" y2="592.4" stroke="#d0d0d0" stroke-width="0.5"/>
<line x1="678.4" y1="584.5" x2="678.4" y2="592.4" stroke="#d0d0d0" stroke-width="0.5"/>
<line x1="705" y1="584.5" x2="705" y2="592.4" stroke="#d0d0d0" stroke-width="0.5"/>
<line x1="730.6" y1="584.5" x2="730.6" y2="592.4" stroke="#d0d0d0" stroke-width="0.5"/>
<text x="634" y="590" font-size="5.08" fill="#404040" font-family="&quot;Liberation Sans&quot;,sans-serif" textLength="18.7" lengthAdjust="spacingAndGlyphs">Waveform</text>
<text x="656.7" y="590" font-size="5.08" fill="#1c1c1c" font-family="&quot;Liberation Sans&quot;,sans-serif" textLength="20.3" lengthAdjust="spacingAndGlyphs">Histogram</text>
<text x="680.7" y="590" font-size="5.08" fill="#1c1c1c" font-family="&quot;Liberation Sans&quot;,sans-serif" textLength="22.7" lengthAdjust="spacingAndGlyphs">Digital Filter</text>
<text x="707.7" y="590" font-size="5.08" fill="#1c1c1c" font-family="&quot;Liberation Sans&quot;,sans-serif" textLength="21.3" lengthAdjust="spacingAndGlyphs">Application</text>
<rect x="203.2" y="595.2" width="681.4" height="45.1" fill="#fff" stroke="#cfcfcf" stroke-width="0.6"/>
<rect x="203.4" y="595.4" width="681" height="7.6" fill="#f0f0f0"/>
<rect x="203.4" y="603" width="681" height="6.8" fill="#f0f0f0"/>
<line x1="203.4" y1="603" x2="884.4" y2="603" stroke="#dcdcdc" stroke-width="0.5"/>
<line x1="203.4" y1="595.4" x2="235.5" y2="595.4" stroke="#8a8a8a" stroke-width="0.8"/>
<line x1="235.5" y1="595.3" x2="235.5" y2="603" stroke="#c4c4c4" stroke-width="0.5"/>
<rect x="205" y="597" width="4.6" height="3.6" fill="#3b6fc4" stroke="#2b4f94" stroke-width="0.4" rx="0.5"/>
<rect x="205.8" y="597.7" width="3" height="2.2" fill="#dfeaff"/>
<line x1="206.2" y1="601.4" x2="208.4" y2="601.4" stroke="#2b4f94" stroke-width="0.6"/>
<text x="211.3" y="601" font-size="5.18" fill="#303030" font-family="&quot;Liberation Sans&quot;,sans-serif" textLength="15" lengthAdjust="spacingAndGlyphs">Console</text>
<line x1="229.5" y1="598" x2="232.1" y2="600.6" stroke="#777" stroke-width="0.5"/>
<line x1="229.5" y1="600.6" x2="232.1" y2="598" stroke="#777" stroke-width="0.5"/>
<text x="203.8" y="608" font-size="4.97" fill="#1c1c1c" font-family="&quot;Liberation Sans&quot;,sans-serif" textLength="19.2" lengthAdjust="spacingAndGlyphs">QE for AFE</text>
<rect x="203.6" y="609.8" width="680.6" height="24.2" fill="#fff" stroke="#e0e0e0" stroke-width="0.4"/>
<text x="204.6" y="614" font-size="4.12" fill="#1c1c1c" font-family="&quot;Liberation Mono&quot;,monospace" textLength="121.03" lengthAdjust="spacingAndGlyphs">[Info]Firmware information: RSSKRX23E-B FW V1.0 .</text>
<text x="204.6" y="620" font-size="4.12" fill="#1c1c1c" font-family="&quot;Liberation Mono&quot;,monospace" textLength="98.8" lengthAdjust="spacingAndGlyphs">[Info]Firmware support Monitor function.</text>
<text x="204.6" y="625" font-size="4.12" fill="#1c1c1c" font-family="&quot;Liberation Mono&quot;,monospace" textLength="150.67" lengthAdjust="spacingAndGlyphs">[Info]Read register value from the target board successfully.</text>
<rect x="203.6" y="634.2" width="680.6" height="5.4" fill="#f0f0f0"/>
<path d="M207.2 635.8 L206.2 636.8 L207.2 637.8" fill="none" stroke="#aaa" stroke-width="0.45"/>
<path d="M873.9 635.6 L874.9 636.6 L873.9 637.6" fill="none" stroke="#aaa" stroke-width="0.45"/>
<rect x="877.6" y="610" width="5.8" height="24" fill="#f0f0f0"/>
<rect x="877.9" y="617" width="5.2" height="10.4" fill="#c4c4c4"/>
<path d="M879.1 613.7 L880.4 612.3 L881.7 613.7" fill="none" stroke="#444" stroke-width="0.55"/>
<path d="M879.1 630.2 L880.4 631.6 L881.7 630.2" fill="none" stroke="#444" stroke-width="0.55"/>
<rect x="805.6" y="596.5" width="4" height="4.7" fill="#dfe6f0" stroke="#a9b7cc" stroke-width="0.4"/>
<line x1="806.4" y1="598" x2="808.8" y2="598" stroke="#a9b7cc" stroke-width="0.35"/>
<line x1="806.4" y1="599.2" x2="808.8" y2="599.2" stroke="#a9b7cc" stroke-width="0.35"/>
<path d="M809 599.6 L810.6 601.2" fill="none" stroke="#444" stroke-width="0.5"/>
<path d="M810.6 599.6 L809 601.2" fill="none" stroke="#444" stroke-width="0.5"/>
<rect x="814.2" y="596.5" width="4" height="4.7" fill="#cfdcf0" stroke="#7f9fd0" stroke-width="0.4"/>
<line x1="815" y1="598" x2="817.4" y2="598" stroke="#7f9fd0" stroke-width="0.35"/>
<line x1="815" y1="599.2" x2="817.4" y2="599.2" stroke="#7f9fd0" stroke-width="0.35"/>
<rect x="814.4" y="599.2" width="2.4" height="2.1" fill="#e8a838" stroke="#c98a1a" stroke-width="0.3"/>
<rect x="822.4" y="596.5" width="4" height="4.7" fill="#eef0f4" stroke="#c3c8d2" stroke-width="0.4"/>
<line x1="823.2" y1="598" x2="825.6" y2="598" stroke="#c3c8d2" stroke-width="0.35"/>
<line x1="823.2" y1="599.2" x2="825.6" y2="599.2" stroke="#c3c8d2" stroke-width="0.35"/>
<path d="M824 600.6 L826.8 597.4" fill="none" stroke="#e0a040" stroke-width="0.9"/>
<line x1="829.6" y1="596.2" x2="829.6" y2="601.8" stroke="#c8c8c8" stroke-width="0.5"/>
<rect x="833.2" y="597.4" width="4.4" height="3.6" fill="#f4f8ff" stroke="#3f6fc0" stroke-width="0.5"/>
<line x1="833.2" y1="598" x2="837.6" y2="598" stroke="#3f6fc0" stroke-width="0.8"/>
<path d="M835.8 597.2 L836.8 598 L838.2 596.2" fill="none" stroke="#1a9a2a" stroke-width="0.8"/>
<circle cx="844" cy="598.8" r="2.2" fill="#e4e4e4" stroke="#9a9a9a" stroke-width="0.5"/>
<line x1="844" y1="598.8" x2="844" y2="597.5" stroke="#888" stroke-width="0.4"/>
<path d="M849.5 598.4 L851.3 598.4 L850.4 599.6 Z" fill="#555" stroke="#555" stroke-width="0.2"/>
<rect x="855" y="596.8" width="4.8" height="4.2" fill="#f8f8ff" stroke="#6f8fc8" stroke-width="0.5"/>
<line x1="855" y1="597.5" x2="859.8" y2="597.5" stroke="#3f6fc0" stroke-width="0.9"/>
<rect x="858.4" y="596.4" width="1.6" height="1.6" fill="#f0b040"/>
<path d="M863 598.4 L864.8 598.4 L863.9 599.6 Z" fill="#555" stroke="#555" stroke-width="0.2"/>
<rect x="868.8" y="596.8" width="3.8" height="1.2" fill="#fafafa" stroke="#8a8a8a" stroke-width="0.45"/>
<rect x="876.8" y="596.8" width="3.8" height="3.6" fill="#fafafa" stroke="#5a5a5a" stroke-width="0.5"/>
<line x1="876.8" y1="597.2" x2="880.6" y2="597.2" stroke="#5a5a5a" stroke-width="0.8"/>
</svg>
</body></html>
